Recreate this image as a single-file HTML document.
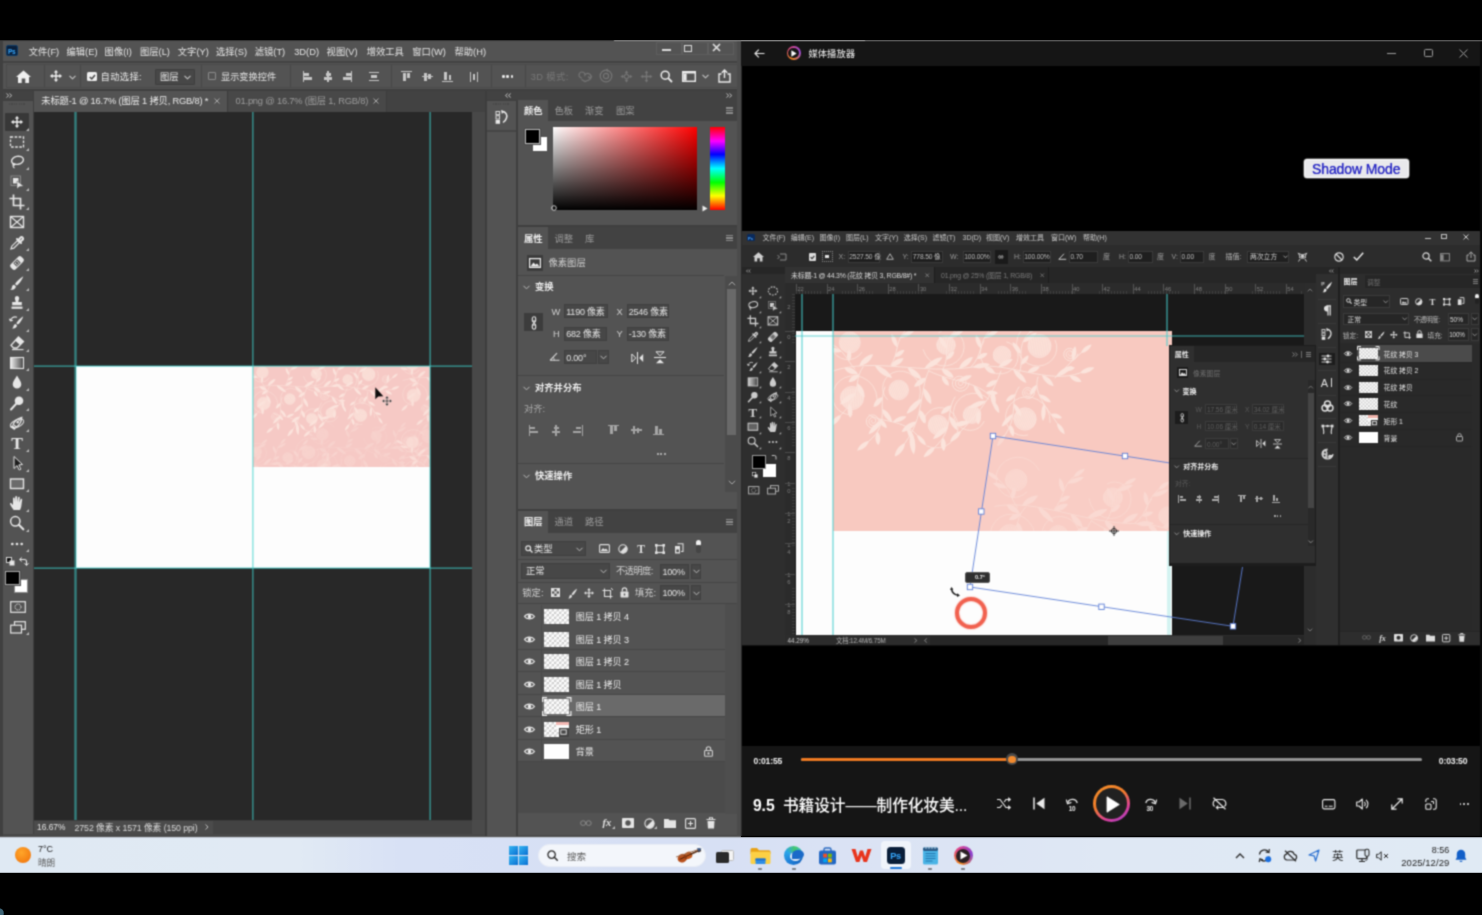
<!DOCTYPE html>
<html lang="zh-CN"><head><meta charset="utf-8"><title>screen</title><style>
*{box-sizing:border-box}
html,body{margin:0;padding:0}
body{background:#000;width:1482px;height:915px;position:relative;overflow:hidden;font-family:"Liberation Sans","Noto Sans CJK SC",sans-serif;}
.a{position:absolute}
.t{position:absolute;white-space:nowrap;color:#ddd;font-size:9.5px}
svg{overflow:visible}
#root{position:absolute;left:0;top:0;width:1482px;height:915px;overflow:hidden}
</style></head><body>
<svg width="0" height="0" style="position:absolute"><defs><filter id="soft" x="0" y="0" width="100%" height="100%" color-interpolation-filters="sRGB"><feConvolveMatrix order="3" kernelMatrix="0.0439 0.1217 0.0439 0.1217 0.3392 0.1217 0.0439 0.1217 0.0439" edgeMode="duplicate" preserveAlpha="true"/></filter></defs></svg>
<div id="root" style="filter:url(#soft)">
<div class="a" style="left:0px;top:40px;width:741px;height:796.5px;background:#535353;"></div>
<div class="a" style="left:0px;top:40px;width:3px;height:796px;background:#404040;"></div>
<div class="a" style="left:737px;top:40px;width:4.3px;height:796px;background:#4b4b4b;"></div>
<div class="a" style="left:0px;top:40px;width:614px;height:1.2px;background:#3c3c3c;"></div>
<div class="a" style="left:614px;top:40px;width:127.3px;height:1.3px;background:#a2a2a2;"></div>
<div class="a" style="left:6.3px;top:44.8px;width:12px;height:11.6px;background:#0a1f3a;border-radius:2px;border:1px solid #0d3a66"></div>
<div class="t" style="left:7.9px;top:47.2px;font-size:6.6px;line-height:9.2px;color:#35a8ff;font-weight:bold;letter-spacing:-0.3px">Ps</div>
<div class="t" style="left:28.7px;top:45.7px;font-size:9.3px;line-height:13.0px;color:#e6e6e6;">文件(F)</div>
<div class="t" style="left:66.5px;top:45.7px;font-size:9.3px;line-height:13.0px;color:#e6e6e6;">编辑(E)</div>
<div class="t" style="left:104.6px;top:45.7px;font-size:9.3px;line-height:13.0px;color:#e6e6e6;">图像(I)</div>
<div class="t" style="left:140px;top:45.7px;font-size:9.3px;line-height:13.0px;color:#e6e6e6;">图层(L)</div>
<div class="t" style="left:177.8px;top:45.7px;font-size:9.3px;line-height:13.0px;color:#e6e6e6;">文字(Y)</div>
<div class="t" style="left:216px;top:45.7px;font-size:9.3px;line-height:13.0px;color:#e6e6e6;">选择(S)</div>
<div class="t" style="left:254.7px;top:45.7px;font-size:9.3px;line-height:13.0px;color:#e6e6e6;">滤镜(T)</div>
<div class="t" style="left:294.2px;top:45.7px;font-size:9.3px;line-height:13.0px;color:#e6e6e6;">3D(D)</div>
<div class="t" style="left:326.6px;top:45.7px;font-size:9.3px;line-height:13.0px;color:#e6e6e6;">视图(V)</div>
<div class="t" style="left:366.7px;top:45.7px;font-size:9.3px;line-height:13.0px;color:#e6e6e6;">增效工具</div>
<div class="t" style="left:412.3px;top:45.7px;font-size:9.3px;line-height:13.0px;color:#e6e6e6;">窗口(W)</div>
<div class="t" style="left:454.5px;top:45.7px;font-size:9.3px;line-height:13.0px;color:#e6e6e6;">帮助(H)</div>
<div class="a" style="left:656px;top:42px;width:26px;height:13px;background:transparent;border:1px solid #5e5e5e"></div>
<div class="a" style="left:682px;top:42px;width:26px;height:13px;background:transparent;border:1px solid #5e5e5e"></div>
<div class="a" style="left:708px;top:42px;width:26px;height:13px;background:transparent;border:1px solid #5e5e5e"></div>
<div class="a" style="left:662px;top:49px;width:9px;height:2px;background:#dcdcdc;"></div>
<div class="a" style="left:684px;top:45px;width:8px;height:7px;background:transparent;border:1.6px solid #dcdcdc"></div>
<svg class="a" style="left:712px;top:43px;" width="9" height="9" viewBox="0 0 9 9"><path d="M1 1 L8 8 M8 1 L1 8" stroke="#e0e0e0" stroke-width="1.7" fill="none"/></svg>
<div class="a" style="left:3px;top:61px;width:734px;height:1.5px;background:#434343;"></div>
<div class="a" style="left:3px;top:62.5px;width:734px;height:27px;background:#535353;"></div>
<div class="a" style="left:6px;top:64px;width:731px;height:24px;background:transparent;border:1px solid #4a4a4a;border-right:none"></div>
<div class="a" style="left:3px;top:89px;width:734px;height:2px;background:#3f3f3f;"></div>
<svg class="a" style="left:16px;top:70px;" width="15" height="13" viewBox="0 0 15 13"><path d="M7.5 0.5 L15 7 L13 7 L13 13 L9.3 13 L9.3 8.6 L5.7 8.6 L5.7 13 L2 13 L2 7 L0 7 Z" fill="#f0f0f0"/></svg>
<div class="a" style="left:43.5px;top:65px;width:1px;height:22px;background:#474747;"></div>
<svg class="a" style="left:49.7px;top:70.3px;" width="12" height="12" viewBox="0 0 12 12"><path d="M6 0 L8.2 2.6 L6.7 2.6 L6.7 5.3 L9.4 5.3 L9.4 3.8 L12 6 L9.4 8.2 L9.4 6.7 L6.7 6.7 L6.7 9.4 L8.2 9.4 L6 12 L3.8 9.4 L5.3 9.4 L5.3 6.7 L2.6 6.7 L2.6 8.2 L0 6 L2.6 3.8 L2.6 5.3 L5.3 5.3 L5.3 2.6 L3.8 2.6 Z" fill="#f0f0f0"/></svg>
<svg class="a" style="left:68.5px;top:74.5px;" width="7" height="5" viewBox="0 0 7 5"><path d="M0.5 0.8 L3.5 3.8 L6.5 0.8" stroke="#c8c8c8" stroke-width="1.1" fill="none"/></svg>
<div class="a" style="left:80px;top:65px;width:1px;height:22px;background:#474747;"></div>
<div class="a" style="left:87px;top:71.8px;width:9.5px;height:9.5px;background:#efefef;border-radius:1.5px"></div>
<svg class="a" style="left:88.6px;top:73.6px;" width="7" height="6" viewBox="0 0 7 6"><path d="M0.8 3 L2.8 5 L6 1" stroke="#444" stroke-width="1.5" fill="none"/></svg>
<div class="t" style="left:100.5px;top:71.0px;font-size:9.3px;line-height:13.0px;color:#e8e8e8;letter-spacing:0.35px">自动选择:</div>
<div class="a" style="left:154.5px;top:68.5px;width:40px;height:16.5px;background:#474747;border:1px solid #3e3e3e;border-radius:1px"></div>
<div class="t" style="left:160px;top:71.0px;font-size:9.3px;line-height:13.0px;color:#e8e8e8;">图层</div>
<svg class="a" style="left:184px;top:74.6px;" width="7" height="5" viewBox="0 0 7 5"><path d="M0.5 0.8 L3.5 3.8 L6.5 0.8" stroke="#c8c8c8" stroke-width="1.1" fill="none"/></svg>
<div class="a" style="left:200.5px;top:65px;width:1px;height:22px;background:#474747;"></div>
<div class="a" style="left:207.5px;top:72.3px;width:8px;height:8px;background:transparent;border:1px solid #8a8a8a;border-radius:1px"></div>
<div class="t" style="left:221px;top:71.0px;font-size:9.200000000000001px;line-height:12.9px;color:#e2e2e2;">显示变换控件</div>
<div class="a" style="left:289.5px;top:65px;width:1px;height:22px;background:#474747;"></div>
<div class="a" style="left:302.7px;top:71px;width:1.2px;height:11px;background:#c6c6c6;"></div>
<div class="a" style="left:304.4px;top:73px;width:5px;height:2.6px;background:#c6c6c6;"></div>
<div class="a" style="left:304.4px;top:77.3px;width:8px;height:2.6px;background:#c6c6c6;"></div>
<div class="a" style="left:327.4px;top:71px;width:1.2px;height:11px;background:#c6c6c6;"></div>
<div class="a" style="left:325.5px;top:73px;width:5px;height:2.6px;background:#c6c6c6;"></div>
<div class="a" style="left:324px;top:77.3px;width:8px;height:2.6px;background:#c6c6c6;"></div>
<div class="a" style="left:351.3px;top:71px;width:1.2px;height:11px;background:#c6c6c6;"></div>
<div class="a" style="left:345.8px;top:73px;width:5px;height:2.6px;background:#c6c6c6;"></div>
<div class="a" style="left:342.8px;top:77.3px;width:8px;height:2.6px;background:#c6c6c6;"></div>
<div class="a" style="left:368.8px;top:72px;width:10px;height:1.2px;background:#c6c6c6;"></div>
<div class="a" style="left:370.8px;top:75.3px;width:6px;height:2.4px;background:#c6c6c6;"></div>
<div class="a" style="left:368.8px;top:80px;width:10px;height:1.2px;background:#c6c6c6;"></div>
<div class="a" style="left:391px;top:65px;width:1px;height:22px;background:#474747;"></div>
<div class="a" style="left:401.0px;top:71px;width:11px;height:1.2px;background:#c6c6c6;"></div>
<div class="a" style="left:403.0px;top:72.7px;width:2.6px;height:8px;background:#c6c6c6;"></div>
<div class="a" style="left:407.3px;top:72.7px;width:2.6px;height:5px;background:#c6c6c6;"></div>
<div class="a" style="left:422.0px;top:75.9px;width:11px;height:1.2px;background:#c6c6c6;"></div>
<div class="a" style="left:424.0px;top:72.5px;width:2.6px;height:8px;background:#c6c6c6;"></div>
<div class="a" style="left:428.3px;top:74px;width:2.6px;height:5px;background:#c6c6c6;"></div>
<div class="a" style="left:442.2px;top:80.8px;width:11px;height:1.2px;background:#c6c6c6;"></div>
<div class="a" style="left:444.2px;top:72.3px;width:2.6px;height:8px;background:#c6c6c6;"></div>
<div class="a" style="left:448.5px;top:75.3px;width:2.6px;height:5px;background:#c6c6c6;"></div>
<div class="a" style="left:470px;top:71.5px;width:1.2px;height:10px;background:#c6c6c6;"></div>
<div class="a" style="left:472.8px;top:73.5px;width:2.4px;height:6px;background:#c6c6c6;"></div>
<div class="a" style="left:476.8px;top:71.5px;width:1.2px;height:10px;background:#c6c6c6;"></div>
<div class="a" style="left:491px;top:65px;width:1px;height:22px;background:#474747;"></div>
<div class="a" style="left:502.0px;top:75.3px;width:2.6px;height:2.6px;background:#ececec;border-radius:50%"></div>
<div class="a" style="left:506.3px;top:75.3px;width:2.6px;height:2.6px;background:#ececec;border-radius:50%"></div>
<div class="a" style="left:510.6px;top:75.3px;width:2.6px;height:2.6px;background:#ececec;border-radius:50%"></div>
<div class="a" style="left:524.5px;top:65px;width:1px;height:22px;background:#474747;"></div>
<div class="t" style="left:530.7px;top:70.7px;font-size:9.3px;line-height:13.0px;color:#787878;letter-spacing:0.4px">3D 模式:</div>
<svg class="a" style="left:579px;top:70px;" width="14" height="13" viewBox="0 0 14 13"><path d="M3 8 A3 3 0 1 1 6 5 A3.2 3.2 0 1 1 11.5 8.5 M2.5 9.5 L6 11.5 L11 9.5 M9 6.5 L11.5 8.7 L12.8 5.8" stroke="#767676" stroke-width="1.2" fill="none"/></svg>
<svg class="a" style="left:599.4px;top:69.3px;" width="14" height="14" viewBox="0 0 14 14"><circle cx="7" cy="7" r="5.8" stroke="#767676" stroke-width="1.2" fill="none"/><circle cx="7" cy="7" r="2.6" stroke="#767676" stroke-width="1.2" fill="none"/><path d="M7 1 L9 0 M7 1 L8.6 2.8" stroke="#767676" stroke-width="1"/></svg>
<svg class="a" style="left:619.5px;top:69.8px;" width="13" height="13" viewBox="0 0 13 13"><path d="M6.5 0.5 L8.3 3 L4.7 3 Z M6.5 12.5 L8.3 10 L4.7 10 Z M0.5 6.5 L3 4.7 L3 8.3 Z M12.5 6.5 L10 4.7 L10 8.3 Z" fill="#767676"/><path d="M6.5 3.6 L9.4 6.5 L6.5 9.4 L3.6 6.5 Z" stroke="#767676" stroke-width="1.1" fill="none"/></svg>
<svg class="a" style="left:639.7px;top:69.8px;" width="13" height="13" viewBox="0 0 13 13"><path d="M6.5 0.5 L8.3 3 L4.7 3 Z M6.5 12.5 L8.3 10 L4.7 10 Z M0.5 6.5 L3 4.7 L3 8.3 Z M12.5 6.5 L10 4.7 L10 8.3 Z" fill="#767676"/><path d="M6.5 3 L6.5 10 M3 6.5 L10 6.5" stroke="#767676" stroke-width="1.3"/></svg>
<svg class="a" style="left:659.5px;top:70px;" width="13" height="13" viewBox="0 0 13 13"><circle cx="5.2" cy="5.2" r="4" stroke="#ececec" stroke-width="1.5" fill="none"/><path d="M8.2 8.2 L12 12" stroke="#ececec" stroke-width="1.8"/></svg>
<svg class="a" style="left:682px;top:71px;" width="14" height="11" viewBox="0 0 14 11"><rect x="0.7" y="0.7" width="12.6" height="9.6" stroke="#ececec" stroke-width="1.4" fill="none"/><rect x="1.4" y="2.6" width="3.2" height="7" fill="#ececec"/><rect x="0.7" y="0.7" width="12.6" height="1.8" fill="#ececec"/></svg>
<svg class="a" style="left:702.3px;top:74.3px;" width="7" height="5" viewBox="0 0 7 5"><path d="M0.5 0.8 L3.5 3.8 L6.5 0.8" stroke="#c8c8c8" stroke-width="1.1" fill="none"/></svg>
<svg class="a" style="left:717.5px;top:68.5px;" width="13" height="14" viewBox="0 0 13 14"><path d="M3.5 5 L1 5 L1 13 L12 13 L12 5 L9.5 5" stroke="#ececec" stroke-width="1.4" fill="none"/><path d="M6.5 9 L6.5 1.5 M3.8 3.8 L6.5 1 L9.2 3.8" stroke="#ececec" stroke-width="1.4" fill="none"/></svg>
<div class="a" style="left:3px;top:91px;width:734px;height:20.7px;background:#424242;"></div>
<div class="a" style="left:33px;top:91px;width:193.5px;height:20.7px;background:#535353;"></div>
<div class="a" style="left:227.5px;top:91px;width:158px;height:20.7px;background:#484848;"></div>
<div class="a" style="left:226.5px;top:91px;width:1px;height:20.7px;background:#3c3c3c;"></div>
<div class="a" style="left:385.5px;top:91px;width:1px;height:20.7px;background:#3c3c3c;"></div>
<div class="t" style="left:41.3px;top:95.4px;font-size:9.3px;line-height:13.0px;color:#ececec;letter-spacing:-0.18px">未标题-1 @ 16.7% (图层 1 拷贝, RGB/8) *</div>
<svg class="a" style="left:214px;top:98.3px;" width="6" height="6" viewBox="0 0 6 6"><path d="M0.5 0.5 L5.5 5.5 M5.5 0.5 L0.5 5.5" stroke="#a5a5a5" stroke-width="1"/></svg>
<div class="t" style="left:235.5px;top:95.4px;font-size:9.3px;line-height:13.0px;color:#9d9d9d;letter-spacing:-0.18px">01.png @ 16.7% (图层 1, RGB/8)</div>
<svg class="a" style="left:373.3px;top:98.3px;" width="6" height="6" viewBox="0 0 6 6"><path d="M0.5 0.5 L5.5 5.5 M5.5 0.5 L0.5 5.5" stroke="#a5a5a5" stroke-width="1"/></svg>
<div class="a" style="left:3px;top:91px;width:29.5px;height:745px;background:#535353;"></div>
<div class="a" style="left:3px;top:91px;width:29.5px;height:8.5px;background:#424242;"></div>
<svg class="a" style="left:6px;top:92.5px;" width="7" height="5" viewBox="0 0 7 5"><path d="M0.5 0.5 L2.7 2.5 L0.5 4.5 M3.5 0.5 L5.7 2.5 L3.5 4.5" stroke="#d0d0d0" stroke-width="0.9" fill="none"/></svg>
<div class="a" style="left:3px;top:99.5px;width:29.5px;height:1px;background:#3f3f3f;"></div>
<div class="a" style="left:9.0px;top:102.5px;width:1.2px;height:2.2px;background:#484848;"></div>
<div class="a" style="left:11.4px;top:102.5px;width:1.2px;height:2.2px;background:#484848;"></div>
<div class="a" style="left:13.8px;top:102.5px;width:1.2px;height:2.2px;background:#484848;"></div>
<div class="a" style="left:16.2px;top:102.5px;width:1.2px;height:2.2px;background:#484848;"></div>
<div class="a" style="left:18.6px;top:102.5px;width:1.2px;height:2.2px;background:#484848;"></div>
<div class="a" style="left:21.0px;top:102.5px;width:1.2px;height:2.2px;background:#484848;"></div>
<div class="a" style="left:23.4px;top:102.5px;width:1.2px;height:2.2px;background:#484848;"></div>
<div class="a" style="left:32.5px;top:91px;width:1px;height:745px;background:#3f3f3f;"></div>
<div class="a" style="left:5.2px;top:113px;width:24px;height:18px;background:#383838;border-radius:1px"></div>
<svg class="a" style="left:9.3px;top:114.3px;" width="16" height="16" viewBox="0 0 16 16"><g transform="translate(2,2)"><path d="M6 0 L8.2 2.6 L6.7 2.6 L6.7 5.3 L9.4 5.3 L9.4 3.8 L12 6 L9.4 8.2 L9.4 6.7 L6.7 6.7 L6.7 9.4 L8.2 9.4 L6 12 L3.8 9.4 L5.3 9.4 L5.3 6.7 L2.6 6.7 L2.6 8.2 L0 6 L2.6 3.8 L2.6 5.3 L5.3 5.3 L5.3 2.6 L3.8 2.6 Z" fill="#f0f0f0"/></g></svg>
<svg class="a" style="left:25.5px;top:127.89999999999999px;" width="3" height="3" viewBox="0 0 3 3"><path d="M3 0 L3 3 L0 3 Z" fill="#bdbdbd"/></svg>
<svg class="a" style="left:9.3px;top:134px;" width="16" height="16" viewBox="0 0 16 16"><rect x="1.5" y="3" width="13" height="10" stroke="#e6e6e6" stroke-width="1.3" fill="none" stroke-dasharray="2.6 1.5"/></svg>
<svg class="a" style="left:25.5px;top:147.6px;" width="3" height="3" viewBox="0 0 3 3"><path d="M3 0 L3 3 L0 3 Z" fill="#bdbdbd"/></svg>
<svg class="a" style="left:9.3px;top:153.8px;" width="16" height="16" viewBox="0 0 16 16"><ellipse cx="8.5" cy="6.3" rx="6" ry="4" stroke="#e6e6e6" stroke-width="1.4" fill="none" transform="rotate(-12 8.5 6.3)"/><path d="M4.3 9 C3 10.5 4.5 12 5.5 11 C6.3 10 5 9.3 4.3 10.5 C3.8 12 4.5 13.5 5.5 14" stroke="#e6e6e6" stroke-width="1.1" fill="none"/></svg>
<svg class="a" style="left:25.5px;top:167.4px;" width="3" height="3" viewBox="0 0 3 3"><path d="M3 0 L3 3 L0 3 Z" fill="#bdbdbd"/></svg>
<svg class="a" style="left:9.3px;top:174px;" width="16" height="16" viewBox="0 0 16 16"><rect x="2" y="2" width="9.5" height="9.5" stroke="#8a8a8a" stroke-width="1" fill="none"/><rect x="4" y="4" width="5.5" height="5.5" fill="#e6e6e6"/><path d="M8 7 L8 15 L10.2 12.8 L14.5 12 Z" fill="#e6e6e6" stroke="#535353" stroke-width="0.5"/></svg>
<svg class="a" style="left:25.5px;top:187.6px;" width="3" height="3" viewBox="0 0 3 3"><path d="M3 0 L3 3 L0 3 Z" fill="#bdbdbd"/></svg>
<svg class="a" style="left:9.3px;top:193.8px;" width="16" height="16" viewBox="0 0 16 16"><path d="M4.5 0.5 L4.5 11.5 L15.5 11.5 M0.5 4.5 L11.5 4.5 L11.5 15.5" stroke="#e6e6e6" stroke-width="1.7" fill="none"/></svg>
<svg class="a" style="left:25.5px;top:207.4px;" width="3" height="3" viewBox="0 0 3 3"><path d="M3 0 L3 3 L0 3 Z" fill="#bdbdbd"/></svg>
<svg class="a" style="left:9.3px;top:214.3px;" width="16" height="16" viewBox="0 0 16 16"><rect x="1.5" y="2.5" width="13" height="11" stroke="#e6e6e6" stroke-width="1.4" fill="none"/><path d="M1.5 2.5 L14.5 13.5 M14.5 2.5 L1.5 13.5" stroke="#e6e6e6" stroke-width="1.1"/></svg>
<svg class="a" style="left:9.3px;top:234.6px;" width="16" height="16" viewBox="0 0 16 16"><path d="M2 14 L2.8 11.2 L8.5 5.5 L10.5 7.5 L4.8 13.2 Z" stroke="#e6e6e6" stroke-width="1.2" fill="none"/><path d="M8 4 L12 8 M9.5 5 L12 2.2 A1.6 1.6 0 0 1 14 4.3 L11.2 6.8" stroke="#e6e6e6" stroke-width="2" fill="none" stroke-linecap="round"/></svg>
<svg class="a" style="left:25.5px;top:248.2px;" width="3" height="3" viewBox="0 0 3 3"><path d="M3 0 L3 3 L0 3 Z" fill="#bdbdbd"/></svg>
<svg class="a" style="left:9.3px;top:254.5px;" width="16" height="16" viewBox="0 0 16 16"><g transform="rotate(-45 8 8)"><rect x="0.5" y="4.5" width="15" height="7" rx="2.2" fill="#e6e6e6"/><rect x="5.2" y="5.5" width="5.6" height="5" fill="#535353"/><circle cx="6.8" cy="7" r="0.7" fill="#e6e6e6"/><circle cx="9.2" cy="7" r="0.7" fill="#e6e6e6"/><circle cx="6.8" cy="9.2" r="0.7" fill="#e6e6e6"/><circle cx="9.2" cy="9.2" r="0.7" fill="#e6e6e6"/></g></svg>
<svg class="a" style="left:25.5px;top:268.1px;" width="3" height="3" viewBox="0 0 3 3"><path d="M3 0 L3 3 L0 3 Z" fill="#bdbdbd"/></svg>
<svg class="a" style="left:9.3px;top:274.6px;" width="16" height="16" viewBox="0 0 16 16"><path d="M14.3 1.2 C11 3 7.5 6.5 6 9 L7.6 10.5 C10 9 13 5 14.3 1.2 Z" fill="#e6e6e6"/><path d="M5.2 9.8 C3.5 10 3 11.5 2.8 12.8 C2.6 13.8 2 14.3 1.2 14.6 C3.5 15.3 6.5 14.3 6.9 11.4 Z" fill="#e6e6e6"/></svg>
<svg class="a" style="left:25.5px;top:288.20000000000005px;" width="3" height="3" viewBox="0 0 3 3"><path d="M3 0 L3 3 L0 3 Z" fill="#bdbdbd"/></svg>
<svg class="a" style="left:9.3px;top:294.6px;" width="16" height="16" viewBox="0 0 16 16"><path d="M6.3 1.8 A2.5 2.5 0 0 1 9.7 1.8 C11 3.3 9.3 5.2 9.3 7 L12.8 7 L12.8 10.2 L3.2 10.2 L3.2 7 L6.7 7 C6.7 5.2 5 3.3 6.3 1.8 Z" fill="#e6e6e6"/><rect x="2.5" y="11.6" width="11" height="2.2" fill="#e6e6e6"/></svg>
<svg class="a" style="left:25.5px;top:308.20000000000005px;" width="3" height="3" viewBox="0 0 3 3"><path d="M3 0 L3 3 L0 3 Z" fill="#bdbdbd"/></svg>
<svg class="a" style="left:9.3px;top:315px;" width="16" height="16" viewBox="0 0 16 16"><path d="M14.3 1.2 C11.5 3 8.5 6 7.3 8.2 L8.8 9.6 C11 8 13.3 4.5 14.3 1.2 Z" fill="#e6e6e6"/><path d="M6.6 9 C5 9.3 4.6 10.5 4.4 11.6 C4.3 12.5 3.8 13 3 13.3 C5 14 7.6 13.2 8 10.5 Z" fill="#e6e6e6"/><path d="M1.5 6 A4.5 4.5 0 0 1 8 2.3 M1.5 6 L0.5 3.8 M1.5 6 L3.8 5.2" stroke="#e6e6e6" stroke-width="1.2" fill="none"/></svg>
<svg class="a" style="left:25.5px;top:328.6px;" width="3" height="3" viewBox="0 0 3 3"><path d="M3 0 L3 3 L0 3 Z" fill="#bdbdbd"/></svg>
<svg class="a" style="left:9.3px;top:335.2px;" width="16" height="16" viewBox="0 0 16 16"><path d="M9.5 2 L14.5 6.5 L8 13 L4.5 13 L2 10.3 Z" stroke="#e6e6e6" stroke-width="1.3" fill="none"/><path d="M9.5 2 L14.5 6.5 L11 10 L6 5.5 Z" fill="#e6e6e6"/><path d="M3 14.6 L14.5 14.6" stroke="#e6e6e6" stroke-width="1.1"/></svg>
<svg class="a" style="left:25.5px;top:348.8px;" width="3" height="3" viewBox="0 0 3 3"><path d="M3 0 L3 3 L0 3 Z" fill="#bdbdbd"/></svg>
<svg class="a" style="left:9.3px;top:354.5px;" width="16" height="16" viewBox="0 0 16 16"><defs><linearGradient id="tg" x1="0" x2="1"><stop offset="0" stop-color="#f0f0f0"/><stop offset="1" stop-color="#444"/></linearGradient></defs><rect x="1.5" y="2.5" width="13" height="11" fill="url(#tg)" stroke="#e6e6e6" stroke-width="1.1"/></svg>
<svg class="a" style="left:25.5px;top:368.1px;" width="3" height="3" viewBox="0 0 3 3"><path d="M3 0 L3 3 L0 3 Z" fill="#bdbdbd"/></svg>
<svg class="a" style="left:9.3px;top:374.4px;" width="16" height="16" viewBox="0 0 16 16"><path d="M8 1.5 C10 5 12.3 7.5 12.3 10.3 A4.3 4.3 0 0 1 3.7 10.3 C3.7 7.5 6 5 8 1.5 Z" fill="#e6e6e6"/></svg>
<svg class="a" style="left:25.5px;top:388.0px;" width="3" height="3" viewBox="0 0 3 3"><path d="M3 0 L3 3 L0 3 Z" fill="#bdbdbd"/></svg>
<svg class="a" style="left:9.3px;top:394.6px;" width="16" height="16" viewBox="0 0 16 16"><circle cx="10" cy="5.8" r="4.3" fill="#e6e6e6"/><path d="M7 9 L2 14.5" stroke="#e6e6e6" stroke-width="2" stroke-linecap="round"/></svg>
<svg class="a" style="left:25.5px;top:408.20000000000005px;" width="3" height="3" viewBox="0 0 3 3"><path d="M3 0 L3 3 L0 3 Z" fill="#bdbdbd"/></svg>
<svg class="a" style="left:9.3px;top:415px;" width="16" height="16" viewBox="0 0 16 16"><g transform="rotate(40 8 8)"><path d="M8 0.5 C10.5 4 11.5 7.5 10 11.5 L6 11.5 C4.5 7.5 5.5 4 8 0.5 Z" stroke="#e6e6e6" stroke-width="1.3" fill="none"/><circle cx="8" cy="7" r="1.3" fill="#e6e6e6"/><path d="M8 0.5 L8 5.8" stroke="#e6e6e6" stroke-width="1"/><rect x="5.5" y="12.6" width="5" height="2.6" fill="#e6e6e6"/></g><ellipse cx="8" cy="8.5" rx="7.3" ry="3.6" stroke="#e6e6e6" stroke-width="0.9" fill="none" transform="rotate(-25 8 8.5)"/></svg>
<svg class="a" style="left:25.5px;top:428.6px;" width="3" height="3" viewBox="0 0 3 3"><path d="M3 0 L3 3 L0 3 Z" fill="#bdbdbd"/></svg>
<svg class="a" style="left:9.3px;top:435.4px;" width="16" height="16" viewBox="0 0 16 16"><text x="8" y="14.2" text-anchor="middle" font-family="Liberation Serif,serif" font-weight="bold" font-size="17.5" fill="#e6e6e6">T</text></svg>
<svg class="a" style="left:25.5px;top:449.0px;" width="3" height="3" viewBox="0 0 3 3"><path d="M3 0 L3 3 L0 3 Z" fill="#bdbdbd"/></svg>
<svg class="a" style="left:9.3px;top:455.3px;" width="16" height="16" viewBox="0 0 16 16"><path d="M5 1.5 L5 13.5 L8 10.6 L10.2 15 L11.9 14.2 L9.8 9.9 L13.5 9.5 Z" fill="#1c1c1c" stroke="#e6e6e6" stroke-width="1"/></svg>
<svg class="a" style="left:25.5px;top:468.90000000000003px;" width="3" height="3" viewBox="0 0 3 3"><path d="M3 0 L3 3 L0 3 Z" fill="#bdbdbd"/></svg>
<svg class="a" style="left:9.3px;top:475.5px;" width="16" height="16" viewBox="0 0 16 16"><rect x="1.5" y="3" width="13" height="9.5" stroke="#e6e6e6" stroke-width="1.4" fill="#6b6b6b"/></svg>
<svg class="a" style="left:25.5px;top:489.1px;" width="3" height="3" viewBox="0 0 3 3"><path d="M3 0 L3 3 L0 3 Z" fill="#bdbdbd"/></svg>
<svg class="a" style="left:9.3px;top:495.4px;" width="16" height="16" viewBox="0 0 16 16"><path d="M4.6 15 C3 12.5 1.5 10.5 1 9 C0.8 8 1.9 7.6 2.6 8.4 L4 10 L4 3.3 C4 2.2 5.7 2.2 5.7 3.3 L6 7 L6.3 1.8 C6.4 0.7 8 0.7 8.1 1.8 L8.3 7 L9 2.4 C9.2 1.4 10.8 1.6 10.7 2.7 L10.4 7.5 L11.6 4.3 C12 3.4 13.4 3.8 13.2 4.9 C12.7 7.5 12.6 9.5 12.3 11.3 C12 13 11.5 14 11 15 Z" fill="#e6e6e6"/></svg>
<svg class="a" style="left:25.5px;top:509.0px;" width="3" height="3" viewBox="0 0 3 3"><path d="M3 0 L3 3 L0 3 Z" fill="#bdbdbd"/></svg>
<svg class="a" style="left:9.3px;top:515.2px;" width="16" height="16" viewBox="0 0 16 16"><circle cx="6.3" cy="6.3" r="4.7" stroke="#e6e6e6" stroke-width="1.5" fill="none"/><path d="M9.8 9.8 L14.3 14.3" stroke="#e6e6e6" stroke-width="2.1" stroke-linecap="round"/></svg>
<svg class="a" style="left:25.5px;top:528.8000000000001px;" width="3" height="3" viewBox="0 0 3 3"><path d="M3 0 L3 3 L0 3 Z" fill="#bdbdbd"/></svg>
<svg class="a" style="left:9.3px;top:535.6px;" width="16" height="16" viewBox="0 0 16 16"><circle cx="3.3" cy="8" r="1.35" fill="#e6e6e6"/><circle cx="8" cy="8" r="1.35" fill="#e6e6e6"/><circle cx="12.7" cy="8" r="1.35" fill="#e6e6e6"/></svg>
<svg class="a" style="left:25.5px;top:549.2px;" width="3" height="3" viewBox="0 0 3 3"><path d="M3 0 L3 3 L0 3 Z" fill="#bdbdbd"/></svg>
<svg class="a" style="left:5.5px;top:557px;" width="10" height="9" viewBox="0 0 10 9"><rect x="0.5" y="0.5" width="5" height="5" fill="#111" stroke="#e6e6e6" stroke-width="0.9"/><rect x="3.5" y="3.5" width="5" height="5" fill="#e6e6e6"/></svg>
<svg class="a" style="left:19px;top:556.5px;" width="9" height="9" viewBox="0 0 9 9"><path d="M1 2.5 L5.5 2.5 A2 2 0 0 1 7.5 4.5 L7.5 8" stroke="#e6e6e6" stroke-width="1.1" fill="none"/><path d="M2.8 0.5 L0.5 2.5 L2.8 4.5 M5.5 6.2 L7.5 8.5 L9.5 6.2" stroke="#e6e6e6" stroke-width="1" fill="none"/></svg>
<div class="a" style="left:13.8px;top:579px;width:14.5px;height:13.5px;background:#ffffff;border:1px solid #888"></div>
<div class="a" style="left:5px;top:571.3px;width:15px;height:13.6px;background:#000;border:1px solid #aaa;outline:1px solid #4a4a4a"></div>
<svg class="a" style="left:9.5px;top:600.5px;" width="16" height="12" viewBox="0 0 16 12"><rect x="0.7" y="0.7" width="14.6" height="10.6" stroke="#e6e6e6" stroke-width="1.2" fill="none"/><circle cx="8" cy="6" r="3" stroke="#e6e6e6" stroke-width="1" fill="none" stroke-dasharray="1.4 1"/></svg>
<svg class="a" style="left:9.5px;top:620.5px;" width="16" height="13" viewBox="0 0 16 13"><rect x="4.5" y="0.7" width="10.8" height="7.6" stroke="#e6e6e6" stroke-width="1.2" fill="#535353"/><rect x="0.7" y="4.2" width="10.8" height="7.8" stroke="#e6e6e6" stroke-width="1.2" fill="#535353"/></svg>
<svg class="a" style="left:25.5px;top:632px;" width="3" height="3" viewBox="0 0 3 3"><path d="M3 0 L3 3 L0 3 Z" fill="#bdbdbd"/></svg>
<div class="a" style="left:33.5px;top:111.7px;width:438px;height:708.3px;background:#282828;"></div>
<div class="a" style="left:76px;top:366px;width:354px;height:202px;background:#fdfdfd;"></div>
<div class="a" style="left:253px;top:366px;width:177px;height:101px;background:#f6c9c5;"></div>
<svg class="a" style="left:253px;top:366px;overflow:hidden" width="177" height="101" viewBox="0 0 177 101"><defs><g id="fl"><g fill="none" stroke="#fbe3dc" stroke-width="0.9" stroke-linecap="round"><path d="M0 40 C40 26 90 44 140 36 M140 36 C175 30 215 54 247 42 M96 39 C86 60 92 85 72 112 M168 40 C160 62 150 78 128 100 M58 34 C66 22 62 10 72 0 M138 36 C150 24 146 10 156 0 M30 36 C20 50 30 62 8 84 M205 46 C200 62 212 74 224 92 M96 40 C120 52 150 50 160 70 M22 38 C14 30 12 20 0 14 M110 38 C118 24 108 10 122 0 M186 42 C192 30 182 16 196 2 M222 47 C232 38 238 30 248 22 M52 56 C44 76 58 92 36 110 M122 66 C112 82 122 98 102 116 M186 56 C176 70 186 84 172 104 M36 84 C50 92 70 88 84 104"/><path d="M28.7 21.5 L25.7 24.8 L21.9 27.2 L17.4 28.5 L12.6 28.5 L7.8 27.1 L3.5 24.4 L0.0 20.4 L-2.3 15.6 L-3.2 10.1 L-2.5 4.5 L-0.2 -0.8 L3.6 -5.4 L8.6 -8.9 L14.4 -10.9 L20.8 -11.2 L27.1 -9.6 L32.9 -6.3 L37.6 -1.5 M19.0 83.6 L14.3 83.4 L9.7 81.9 L5.5 79.1 L2.3 75.2 L0.2 70.3 L-0.5 65.0 L0.4 59.5 L2.8 54.3 L6.6 49.9 L11.6 46.7 L17.5 45.0 L23.7 44.9 L29.8 46.6 L35.4 50.0 L39.9 54.9 L42.9 61.0 L44.1 67.9 L43.3 74.9 M54.4 68.5 L51.7 65.2 L50.1 61.2 L49.6 56.7 L50.4 52.2 L52.4 47.9 L55.7 44.2 L60.0 41.6 L65.0 40.2 L70.4 40.3 L75.6 41.9 L80.3 44.9 L84.1 49.2 L86.5 54.6 L87.4 60.5 L86.7 66.6 L84.1 72.4 L80.0 77.4 L74.6 81.1 M90.4 91.4 L91.2 87.3 L93.3 83.4 L96.4 80.2 L100.4 77.9 L105.0 76.7 L109.9 76.9 L114.7 78.5 L119.0 81.4 L122.3 85.5 L124.5 90.6 L125.2 96.1 L124.3 101.8 L121.8 107.1 L117.8 111.6 L112.6 115.0 L106.6 116.7 L100.2 116.8 L93.8 115.0 M105.8 1.6 L109.4 -0.4 L113.5 -1.3 L117.9 -1.0 L122.1 0.5 L125.9 3.2 L128.8 7.0 L130.6 11.5 L131.1 16.5 L130.2 21.6 L127.8 26.4 L124.1 30.4 L119.3 33.3 L113.7 34.8 L107.8 34.7 L102.1 32.9 L97.0 29.5 L92.9 24.7 L90.2 18.8 M173.7 11.0 L177.4 12.4 L180.7 14.9 L183.2 18.3 L184.7 22.3 L185.1 26.8 L184.1 31.4 L181.9 35.6 L178.4 39.1 L174.0 41.6 L169.0 42.8 L163.7 42.6 L158.5 40.8 L153.9 37.6 L150.3 33.1 L148.0 27.7 L147.3 21.7 L148.3 15.6 L151.0 10.0 M222.1 9.3 L223.6 13.8 L223.7 18.7 L222.5 23.5 L219.9 27.9 L216.0 31.5 L211.2 34.0 L205.8 35.1 L200.1 34.6 L194.7 32.5 L190.0 28.9 L186.3 24.0 L184.1 18.1 L183.6 11.8 L184.9 5.4 L188.0 -0.5 L192.7 -5.4 L198.7 -8.9 L205.6 -10.6 M151.0 90.5 L148.9 93.9 L145.9 96.7 L142.2 98.6 L137.9 99.4 L133.4 98.9 L129.1 97.2 L125.4 94.3 L122.5 90.3 L120.8 85.5 L120.5 80.3 L121.7 75.1 L124.3 70.4 L128.2 66.4 L133.3 63.6 L139.0 62.3 L145.0 62.6 L150.8 64.7 L155.9 68.3 M194.8 104.0 L190.3 104.6 L185.6 103.9 L181.1 101.9 L177.3 98.7 L174.4 94.4 L172.8 89.3 L172.7 83.9 L174.2 78.5 L177.1 73.6 L181.4 69.6 L186.8 66.9 L192.8 65.8 L199.0 66.4 L205.0 68.8 L210.2 72.8 L214.1 78.2 L216.5 84.6 L217.0 91.5" stroke-width="0.8"/><path d="M136.0 52.0 L135.0 55.6 L132.7 58.4 L129.6 60.0 L126.1 60.2 L123.0 58.9 L120.6 56.6 L119.5 53.5 L119.7 50.4 L121.2 47.7 L123.5 45.9 L126.4 45.2 L129.1 45.7 L131.4 47.3 L132.8 49.5 L133.1 52.1 L132.3 54.5 L130.7 56.3 L128.6 57.2 L126.3 57.2 L124.4 56.3 L123.0 54.8 L122.4 52.9 L122.6 51.0 L123.6 49.4 L125.0 48.4 L126.7 48.1 L128.3 48.5 L129.4 49.5 L130.1 50.7 L130.1 52.1 L129.6 53.3 L128.8 54.1 L127.7 54.4 L126.7 54.3 L125.9 53.8 L125.4 53.1 L125.3 52.3 L125.5 51.6 L125.9 51.1 M244.5 23.0 L243.7 26.0 L241.8 28.3 L239.1 29.7 L236.3 29.8 L233.6 28.8 L231.7 26.8 L230.8 24.3 L231.0 21.7 L232.2 19.4 L234.1 17.9 L236.5 17.3 L238.8 17.8 L240.7 19.1 L241.8 21.0 L242.1 23.1 L241.4 25.1 L240.1 26.6 L238.3 27.4 L236.4 27.4 L234.8 26.6 L233.6 25.3 L233.2 23.7 L233.4 22.1 L234.2 20.8 L235.4 20.0 L236.8 19.7 L238.0 20.1 L239.0 20.9 L239.6 22.0 L239.6 23.1 L239.2 24.1 L238.5 24.7 L237.6 25.0 L236.7 24.9 L236.0 24.5 L235.6 23.9 L235.6 23.2 L235.7 22.7 L236.1 22.3 M48.0 90.0 L47.1 93.2 L45.1 95.7 L42.3 97.1 L39.2 97.3 L36.4 96.2 L34.3 94.1 L33.4 91.4 L33.5 88.6 L34.8 86.2 L36.9 84.5 L39.4 83.9 L41.9 84.4 L43.9 85.8 L45.1 87.8 L45.4 90.1 L44.7 92.2 L43.3 93.8 L41.4 94.7 L39.4 94.7 L37.7 93.9 L36.4 92.5 L35.9 90.8 L36.1 89.1 L37.0 87.7 L38.3 86.8 L39.7 86.5 L41.1 86.9 L42.2 87.7 L42.7 88.9 L42.8 90.1 L42.3 91.1 L41.6 91.9 L40.6 92.2 L39.7 92.1 L39.0 91.6 L38.6 91.0 L38.5 90.3 L38.7 89.7 L39.0 89.2 M201.5 61.5 L200.8 64.1 L199.1 66.1 L196.9 67.3 L194.4 67.4 L192.1 66.5 L190.4 64.8 L189.6 62.6 L189.8 60.3 L190.8 58.4 L192.5 57.1 L194.5 56.6 L196.5 57.0 L198.2 58.1 L199.2 59.7 L199.4 61.6 L198.8 63.3 L197.7 64.6 L196.1 65.3 L194.5 65.3 L193.1 64.6 L192.1 63.5 L191.7 62.1 L191.8 60.7 L192.5 59.6 L193.6 58.9 L194.8 58.7 L195.9 59.0 L196.8 59.7 L197.2 60.6 L197.3 61.6 L196.9 62.4 L196.3 63.0 L195.5 63.3 L194.8 63.2 L194.2 62.8 L193.8 62.3 L193.7 61.7 L193.9 61.2 L194.2 60.9" stroke-width="0.9"/></g><g fill="#fbe3dc" stroke="none"><path transform="translate(11.4 36.9) rotate(24)" d="M0 0 C4.4 -4.0 11.1 -3.2 14.8 0 C11.1 3.2 4.4 4.0 0 0Z"/><path transform="translate(26.3 34.9) rotate(-40)" d="M0 0 C5.4 -4.0 13.5 -3.2 18.0 0 C13.5 3.2 5.4 4.0 0 0Z"/><path transform="translate(41.9 34.5) rotate(36)" d="M0 0 C6.4 -4.0 16.0 -3.2 21.3 0 C16.0 3.2 6.4 4.0 0 0Z"/><path transform="translate(58.0 35.2) rotate(-32)" d="M0 0 C4.4 -4.0 11.1 -3.2 14.8 0 C11.1 3.2 4.4 4.0 0 0Z"/><path transform="translate(74.6 36.4) rotate(40)" d="M0 0 C5.4 -4.0 13.5 -3.2 18.0 0 C13.5 3.2 5.4 4.0 0 0Z"/><path transform="translate(91.5 37.5) rotate(-32)" d="M0 0 C6.4 -4.0 16.0 -3.2 21.3 0 C16.0 3.2 6.4 4.0 0 0Z"/><path transform="translate(108.7 38.1) rotate(36)" d="M0 0 C4.4 -4.0 11.1 -3.2 14.8 0 C11.1 3.2 4.4 4.0 0 0Z"/><path transform="translate(126.1 37.6) rotate(-40)" d="M0 0 C5.4 -4.0 13.5 -3.2 18.0 0 C13.5 3.2 5.4 4.0 0 0Z"/><path transform="translate(140.0 36.0) rotate(-9)" d="M0 0 C5.1 -3.8 12.8 -3.0 17.0 0 C12.8 3.0 5.1 3.8 0 0Z"/><path transform="translate(151.2 35.0) rotate(35)" d="M0 0 C4.0 -3.6 10.0 -2.9 13.3 0 C10.0 2.9 4.0 3.6 0 0Z"/><path transform="translate(165.5 35.9) rotate(-29)" d="M0 0 C4.9 -3.6 12.2 -2.9 16.2 0 C12.2 2.9 4.9 3.6 0 0Z"/><path transform="translate(180.1 38.3) rotate(46)" d="M0 0 C5.7 -3.6 14.4 -2.9 19.1 0 C14.4 2.9 5.7 3.6 0 0Z"/><path transform="translate(194.6 41.2) rotate(-24)" d="M0 0 C4.0 -3.6 10.0 -2.9 13.3 0 C10.0 2.9 4.0 3.6 0 0Z"/><path transform="translate(209.0 43.9) rotate(44)" d="M0 0 C4.9 -3.6 12.2 -2.9 16.2 0 C12.2 2.9 4.9 3.6 0 0Z"/><path transform="translate(223.1 45.3) rotate(-33)" d="M0 0 C5.7 -3.6 14.4 -2.9 19.1 0 C14.4 2.9 5.7 3.6 0 0Z"/><path transform="translate(236.6 44.7) rotate(27)" d="M0 0 C4.0 -3.6 10.0 -2.9 13.3 0 C10.0 2.9 4.0 3.6 0 0Z"/><path transform="translate(247.0 42.0) rotate(-21)" d="M0 0 C4.6 -3.4 11.5 -2.7 15.3 0 C11.5 2.7 4.6 3.4 0 0Z"/><path transform="translate(93.0 46.8) rotate(143)" d="M0 0 C4.4 -4.0 11.1 -3.2 14.8 0 C11.1 3.2 4.4 4.0 0 0Z"/><path transform="translate(90.5 57.0) rotate(65)" d="M0 0 C5.4 -4.0 13.5 -3.2 18.0 0 C13.5 3.2 5.4 4.0 0 0Z"/><path transform="translate(88.7 67.7) rotate(135)" d="M0 0 C6.4 -4.0 16.0 -3.2 21.3 0 C16.0 3.2 6.4 4.0 0 0Z"/><path transform="translate(86.6 78.9) rotate(67)" d="M0 0 C4.4 -4.0 11.1 -3.2 14.8 0 C11.1 3.2 4.4 4.0 0 0Z"/><path transform="translate(83.4 90.4) rotate(145)" d="M0 0 C5.4 -4.0 13.5 -3.2 18.0 0 C13.5 3.2 5.4 4.0 0 0Z"/><path transform="translate(78.2 102.3) rotate(83)" d="M0 0 C6.4 -4.0 16.0 -3.2 21.3 0 C16.0 3.2 6.4 4.0 0 0Z"/><path transform="translate(72.0 112.0) rotate(127)" d="M0 0 C5.1 -3.8 12.8 -3.0 17.0 0 C12.8 3.0 5.1 3.8 0 0Z"/><path transform="translate(164.4 49.1) rotate(149)" d="M0 0 C4.0 -3.6 10.0 -2.9 13.3 0 C10.0 2.9 4.0 3.6 0 0Z"/><path transform="translate(159.3 59.8) rotate(83)" d="M0 0 C4.9 -3.6 12.2 -2.9 16.2 0 C12.2 2.9 4.9 3.6 0 0Z"/><path transform="translate(153.2 70.0) rotate(159)" d="M0 0 C5.7 -3.6 14.4 -2.9 19.1 0 C14.4 2.9 5.7 3.6 0 0Z"/><path transform="translate(145.8 80.2) rotate(93)" d="M0 0 C4.0 -3.6 10.0 -2.9 13.3 0 C10.0 2.9 4.0 3.6 0 0Z"/><path transform="translate(136.7 90.9) rotate(168)" d="M0 0 C4.9 -3.6 12.2 -2.9 16.2 0 C12.2 2.9 4.9 3.6 0 0Z"/><path transform="translate(128.0 100.0) rotate(135)" d="M0 0 C4.6 -3.4 11.5 -2.7 15.3 0 C11.5 2.7 4.6 3.4 0 0Z"/><path transform="translate(61.8 26.0) rotate(-36)" d="M0 0 C3.6 -3.2 8.9 -2.6 11.8 0 C8.9 2.6 3.6 3.2 0 0Z"/><path transform="translate(64.2 16.2) rotate(-113)" d="M0 0 C4.3 -3.2 10.8 -2.6 14.4 0 C10.8 2.6 4.3 3.2 0 0Z"/><path transform="translate(67.1 6.9) rotate(-29)" d="M0 0 C5.1 -3.2 12.8 -2.6 17.0 0 C12.8 2.6 5.1 3.2 0 0Z"/><path transform="translate(72.0 0.0) rotate(-45)" d="M0 0 C4.1 -3.0 10.2 -2.4 13.6 0 C10.2 2.4 4.1 3.0 0 0Z"/><path transform="translate(144.0 27.8) rotate(-28)" d="M0 0 C3.6 -3.2 8.9 -2.6 11.8 0 C8.9 2.6 3.6 3.2 0 0Z"/><path transform="translate(147.8 17.2) rotate(-110)" d="M0 0 C4.3 -3.2 10.8 -2.6 14.4 0 C10.8 2.6 4.3 3.2 0 0Z"/><path transform="translate(151.1 7.2) rotate(-30)" d="M0 0 C5.1 -3.2 12.8 -2.6 17.0 0 C12.8 2.6 5.1 3.2 0 0Z"/><path transform="translate(156.0 0.0) rotate(-45)" d="M0 0 C4.1 -3.0 10.2 -2.4 13.6 0 C10.2 2.4 4.1 3.0 0 0Z"/><path transform="translate(26.3 43.2) rotate(144)" d="M0 0 C4.0 -3.6 10.0 -2.9 13.3 0 C10.0 2.9 4.0 3.6 0 0Z"/><path transform="translate(24.3 52.2) rotate(64)" d="M0 0 C4.9 -3.6 12.2 -2.9 16.2 0 C12.2 2.9 4.9 3.6 0 0Z"/><path transform="translate(22.2 62.0) rotate(143)" d="M0 0 C5.7 -3.6 14.4 -2.9 19.1 0 C14.4 2.9 5.7 3.6 0 0Z"/><path transform="translate(16.8 73.4) rotate(88)" d="M0 0 C4.0 -3.6 10.0 -2.9 13.3 0 C10.0 2.9 4.0 3.6 0 0Z"/><path transform="translate(8.0 84.0) rotate(135)" d="M0 0 C4.6 -3.4 11.5 -2.7 15.3 0 C11.5 2.7 4.6 3.4 0 0Z"/><path transform="translate(203.8 54.0) rotate(124)" d="M0 0 C3.6 -3.2 8.9 -2.6 11.8 0 C8.9 2.6 3.6 3.2 0 0Z"/><path transform="translate(205.9 63.5) rotate(33)" d="M0 0 C4.3 -3.2 10.8 -2.6 14.4 0 C10.8 2.6 4.3 3.2 0 0Z"/><path transform="translate(210.9 73.0) rotate(93)" d="M0 0 C5.1 -3.2 12.8 -2.6 17.0 0 C12.8 2.6 5.1 3.2 0 0Z"/><path transform="translate(217.8 83.1) rotate(19)" d="M0 0 C3.6 -3.2 8.9 -2.6 11.8 0 C8.9 2.6 3.6 3.2 0 0Z"/><path transform="translate(224.0 92.0) rotate(56)" d="M0 0 C4.1 -3.0 10.2 -2.4 13.6 0 C10.2 2.4 4.1 3.0 0 0Z"/><path transform="translate(108.9 45.2) rotate(54)" d="M0 0 C3.6 -3.2 8.9 -2.6 11.8 0 C8.9 2.6 3.6 3.2 0 0Z"/><path transform="translate(125.4 49.8) rotate(-21)" d="M0 0 C4.3 -3.2 10.8 -2.6 14.4 0 C10.8 2.6 4.3 3.2 0 0Z"/><path transform="translate(140.6 54.5) rotate(56)" d="M0 0 C5.1 -3.2 12.8 -2.6 17.0 0 C12.8 2.6 5.1 3.2 0 0Z"/><path transform="translate(153.1 61.4) rotate(4)" d="M0 0 C3.6 -3.2 8.9 -2.6 11.8 0 C8.9 2.6 3.6 3.2 0 0Z"/><path transform="translate(160.0 70.0) rotate(63)" d="M0 0 C4.1 -3.0 10.2 -2.4 13.6 0 C10.2 2.4 4.1 3.0 0 0Z"/><path transform="translate(15.9 30.2) rotate(-88)" d="M0 0 C3.6 -3.2 8.9 -2.6 11.8 0 C8.9 2.6 3.6 3.2 0 0Z"/><path transform="translate(8.7 20.5) rotate(-169)" d="M0 0 C4.3 -3.2 10.8 -2.6 14.4 0 C10.8 2.6 4.3 3.2 0 0Z"/><path transform="translate(0.0 14.0) rotate(-153)" d="M0 0 C4.1 -3.0 10.2 -2.4 13.6 0 C10.2 2.4 4.1 3.0 0 0Z"/><path transform="translate(113.1 28.7) rotate(-46)" d="M0 0 C3.6 -3.2 8.9 -2.6 11.8 0 C8.9 2.6 3.6 3.2 0 0Z"/><path transform="translate(113.8 17.5) rotate(-123)" d="M0 0 C4.3 -3.2 10.8 -2.6 14.4 0 C10.8 2.6 4.3 3.2 0 0Z"/><path transform="translate(115.8 7.2) rotate(-29)" d="M0 0 C5.1 -3.2 12.8 -2.6 17.0 0 C12.8 2.6 5.1 3.2 0 0Z"/><path transform="translate(122.0 0.0) rotate(-36)" d="M0 0 C4.1 -3.0 10.2 -2.4 13.6 0 C10.2 2.4 4.1 3.0 0 0Z"/><path transform="translate(188.1 33.7) rotate(-51)" d="M0 0 C3.6 -3.2 8.9 -2.6 11.8 0 C8.9 2.6 3.6 3.2 0 0Z"/><path transform="translate(188.0 22.8) rotate(-126)" d="M0 0 C4.3 -3.2 10.8 -2.6 14.4 0 C10.8 2.6 4.3 3.2 0 0Z"/><path transform="translate(189.8 11.3) rotate(-34)" d="M0 0 C5.1 -3.2 12.8 -2.6 17.0 0 C12.8 2.6 5.1 3.2 0 0Z"/><path transform="translate(196.0 2.0) rotate(-45)" d="M0 0 C4.1 -3.0 10.2 -2.4 13.6 0 C10.2 2.4 4.1 3.0 0 0Z"/><path transform="translate(230.3 38.9) rotate(-10)" d="M0 0 C3.6 -3.2 8.9 -2.6 11.8 0 C8.9 2.6 3.6 3.2 0 0Z"/><path transform="translate(239.7 29.4) rotate(-80)" d="M0 0 C4.3 -3.2 10.8 -2.6 14.4 0 C10.8 2.6 4.3 3.2 0 0Z"/><path transform="translate(248.0 22.0) rotate(-39)" d="M0 0 C4.1 -3.0 10.2 -2.4 13.6 0 C10.2 2.4 4.1 3.0 0 0Z"/><path transform="translate(49.5 66.1) rotate(132)" d="M0 0 C4.0 -3.6 10.0 -2.9 13.3 0 C10.0 2.9 4.0 3.6 0 0Z"/><path transform="translate(49.2 78.0) rotate(53)" d="M0 0 C4.9 -3.6 12.2 -2.9 16.2 0 C12.2 2.9 4.9 3.6 0 0Z"/><path transform="translate(48.8 89.4) rotate(134)" d="M0 0 C5.7 -3.6 14.4 -2.9 19.1 0 C14.4 2.9 5.7 3.6 0 0Z"/><path transform="translate(44.5 100.8) rotate(87)" d="M0 0 C4.0 -3.6 10.0 -2.9 13.3 0 C10.0 2.9 4.0 3.6 0 0Z"/><path transform="translate(36.0 110.0) rotate(141)" d="M0 0 C4.6 -3.4 11.5 -2.7 15.3 0 C11.5 2.7 4.6 3.4 0 0Z"/><path transform="translate(118.3 74.4) rotate(141)" d="M0 0 C4.0 -3.6 10.0 -2.9 13.3 0 C10.0 2.9 4.0 3.6 0 0Z"/><path transform="translate(116.5 84.9) rotate(61)" d="M0 0 C4.9 -3.6 12.2 -2.9 16.2 0 C12.2 2.9 4.9 3.6 0 0Z"/><path transform="translate(114.7 95.7) rotate(140)" d="M0 0 C5.7 -3.6 14.4 -2.9 19.1 0 C14.4 2.9 5.7 3.6 0 0Z"/><path transform="translate(110.0 106.8) rotate(87)" d="M0 0 C4.0 -3.6 10.0 -2.9 13.3 0 C10.0 2.9 4.0 3.6 0 0Z"/><path transform="translate(102.0 116.0) rotate(138)" d="M0 0 C4.6 -3.4 11.5 -2.7 15.3 0 C11.5 2.7 4.6 3.4 0 0Z"/><path transform="translate(182.4 63.3) rotate(143)" d="M0 0 C3.6 -3.2 8.9 -2.6 11.8 0 C8.9 2.6 3.6 3.2 0 0Z"/><path transform="translate(180.8 72.8) rotate(59)" d="M0 0 C4.3 -3.2 10.8 -2.6 14.4 0 C10.8 2.6 4.3 3.2 0 0Z"/><path transform="translate(180.0 82.9) rotate(132)" d="M0 0 C5.1 -3.2 12.8 -2.6 17.0 0 C12.8 2.6 5.1 3.2 0 0Z"/><path transform="translate(177.4 94.1) rotate(76)" d="M0 0 C3.6 -3.2 8.9 -2.6 11.8 0 C8.9 2.6 3.6 3.2 0 0Z"/><path transform="translate(172.0 104.0) rotate(125)" d="M0 0 C4.1 -3.0 10.2 -2.4 13.6 0 C10.2 2.4 4.1 3.0 0 0Z"/><path transform="translate(46.1 87.9) rotate(50)" d="M0 0 C3.6 -3.2 8.9 -2.6 11.8 0 C8.9 2.6 3.6 3.2 0 0Z"/><path transform="translate(60.0 91.0) rotate(-22)" d="M0 0 C4.3 -3.2 10.8 -2.6 14.4 0 C10.8 2.6 4.3 3.2 0 0Z"/><path transform="translate(73.9 95.9) rotate(64)" d="M0 0 C5.1 -3.2 12.8 -2.6 17.0 0 C12.8 2.6 5.1 3.2 0 0Z"/><path transform="translate(84.0 104.0) rotate(49)" d="M0 0 C4.1 -3.0 10.2 -2.4 13.6 0 C10.2 2.4 4.1 3.0 0 0Z"/></g><g fill="#fbe3dc" fill-opacity="0.55" stroke="#fbe3dc" stroke-width="0.7"><circle cx="16.8" cy="11.5" r="10.5"/><circle cx="19" cy="67" r="11.6"/><circle cx="65.7" cy="59" r="9.8"/><circle cx="105" cy="94" r="9.8"/><circle cx="113" cy="14" r="9.3"/><circle cx="169" cy="24" r="8.8"/><circle cx="206.5" cy="15" r="11.6"/><circle cx="139" cy="83.6" r="8.8"/><circle cx="192" cy="88" r="11.2"/></g><path d="M9.7 19.1L7.2 15.6 M12.8 20.7L6.8 12.1 M15.1 21.0L7.3 9.8 M17.1 20.8L8.1 8.0 M18.9 20.4L9.2 6.5 M20.5 19.7L10.4 5.3 M21.9 18.8L11.7 4.2 M23.2 17.7L13.1 3.3 M24.4 16.5L14.7 2.6 M25.5 15.0L16.5 2.2 M26.3 13.2L18.5 2.0 M26.8 10.9L20.8 2.3 M26.4 7.4L23.9 3.9 M8.6 71.3L9.0 62.0 M10.3 73.4L10.7 60.0 M11.9 74.7L12.5 58.8 M13.6 75.7L14.2 58.0 M15.3 76.3L15.9 57.5 M17.0 76.7L17.6 57.2 M18.7 76.9L19.3 57.1 M20.4 76.8L21.0 57.3 M22.1 76.5L22.7 57.7 M23.8 76.0L24.4 58.3 M25.5 75.2L26.1 59.3 M27.3 74.0L27.7 60.6 M29.0 72.0L29.4 62.7 M59.3 65.9L56.3 58.2 M61.5 67.0L57.2 55.8 M63.5 67.5L58.4 54.2 M65.3 67.5L59.7 52.9 M67.1 67.3L61.2 52.0 M68.7 66.8L62.7 51.2 M70.2 66.0L64.3 50.7 M71.7 65.1L66.1 50.5 M73.0 63.8L67.9 50.5 M74.2 62.2L69.9 51.0 M75.1 59.8L72.1 52.1 M95.7 95.6L98.0 87.7 M96.8 97.9L100.1 86.4 M98.1 99.4L102.1 85.8 M99.6 100.6L103.9 85.6 M101.1 101.4L105.6 85.6 M102.7 102.0L107.3 86.0 M104.4 102.4L108.9 86.6 M106.1 102.4L110.4 87.4 M107.9 102.2L111.9 88.6 M109.9 101.6L113.2 90.1 M112.0 100.3L114.3 92.4 M105.0 18.2L104.2 11.9 M106.9 20.2L105.6 9.5 M108.7 21.2L107.1 8.1 M110.5 21.7L108.7 7.1 M112.3 21.9L110.4 6.5 M114.0 21.8L112.0 6.2 M115.6 21.5L113.7 6.1 M117.3 20.9L115.5 6.3 M118.9 19.9L117.3 6.8 M120.4 18.5L119.1 7.8 M121.8 16.1L121.0 9.8 M162.6 29.9L160.7 26.6 M165.5 31.5L160.7 23.3 M167.6 31.8L161.5 21.3 M169.5 31.7L162.6 19.7 M171.2 31.2L163.9 18.5 M172.7 30.5L165.3 17.5 M174.1 29.5L166.8 16.8 M175.4 28.3L168.5 16.3 M176.5 26.7L170.4 16.2 M177.3 24.7L172.5 16.5 M177.3 21.4L175.4 18.1 M195.8 18.4L196.9 9.1 M197.2 20.6L198.9 7.3 M198.8 22.1L200.7 6.2 M200.4 23.2L202.5 5.6 M202.0 23.9L204.3 5.2 M203.6 24.5L206.0 5.1 M205.3 24.8L207.7 5.2 M207.0 24.9L209.4 5.5 M208.7 24.8L211.0 6.1 M210.5 24.4L212.6 6.8 M212.3 23.8L214.2 7.9 M214.1 22.7L215.8 9.4 M216.1 20.9L217.2 11.6 M131.4 87.8L130.3 84.1 M133.8 90.0L131.2 80.9 M135.8 90.9L132.4 79.1 M137.6 91.2L133.8 77.9 M139.4 91.1L135.3 77.0 M141.1 90.8L136.9 76.4 M142.7 90.2L138.6 76.1 M144.2 89.3L140.4 76.0 M145.6 88.1L142.2 76.3 M146.8 86.3L144.2 77.2 M147.7 83.1L146.6 79.4 M181.1 88.0L183.9 80.7 M181.8 90.7L186.3 79.2 M182.9 92.6L188.4 78.5 M184.2 94.1L190.3 78.3 M185.6 95.2L192.1 78.3 M187.0 96.2L193.8 78.6 M188.6 96.9L195.4 79.1 M190.2 97.4L197.0 79.8 M191.9 97.7L198.4 80.8 M193.7 97.7L199.8 81.9 M195.6 97.5L201.1 83.4 M197.7 96.8L202.2 85.3 M200.1 95.3L202.9 88.0" stroke="#fbe3dc" stroke-width="0.8" fill="none"/></g></defs><use href="#fl" transform="scale(0.56)" opacity="1"/><use href="#fl" transform="translate(150 -8) scale(0.56)" opacity="0.9"/><use href="#fl" transform="translate(60 62) scale(0.56)" opacity="0.35"/><use href="#fl" transform="translate(-60 78) scale(0.56)" opacity="0.45"/><use href="#fl" transform="translate(150 70) scale(0.56)" opacity="0.8"/></svg>
<div class="a" style="left:74.4px;top:111.7px;width:2.2px;height:708.3px;background:rgba(62,205,200,0.37);"></div>
<div class="a" style="left:75.0px;top:111.7px;width:1px;height:708.3px;background:rgba(62,215,210,0.25);"></div>
<div class="a" style="left:251.6px;top:111.7px;width:2.2px;height:708.3px;background:rgba(62,205,200,0.37);"></div>
<div class="a" style="left:252.2px;top:111.7px;width:1px;height:708.3px;background:rgba(62,215,210,0.25);"></div>
<div class="a" style="left:428.9px;top:111.7px;width:2.2px;height:708.3px;background:rgba(62,205,200,0.37);"></div>
<div class="a" style="left:429.5px;top:111.7px;width:1px;height:708.3px;background:rgba(62,215,210,0.25);"></div>
<div class="a" style="left:33.5px;top:364.9px;width:438px;height:2.2px;background:rgba(62,205,200,0.37);"></div>
<div class="a" style="left:33.5px;top:365.5px;width:438px;height:1px;background:rgba(62,215,210,0.25);"></div>
<div class="a" style="left:33.5px;top:566.9px;width:438px;height:2.2px;background:rgba(62,205,200,0.37);"></div>
<div class="a" style="left:33.5px;top:567.5px;width:438px;height:1px;background:rgba(62,215,210,0.25);"></div>
<svg class="a" style="left:375.3px;top:387px;" width="9" height="14" viewBox="0 0 9 14"><path d="M0.3 0.3 L0.3 12.3 L3.2 9.6 L8.3 9.3 Z" fill="#0c0c0c"/></svg>
<svg class="a" style="left:382px;top:396.4px;" width="10" height="10" viewBox="0 0 10 10"><g transform="scale(0.833)"><path d="M6 0 L8.2 2.6 L6.7 2.6 L6.7 5.3 L9.4 5.3 L9.4 3.8 L12 6 L9.4 8.2 L9.4 6.7 L6.7 6.7 L6.7 9.4 L8.2 9.4 L6 12 L3.8 9.4 L5.3 9.4 L5.3 6.7 L2.6 6.7 L2.6 8.2 L0 6 L2.6 3.8 L2.6 5.3 L5.3 5.3 L5.3 2.6 L3.8 2.6 Z" fill="#2a2a2a" stroke="#e8d8d8" stroke-width="0.5"/></g></svg>
<div class="a" style="left:471.5px;top:111.7px;width:13.5px;height:708.3px;background:#484848;"></div>
<div class="a" style="left:33.5px;top:820px;width:451.5px;height:13.5px;background:#434343;"></div>
<div class="a" style="left:33.5px;top:820px;width:179.5px;height:13.5px;background:#4b4b4b;"></div>
<div class="a" style="left:33.5px;top:819.5px;width:451.5px;height:1px;background:#3c3c3c;"></div>
<div class="t" style="left:37px;top:822.3px;font-size:8.4px;line-height:11.8px;color:#e4e4e4;">16.67%</div>
<div class="t" style="left:74.5px;top:822.0px;font-size:8.8px;line-height:12.3px;color:#d8d8d8;letter-spacing:-0.1px">2752 像素 x 1571 像素 (150 ppi)</div>
<svg class="a" style="left:204.5px;top:824.3px;" width="4" height="6" viewBox="0 0 4 6"><path d="M0.5 0.5 L3 3 L0.5 5.5" stroke="#c8c8c8" stroke-width="0.9" fill="none"/></svg>
<div class="a" style="left:471.5px;top:820px;width:13.5px;height:13.5px;background:#4a4a4a;"></div>
<div class="a" style="left:3px;top:833.5px;width:734px;height:2.5px;background:#484848;"></div>
<div class="a" style="left:485px;top:91px;width:2px;height:745px;background:#3d3d3d;"></div>
<div class="a" style="left:487px;top:91px;width:250px;height:8.5px;background:#424242;"></div>
<svg class="a" style="left:505px;top:92.5px;" width="7" height="5" viewBox="0 0 7 5"><path d="M2.7 0.5 L0.5 2.5 L2.7 4.5 M5.7 0.5 L3.5 2.5 L5.7 4.5" stroke="#d0d0d0" stroke-width="0.9" fill="none"/></svg>
<svg class="a" style="left:726px;top:92.5px;" width="7" height="5" viewBox="0 0 7 5"><path d="M0.5 0.5 L2.7 2.5 L0.5 4.5 M3.5 0.5 L5.7 2.5 L3.5 4.5" stroke="#d0d0d0" stroke-width="0.9" fill="none"/></svg>
<div class="a" style="left:487px;top:99.5px;width:29px;height:736.5px;background:#535353;"></div>
<div class="a" style="left:487px;top:99.5px;width:29px;height:1px;background:#3f3f3f;"></div>
<div class="a" style="left:493.0px;top:102.5px;width:1.2px;height:2.2px;background:#484848;"></div>
<div class="a" style="left:495.4px;top:102.5px;width:1.2px;height:2.2px;background:#484848;"></div>
<div class="a" style="left:497.8px;top:102.5px;width:1.2px;height:2.2px;background:#484848;"></div>
<div class="a" style="left:500.2px;top:102.5px;width:1.2px;height:2.2px;background:#484848;"></div>
<div class="a" style="left:502.6px;top:102.5px;width:1.2px;height:2.2px;background:#484848;"></div>
<div class="a" style="left:505.0px;top:102.5px;width:1.2px;height:2.2px;background:#484848;"></div>
<div class="a" style="left:507.4px;top:102.5px;width:1.2px;height:2.2px;background:#484848;"></div>
<div class="a" style="left:487px;top:130px;width:29px;height:1.5px;background:#454545;"></div>
<svg class="a" style="left:495px;top:110px;" width="14" height="15" viewBox="0 0 14 15"><rect x="1" y="1.5" width="3.6" height="3.2" stroke="#e8e8e8" stroke-width="0.9" fill="none"/><rect x="1" y="5.8" width="3.6" height="3.2" stroke="#e8e8e8" stroke-width="0.9" fill="none"/><rect x="0.6" y="10" width="4.4" height="3.8" fill="#e8e8e8"/><path d="M7 1.5 C11 1.5 12.5 5 11.5 8 C11 10 9.5 11.5 8 12.5" stroke="#e8e8e8" stroke-width="1.5" fill="none"/><path d="M6 0 L9.5 1.3 L6.8 4 Z" fill="#e8e8e8"/></svg>
<div class="a" style="left:516px;top:99.5px;width:2px;height:736.5px;background:#3f3f3f;"></div>
<div class="a" style="left:518px;top:100px;width:219px;height:20.5px;background:#424242;"></div>
<div class="a" style="left:518px;top:100px;width:29.5px;height:21.5px;background:#535353;"></div>
<div class="t" style="left:524px;top:105.0px;font-size:9.3px;line-height:13.0px;color:#f0f0f0;font-weight:bold">颜色</div>
<div class="t" style="left:554.5px;top:105.0px;font-size:9.3px;line-height:13.0px;color:#9a9a9a;">色板</div>
<div class="t" style="left:585px;top:105.0px;font-size:9.3px;line-height:13.0px;color:#9a9a9a;">渐变</div>
<div class="t" style="left:616px;top:105.0px;font-size:9.3px;line-height:13.0px;color:#9a9a9a;">图案</div>
<div class="a" style="left:725.5px;top:107.25px;width:7.5px;height:1.5px;background:#8c8c8c;"></div>
<div class="a" style="left:725.5px;top:109.65px;width:7.5px;height:1.5px;background:#8c8c8c;"></div>
<div class="a" style="left:725.5px;top:112.05px;width:7.5px;height:1.5px;background:#8c8c8c;"></div>
<div class="a" style="left:518px;top:120.5px;width:219px;height:104px;background:#535353;"></div>
<div class="a" style="left:552.5px;top:126.5px;width:144.5px;height:83px;background:linear-gradient(to top,#000,rgba(0,0,0,0)),linear-gradient(to right,#fff,#ff0000)"></div>
<div class="a" style="left:710px;top:126.5px;width:15px;height:83px;background:linear-gradient(to bottom,#ff0000 0%,#ff00ff 17%,#0000ff 33%,#00ffff 50%,#00ff00 67%,#ffff00 83%,#ff0000 100%)"></div>
<div class="a" style="left:533px;top:137px;width:14px;height:14px;background:#fff;"></div>
<div class="a" style="left:524.5px;top:128.5px;width:15px;height:15px;background:#000;border:1.3px solid #bdbdbd;outline:1px solid #4b4b4b"></div>
<svg class="a" style="left:550.5px;top:204.5px;" width="6" height="6" viewBox="0 0 6 6"><circle cx="3" cy="3" r="2.3" stroke="#ddd" stroke-width="0.9" fill="none"/></svg>
<svg class="a" style="left:702px;top:205px;" width="6" height="7" viewBox="0 0 6 7"><path d="M0.5 0.5 L5.5 3.5 L0.5 6.5 Z" fill="#f0f0f0"/></svg>
<div class="a" style="left:518px;top:224.5px;width:219px;height:2.5px;background:#3f3f3f;"></div>
<div class="a" style="left:518px;top:227px;width:219px;height:21.5px;background:#424242;"></div>
<div class="a" style="left:518px;top:227px;width:29.5px;height:22.5px;background:#535353;"></div>
<div class="t" style="left:524px;top:232.5px;font-size:9.3px;line-height:13.0px;color:#f0f0f0;font-weight:bold">属性</div>
<div class="t" style="left:554.5px;top:232.5px;font-size:9.3px;line-height:13.0px;color:#9a9a9a;">调整</div>
<div class="t" style="left:585px;top:232.5px;font-size:9.3px;line-height:13.0px;color:#9a9a9a;">库</div>
<div class="a" style="left:725.5px;top:234.75px;width:7.5px;height:1.5px;background:#8c8c8c;"></div>
<div class="a" style="left:725.5px;top:237.15px;width:7.5px;height:1.5px;background:#8c8c8c;"></div>
<div class="a" style="left:725.5px;top:239.55px;width:7.5px;height:1.5px;background:#8c8c8c;"></div>
<div class="a" style="left:518px;top:248.5px;width:219px;height:260px;background:#535353;"></div>
<div class="a" style="left:526.5px;top:254.5px;width:16.5px;height:16.5px;background:#3c3c3c;"></div>
<svg class="a" style="left:529px;top:257.5px;" width="12" height="10" viewBox="0 0 12 10"><rect x="0.6" y="0.6" width="10.8" height="8.8" stroke="#f0f0f0" stroke-width="1.2" fill="none"/><path d="M1.5 8.5 L4.5 4.5 L6.5 6.8 L8 5.5 L10.5 8.5 Z" fill="#f0f0f0"/></svg>
<div class="t" style="left:548.5px;top:257.4px;font-size:9.3px;line-height:13.0px;color:#cfcfcf;">像素图层</div>
<div class="a" style="left:518px;top:275px;width:206px;height:1px;background:#454545;"></div>
<svg class="a" style="left:523px;top:284.5px;" width="7" height="5" viewBox="0 0 7 5"><path d="M0.5 0.8 L3.5 3.8 L6.5 0.8" stroke="#bdbdbd" stroke-width="1" fill="none"/></svg>
<div class="t" style="left:535px;top:281.4px;font-size:9.3px;line-height:13.0px;color:#f0f0f0;font-weight:bold">变换</div>
<div class="a" style="left:524px;top:313.3px;width:19.3px;height:18px;background:#3c3c3c;"></div>
<svg class="a" style="left:530.5px;top:315.5px;" width="6" height="14" viewBox="0 0 6 14"><rect x="1.3" y="0.8" width="3.4" height="5.4" rx="1.7" stroke="#e8e8e8" stroke-width="1.1" fill="none"/><rect x="1.3" y="7.8" width="3.4" height="5.4" rx="1.7" stroke="#e8e8e8" stroke-width="1.1" fill="none"/><path d="M3 4 L3 10" stroke="#e8e8e8" stroke-width="1.1"/></svg>
<div class="t" style="left:551.5px;top:305.7px;font-size:9.3px;line-height:13.0px;color:#cfcfcf;">W</div>
<div class="a" style="left:564px;top:304px;width:43.5px;height:14px;background:#474747;border:1px solid #3f3f3f"></div>
<div class="t" style="left:566.2px;top:305.6px;font-size:9.0px;line-height:12.6px;color:#e2e2e2;letter-spacing:-0.2px">1190 像素</div>
<div class="t" style="left:616.5px;top:305.7px;font-size:9.3px;line-height:13.0px;color:#cfcfcf;">X</div>
<div class="a" style="left:626.5px;top:304px;width:42px;height:14px;background:#474747;border:1px solid #3f3f3f"></div>
<div class="t" style="left:628.7px;top:305.6px;font-size:9.0px;line-height:12.6px;color:#e2e2e2;letter-spacing:-0.2px">2546 像素</div>
<div class="t" style="left:553px;top:327.9px;font-size:9.3px;line-height:13.0px;color:#cfcfcf;">H</div>
<div class="a" style="left:564px;top:326.5px;width:43px;height:14px;background:#474747;border:1px solid #3f3f3f"></div>
<div class="t" style="left:566.2px;top:328.1px;font-size:9.0px;line-height:12.6px;color:#e2e2e2;letter-spacing:-0.2px">682 像素</div>
<div class="t" style="left:616.5px;top:327.9px;font-size:9.3px;line-height:13.0px;color:#cfcfcf;">Y</div>
<div class="a" style="left:626.5px;top:326.5px;width:42px;height:14px;background:#474747;border:1px solid #3f3f3f"></div>
<div class="t" style="left:628.7px;top:328.1px;font-size:9.0px;line-height:12.6px;color:#e2e2e2;letter-spacing:-0.2px">-130 像素</div>
<svg class="a" style="left:549px;top:352px;" width="12" height="9" viewBox="0 0 12 9"><path d="M1 8.3 L10.5 8.3 M1 8.3 L8 1.2" stroke="#d8d8d8" stroke-width="1.1" fill="none"/><path d="M5.2 8.3 A4 4 0 0 0 3.8 5" stroke="#d8d8d8" stroke-width="0.9" fill="none"/></svg>
<div class="a" style="left:564px;top:350px;width:33px;height:14px;background:#474747;border:1px solid #3f3f3f"></div>
<div class="t" style="left:566.2px;top:351.6px;font-size:9.0px;line-height:12.6px;color:#e2e2e2;letter-spacing:-0.2px">0.00°</div>
<div class="a" style="left:598px;top:350px;width:10.5px;height:14px;background:#474747;border:1px solid #3f3f3f"></div>
<svg class="a" style="left:599.8px;top:355px;" width="7" height="5" viewBox="0 0 7 5"><path d="M0.5 0.8 L3.5 3.8 L6.5 0.8" stroke="#bdbdbd" stroke-width="1" fill="none"/></svg>
<svg class="a" style="left:631px;top:351.5px;" width="13" height="12" viewBox="0 0 13 12"><path d="M6.5 0 L6.5 12" stroke="#e6e6e6" stroke-width="1"/><path d="M0.8 2 L4.8 6 L0.8 10 Z" stroke="#e6e6e6" stroke-width="1" fill="none"/><path d="M12.2 2 L8.2 6 L12.2 10 Z" fill="#e6e6e6"/></svg>
<svg class="a" style="left:654px;top:351px;" width="12" height="13" viewBox="0 0 12 13"><path d="M0 6.5 L12 6.5" stroke="#e6e6e6" stroke-width="1"/><path d="M2 0.8 L6 4.8 L10 0.8 Z" stroke="#e6e6e6" stroke-width="1" fill="none"/><path d="M2 12.2 L6 8.2 L10 12.2 Z" fill="#e6e6e6"/></svg>
<div class="a" style="left:518px;top:375px;width:206px;height:1px;background:#454545;"></div>
<svg class="a" style="left:523px;top:385.5px;" width="7" height="5" viewBox="0 0 7 5"><path d="M0.5 0.8 L3.5 3.8 L6.5 0.8" stroke="#bdbdbd" stroke-width="1" fill="none"/></svg>
<div class="t" style="left:535px;top:382.4px;font-size:9.3px;line-height:13.0px;color:#f0f0f0;font-weight:bold">对齐并分布</div>
<div class="t" style="left:524px;top:403.4px;font-size:9.3px;line-height:13.0px;color:#a9a9a9;">对齐:</div>
<div class="a" style="left:528.5px;top:424.5px;width:1.2px;height:11px;background:#a5a5a5;"></div>
<div class="a" style="left:530.2px;top:426.5px;width:5px;height:2.6px;background:#a5a5a5;"></div>
<div class="a" style="left:530.2px;top:430.8px;width:8px;height:2.6px;background:#a5a5a5;"></div>
<div class="a" style="left:555.4px;top:424.5px;width:1.2px;height:11px;background:#a5a5a5;"></div>
<div class="a" style="left:553.5px;top:426.5px;width:5px;height:2.6px;background:#a5a5a5;"></div>
<div class="a" style="left:552px;top:430.8px;width:8px;height:2.6px;background:#a5a5a5;"></div>
<div class="a" style="left:581.8px;top:424.5px;width:1.2px;height:11px;background:#a5a5a5;"></div>
<div class="a" style="left:576.3px;top:426.5px;width:5px;height:2.6px;background:#a5a5a5;"></div>
<div class="a" style="left:573.3px;top:430.8px;width:8px;height:2.6px;background:#a5a5a5;"></div>
<div class="a" style="left:608.0px;top:424.5px;width:11px;height:1.2px;background:#a5a5a5;"></div>
<div class="a" style="left:610.0px;top:426.2px;width:2.6px;height:8px;background:#a5a5a5;"></div>
<div class="a" style="left:614.3px;top:426.2px;width:2.6px;height:5px;background:#a5a5a5;"></div>
<div class="a" style="left:630.5px;top:429.4px;width:11px;height:1.2px;background:#a5a5a5;"></div>
<div class="a" style="left:632.5px;top:426.0px;width:2.6px;height:8px;background:#a5a5a5;"></div>
<div class="a" style="left:636.8px;top:427.5px;width:2.6px;height:5px;background:#a5a5a5;"></div>
<div class="a" style="left:653.0px;top:434.3px;width:11px;height:1.2px;background:#a5a5a5;"></div>
<div class="a" style="left:655.0px;top:425.8px;width:2.6px;height:8px;background:#a5a5a5;"></div>
<div class="a" style="left:659.3px;top:428.8px;width:2.6px;height:5px;background:#a5a5a5;"></div>
<div class="a" style="left:656.5px;top:452.6px;width:2px;height:2px;background:#c8c8c8;border-radius:50%"></div>
<div class="a" style="left:660.1px;top:452.6px;width:2px;height:2px;background:#c8c8c8;border-radius:50%"></div>
<div class="a" style="left:663.7px;top:452.6px;width:2px;height:2px;background:#c8c8c8;border-radius:50%"></div>
<div class="a" style="left:518px;top:463px;width:206px;height:1px;background:#454545;"></div>
<svg class="a" style="left:523px;top:473.5px;" width="7" height="5" viewBox="0 0 7 5"><path d="M0.5 0.8 L3.5 3.8 L6.5 0.8" stroke="#bdbdbd" stroke-width="1" fill="none"/></svg>
<div class="t" style="left:535px;top:470.4px;font-size:9.3px;line-height:13.0px;color:#f0f0f0;font-weight:bold">快速操作</div>
<div class="a" style="left:724.5px;top:276px;width:12.5px;height:216px;background:#4b4b4b;"></div>
<div class="a" style="left:726.5px;top:289px;width:9.5px;height:146px;background:#696969;"></div>
<svg class="a" style="left:727.5px;top:281px;" width="8" height="5" viewBox="0 0 8 5"><path d="M0.8 4.2 L4 1 L7.2 4.2" stroke="#a8a8a8" stroke-width="1" fill="none"/></svg>
<svg class="a" style="left:727.5px;top:480px;" width="8" height="5" viewBox="0 0 8 5"><path d="M0.8 0.8 L4 4 L7.2 0.8" stroke="#a8a8a8" stroke-width="1" fill="none"/></svg>
<div class="a" style="left:518px;top:508.5px;width:219px;height:2.5px;background:#3f3f3f;"></div>
<div class="a" style="left:518px;top:511px;width:219px;height:21.5px;background:#424242;"></div>
<div class="a" style="left:518px;top:511px;width:29.5px;height:22.5px;background:#535353;"></div>
<div class="t" style="left:524px;top:516.4px;font-size:9.3px;line-height:13.0px;color:#f0f0f0;font-weight:bold">图层</div>
<div class="t" style="left:554.5px;top:516.4px;font-size:9.3px;line-height:13.0px;color:#9a9a9a;">通道</div>
<div class="t" style="left:585px;top:516.4px;font-size:9.3px;line-height:13.0px;color:#9a9a9a;">路径</div>
<div class="a" style="left:725.5px;top:518.75px;width:7.5px;height:1.5px;background:#8c8c8c;"></div>
<div class="a" style="left:725.5px;top:521.15px;width:7.5px;height:1.5px;background:#8c8c8c;"></div>
<div class="a" style="left:725.5px;top:523.55px;width:7.5px;height:1.5px;background:#8c8c8c;"></div>
<div class="a" style="left:518px;top:533px;width:219px;height:301.5px;background:#535353;"></div>
<div class="a" style="left:520.7px;top:541.3px;width:65px;height:14.5px;background:#474747;border:1px solid #3f3f3f"></div>
<svg class="a" style="left:524.5px;top:544.5px;" width="8" height="8" viewBox="0 0 8 8"><circle cx="3.2" cy="3.2" r="2.4" stroke="#e2e2e2" stroke-width="1.2" fill="none"/><path d="M5 5 L7.5 7.5" stroke="#e2e2e2" stroke-width="1.4"/></svg>
<div class="t" style="left:534px;top:542.9px;font-size:9.3px;line-height:13.0px;color:#e6e6e6;">类型</div>
<svg class="a" style="left:575.5px;top:546.5px;" width="7" height="5" viewBox="0 0 7 5"><path d="M0.5 0.8 L3.5 3.8 L6.5 0.8" stroke="#bdbdbd" stroke-width="1" fill="none"/></svg>
<svg class="a" style="left:598.5px;top:543.5px;" width="11" height="9" viewBox="0 0 11 9"><rect x="0.6" y="0.6" width="9.8" height="7.8" rx="1" stroke="#e0e0e0" stroke-width="1.1" fill="none"/><path d="M1.6 7 L4 4 L5.6 5.6 L7 4.6 L9.2 7 Z" fill="#e0e0e0"/></svg>
<svg class="a" style="left:618px;top:543.5px;" width="10" height="10" viewBox="0 0 10 10"><circle cx="5" cy="5" r="4.2" stroke="#e0e0e0" stroke-width="1.1" fill="none"/><path d="M5 0.8 A4.2 4.2 0 0 1 8 8 L2 2 A4.2 4.2 0 0 1 5 0.8 Z" fill="#e0e0e0" transform="rotate(90 5 5)"/></svg>
<div class="t" style="left:637.3px;top:540.9px;font-size:11.5px;line-height:16.1px;color:#e0e0e0;font-family:Liberation Serif,serif;font-weight:bold">T</div>
<svg class="a" style="left:655px;top:543.5px;" width="10" height="10" viewBox="0 0 10 10"><rect x="1.5" y="1.5" width="7" height="7" stroke="#e0e0e0" stroke-width="1.2" fill="none"/><rect x="0" y="0" width="2.6" height="2.6" fill="#e0e0e0"/><rect x="7.4" y="0" width="2.6" height="2.6" fill="#e0e0e0"/><rect x="0" y="7.4" width="2.6" height="2.6" fill="#e0e0e0"/><rect x="7.4" y="7.4" width="2.6" height="2.6" fill="#e0e0e0"/></svg>
<svg class="a" style="left:673.5px;top:543px;" width="10" height="11" viewBox="0 0 10 11"><path d="M1 3 L6 3 L6 10.5 L1 10.5 Z" fill="#e0e0e0"/><path d="M3.5 0.8 L9 0.8 L9 8.5 L7 8.5" stroke="#e0e0e0" stroke-width="1.1" fill="none"/><rect x="2.3" y="6.5" width="2.6" height="2.6" fill="#535353"/></svg>
<div class="a" style="left:696px;top:540px;width:5px;height:5.5px;background:#f0f0f0;border-radius:50%"></div>
<div class="a" style="left:696px;top:544.5px;width:5px;height:8px;background:#454545;border-radius:2px"></div>
<div class="a" style="left:518px;top:559.3px;width:219px;height:1px;background:#464646;"></div>
<div class="a" style="left:520.7px;top:563.3px;width:89px;height:15.3px;background:#474747;border:1px solid #3f3f3f"></div>
<div class="t" style="left:526px;top:565.4px;font-size:9.3px;line-height:13.0px;color:#e6e6e6;">正常</div>
<svg class="a" style="left:599.5px;top:569px;" width="7" height="5" viewBox="0 0 7 5"><path d="M0.5 0.8 L3.5 3.8 L6.5 0.8" stroke="#bdbdbd" stroke-width="1" fill="none"/></svg>
<div class="t" style="left:616px;top:565.4px;font-size:9.3px;line-height:13.0px;color:#cfcfcf;letter-spacing:-0.6px">不透明度:</div>
<div class="a" style="left:660.3px;top:563.5px;width:29px;height:15px;background:#474747;border:1px solid #3f3f3f"></div>
<div class="t" style="left:662.5px;top:565.6px;font-size:9.0px;line-height:12.6px;color:#e2e2e2;letter-spacing:-0.2px">100%</div>
<div class="a" style="left:691px;top:563.5px;width:10px;height:15px;background:#474747;border:1px solid #3f3f3f"></div>
<svg class="a" style="left:692.5px;top:569px;" width="7" height="5" viewBox="0 0 7 5"><path d="M0.5 0.8 L3.5 3.8 L6.5 0.8" stroke="#bdbdbd" stroke-width="1" fill="none"/></svg>
<div class="a" style="left:518px;top:581.5px;width:219px;height:1px;background:#464646;"></div>
<div class="t" style="left:522.3px;top:587.0px;font-size:9.3px;line-height:13.0px;color:#cfcfcf;">锁定:</div>
<svg class="a" style="left:551px;top:588px;" width="9" height="9" viewBox="0 0 9 9"><rect x="0.5" y="0.5" width="8" height="8" stroke="#e0e0e0" stroke-width="1" fill="none"/><rect x="1" y="1" width="2.4" height="2.4" fill="#e0e0e0"/><rect x="5.6" y="1" width="2.4" height="2.4" fill="#e0e0e0"/><rect x="3.3" y="3.3" width="2.4" height="2.4" fill="#e0e0e0"/><rect x="1" y="5.6" width="2.4" height="2.4" fill="#e0e0e0"/><rect x="5.6" y="5.6" width="2.4" height="2.4" fill="#e0e0e0"/></svg>
<svg class="a" style="left:567px;top:587.5px;" width="11" height="11" viewBox="0 0 11 11"><path d="M10 0.8 C7.8 2 5.5 4.5 4.5 6.2 L5.7 7.3 C7.4 6.2 9.3 3.5 10 0.8 Z" fill="#e0e0e0"/><path d="M4 6.8 C2.8 7 2.4 8 2.3 9 C2.2 9.7 1.7 10.1 1 10.3 C2.8 10.8 4.8 10.1 5.1 8 Z" fill="#e0e0e0"/></svg>
<svg class="a" style="left:584.2px;top:587.6px;" width="10" height="10" viewBox="0 0 10 10"><g transform="scale(0.833)"><path d="M6 0 L8.2 2.6 L6.7 2.6 L6.7 5.3 L9.4 5.3 L9.4 3.8 L12 6 L9.4 8.2 L9.4 6.7 L6.7 6.7 L6.7 9.4 L8.2 9.4 L6 12 L3.8 9.4 L5.3 9.4 L5.3 6.7 L2.6 6.7 L2.6 8.2 L0 6 L2.6 3.8 L2.6 5.3 L5.3 5.3 L5.3 2.6 L3.8 2.6 Z" fill="#e0e0e0"/></g></svg>
<svg class="a" style="left:601.5px;top:587.5px;" width="11" height="11" viewBox="0 0 11 11"><path d="M2.5 0.5 L2.5 8.5 L10.5 8.5 M0.5 2.5 L8.5 2.5 L8.5 10.5" stroke="#e0e0e0" stroke-width="1.1" fill="none"/><path d="M9 0 L11 2" stroke="#e0e0e0" stroke-width="1"/></svg>
<svg class="a" style="left:619.5px;top:587.3px;" width="9" height="11" viewBox="0 0 9 11"><rect x="0.5" y="4.5" width="8" height="6" rx="0.8" fill="#e0e0e0"/><path d="M2.3 4.5 L2.3 3 A2.2 2.2 0 0 1 6.7 3 L6.7 4.5" stroke="#e0e0e0" stroke-width="1.2" fill="none"/><rect x="3.8" y="6.5" width="1.4" height="2" fill="#535353"/></svg>
<div class="t" style="left:635px;top:587.0px;font-size:9.3px;line-height:13.0px;color:#cfcfcf;">填充:</div>
<div class="a" style="left:660.3px;top:585.2px;width:29px;height:15px;background:#474747;border:1px solid #3f3f3f"></div>
<div class="t" style="left:662.5px;top:587.3px;font-size:9.0px;line-height:12.6px;color:#e2e2e2;letter-spacing:-0.2px">100%</div>
<div class="a" style="left:691px;top:585.2px;width:10px;height:15px;background:#474747;border:1px solid #3f3f3f"></div>
<svg class="a" style="left:692.5px;top:590.7px;" width="7" height="5" viewBox="0 0 7 5"><path d="M0.5 0.8 L3.5 3.8 L6.5 0.8" stroke="#bdbdbd" stroke-width="1" fill="none"/></svg>
<div class="a" style="left:518px;top:603px;width:219px;height:1px;background:#464646;"></div>
<div class="a" style="left:518px;top:760.3px;width:219px;height:53.2px;background:#4b4b4b;"></div>
<div class="a" style="left:724.5px;top:604px;width:12.5px;height:209.5px;background:#4e4e4e;"></div>
<div class="a" style="left:518px;top:605.0px;width:206.5px;height:21.6px;background:#535353;"></div>
<div class="a" style="left:518px;top:626.5px;width:206.5px;height:1px;background:#474747;"></div>
<div class="a" style="left:540.5px;top:605.0px;width:0.8px;height:21.6px;background:#4a4a4a;"></div>
<svg class="a" style="left:523.8px;top:613.3px;" width="11" height="7" viewBox="0 0 11 7"><path d="M0.5 3.5 C2.5 0.3 8.5 0.3 10.5 3.5 C8.5 6.7 2.5 6.7 0.5 3.5 Z" stroke="#f0f0f0" stroke-width="1.1" fill="none"/><circle cx="5.5" cy="3.5" r="1.7" fill="#f0f0f0"/></svg>
<div class="a" style="left:544px;top:609.3px;width:24.5px;height:15px;background-color:#fff;background-image:linear-gradient(45deg,#ccc 25%,transparent 25%,transparent 75%,#ccc 75%),linear-gradient(45deg,#ccc 25%,transparent 25%,transparent 75%,#ccc 75%);background-size:5px 5px;background-position:0 0,2.5px 2.5px;"></div>
<div class="t" style="left:575.8px;top:611.3px;font-size:9.100000000000001px;line-height:12.7px;color:#ececec;letter-spacing:-0.1px">图层 1 拷贝 4</div>
<div class="a" style="left:518px;top:627.47px;width:206.5px;height:21.6px;background:#535353;"></div>
<div class="a" style="left:518px;top:648.97px;width:206.5px;height:1px;background:#474747;"></div>
<div class="a" style="left:540.5px;top:627.47px;width:0.8px;height:21.6px;background:#4a4a4a;"></div>
<svg class="a" style="left:523.8px;top:635.77px;" width="11" height="7" viewBox="0 0 11 7"><path d="M0.5 3.5 C2.5 0.3 8.5 0.3 10.5 3.5 C8.5 6.7 2.5 6.7 0.5 3.5 Z" stroke="#f0f0f0" stroke-width="1.1" fill="none"/><circle cx="5.5" cy="3.5" r="1.7" fill="#f0f0f0"/></svg>
<div class="a" style="left:544px;top:631.77px;width:24.5px;height:15px;background-color:#fff;background-image:linear-gradient(45deg,#ccc 25%,transparent 25%,transparent 75%,#ccc 75%),linear-gradient(45deg,#ccc 25%,transparent 25%,transparent 75%,#ccc 75%);background-size:5px 5px;background-position:0 0,2.5px 2.5px;"></div>
<div class="t" style="left:575.8px;top:633.8px;font-size:9.100000000000001px;line-height:12.7px;color:#ececec;letter-spacing:-0.1px">图层 1 拷贝 3</div>
<div class="a" style="left:518px;top:649.94px;width:206.5px;height:21.6px;background:#535353;"></div>
<div class="a" style="left:518px;top:671.44px;width:206.5px;height:1px;background:#474747;"></div>
<div class="a" style="left:540.5px;top:649.94px;width:0.8px;height:21.6px;background:#4a4a4a;"></div>
<svg class="a" style="left:523.8px;top:658.24px;" width="11" height="7" viewBox="0 0 11 7"><path d="M0.5 3.5 C2.5 0.3 8.5 0.3 10.5 3.5 C8.5 6.7 2.5 6.7 0.5 3.5 Z" stroke="#f0f0f0" stroke-width="1.1" fill="none"/><circle cx="5.5" cy="3.5" r="1.7" fill="#f0f0f0"/></svg>
<div class="a" style="left:544px;top:654.24px;width:24.5px;height:15px;background-color:#fff;background-image:linear-gradient(45deg,#ccc 25%,transparent 25%,transparent 75%,#ccc 75%),linear-gradient(45deg,#ccc 25%,transparent 25%,transparent 75%,#ccc 75%);background-size:5px 5px;background-position:0 0,2.5px 2.5px;"></div>
<div class="t" style="left:575.8px;top:656.3px;font-size:9.100000000000001px;line-height:12.7px;color:#ececec;letter-spacing:-0.1px">图层 1 拷贝 2</div>
<div class="a" style="left:518px;top:672.41px;width:206.5px;height:21.6px;background:#535353;"></div>
<div class="a" style="left:518px;top:693.91px;width:206.5px;height:1px;background:#474747;"></div>
<div class="a" style="left:540.5px;top:672.41px;width:0.8px;height:21.6px;background:#4a4a4a;"></div>
<svg class="a" style="left:523.8px;top:680.7099999999999px;" width="11" height="7" viewBox="0 0 11 7"><path d="M0.5 3.5 C2.5 0.3 8.5 0.3 10.5 3.5 C8.5 6.7 2.5 6.7 0.5 3.5 Z" stroke="#f0f0f0" stroke-width="1.1" fill="none"/><circle cx="5.5" cy="3.5" r="1.7" fill="#f0f0f0"/></svg>
<div class="a" style="left:544px;top:676.7099999999999px;width:24.5px;height:15px;background-color:#fff;background-image:linear-gradient(45deg,#ccc 25%,transparent 25%,transparent 75%,#ccc 75%),linear-gradient(45deg,#ccc 25%,transparent 25%,transparent 75%,#ccc 75%);background-size:5px 5px;background-position:0 0,2.5px 2.5px;"></div>
<div class="t" style="left:575.8px;top:678.8px;font-size:9.100000000000001px;line-height:12.7px;color:#ececec;letter-spacing:-0.1px">图层 1 拷贝</div>
<div class="a" style="left:518px;top:694.88px;width:206.5px;height:21.6px;background:#6a6a6a;"></div>
<div class="a" style="left:518px;top:694.88px;width:23px;height:21.6px;background:#535353;"></div>
<div class="a" style="left:518px;top:716.38px;width:206.5px;height:1px;background:#474747;"></div>
<div class="a" style="left:540.5px;top:694.88px;width:0.8px;height:21.6px;background:#4a4a4a;"></div>
<svg class="a" style="left:523.8px;top:703.18px;" width="11" height="7" viewBox="0 0 11 7"><path d="M0.5 3.5 C2.5 0.3 8.5 0.3 10.5 3.5 C8.5 6.7 2.5 6.7 0.5 3.5 Z" stroke="#f0f0f0" stroke-width="1.1" fill="none"/><circle cx="5.5" cy="3.5" r="1.7" fill="#f0f0f0"/></svg>
<div class="a" style="left:544px;top:699.18px;width:24.5px;height:15px;background-color:#fff;background-image:linear-gradient(45deg,#ccc 25%,transparent 25%,transparent 75%,#ccc 75%),linear-gradient(45deg,#ccc 25%,transparent 25%,transparent 75%,#ccc 75%);background-size:5px 5px;background-position:0 0,2.5px 2.5px;"></div>
<svg class="a" style="left:541.5px;top:697.18px;" width="29.5" height="19" viewBox="0 0 29.5 19"><path d="M0.6 5 L0.6 0.6 L5 0.6 M24.5 0.6 L28.9 0.6 L28.9 5 M28.9 14 L28.9 18.4 L24.5 18.4 M5 18.4 L0.6 18.4 L0.6 14" stroke="#f2f2f2" stroke-width="1.2" fill="none"/></svg>
<div class="t" style="left:575.8px;top:701.2px;font-size:9.100000000000001px;line-height:12.7px;color:#ececec;letter-spacing:-0.1px">图层 1</div>
<div class="a" style="left:518px;top:717.35px;width:206.5px;height:21.6px;background:#535353;"></div>
<div class="a" style="left:518px;top:738.85px;width:206.5px;height:1px;background:#474747;"></div>
<div class="a" style="left:540.5px;top:717.35px;width:0.8px;height:21.6px;background:#4a4a4a;"></div>
<svg class="a" style="left:523.8px;top:725.65px;" width="11" height="7" viewBox="0 0 11 7"><path d="M0.5 3.5 C2.5 0.3 8.5 0.3 10.5 3.5 C8.5 6.7 2.5 6.7 0.5 3.5 Z" stroke="#f0f0f0" stroke-width="1.1" fill="none"/><circle cx="5.5" cy="3.5" r="1.7" fill="#f0f0f0"/></svg>
<div class="a" style="left:544px;top:721.65px;width:24.5px;height:15px;background-color:#fff;background-image:linear-gradient(45deg,#ccc 25%,transparent 25%,transparent 75%,#ccc 75%),linear-gradient(45deg,#ccc 25%,transparent 25%,transparent 75%,#ccc 75%);background-size:5px 5px;background-position:0 0,2.5px 2.5px;"></div>
<div class="a" style="left:556px;top:721.65px;width:12.5px;height:3.2px;background:#f3b8b3;"></div>
<div class="a" style="left:556px;top:724.85px;width:12.5px;height:4px;background:#fafafa;"></div>
<div class="a" style="left:558.5px;top:728.15px;width:10px;height:8.5px;background:#444;"></div>
<svg class="a" style="left:560px;top:729.4499999999999px;" width="7" height="6" viewBox="0 0 7 6"><rect x="0.8" y="0.8" width="5.4" height="4.4" stroke="#eee" stroke-width="0.9" fill="none"/></svg>
<div class="t" style="left:575.8px;top:723.7px;font-size:9.100000000000001px;line-height:12.7px;color:#ececec;letter-spacing:-0.1px">矩形 1</div>
<div class="a" style="left:518px;top:739.8199999999999px;width:206.5px;height:21.6px;background:#535353;"></div>
<div class="a" style="left:518px;top:761.3199999999999px;width:206.5px;height:1px;background:#474747;"></div>
<div class="a" style="left:540.5px;top:739.8199999999999px;width:0.8px;height:21.6px;background:#4a4a4a;"></div>
<svg class="a" style="left:523.8px;top:748.1199999999999px;" width="11" height="7" viewBox="0 0 11 7"><path d="M0.5 3.5 C2.5 0.3 8.5 0.3 10.5 3.5 C8.5 6.7 2.5 6.7 0.5 3.5 Z" stroke="#f0f0f0" stroke-width="1.1" fill="none"/><circle cx="5.5" cy="3.5" r="1.7" fill="#f0f0f0"/></svg>
<div class="a" style="left:544px;top:744.1199999999999px;width:24.5px;height:15px;background:#ffffff;"></div>
<div class="t" style="left:575.8px;top:746.2px;font-size:9.100000000000001px;line-height:12.7px;color:#ececec;letter-spacing:-0.1px">背景</div>
<svg class="a" style="left:704px;top:746.1199999999999px;" width="9" height="11" viewBox="0 0 9 11"><rect x="0.6" y="4.5" width="7.8" height="5.8" rx="0.8" stroke="#d0d0d0" stroke-width="1.1" fill="none"/><path d="M2.3 4.5 L2.3 3 A2.2 2.2 0 0 1 6.7 3 L6.7 4.5" stroke="#d0d0d0" stroke-width="1.1" fill="none"/><rect x="3.5" y="6.3" width="2" height="2.2" fill="#d0d0d0"/></svg>
<div class="a" style="left:518px;top:813.5px;width:219px;height:21px;background:#535353;"></div>
<svg class="a" style="left:580px;top:819.5px;" width="12" height="7" viewBox="0 0 12 7"><rect x="0.6" y="0.8" width="5" height="4.6" rx="2.3" stroke="#8a8a8a" stroke-width="1" fill="none"/><rect x="6.2" y="0.8" width="5" height="4.6" rx="2.3" stroke="#8a8a8a" stroke-width="1" fill="none"/></svg>
<div class="t" style="left:602.5px;top:816.0px;font-size:10.5px;line-height:14.7px;color:#e4e4e4;font-family:Liberation Serif,serif;font-style:italic;font-weight:bold">fx</div>
<svg class="a" style="left:612.3px;top:826px;" width="3" height="3" viewBox="0 0 3 3"><path d="M3 0 L3 3 L0 3 Z" fill="#bdbdbd"/></svg>
<svg class="a" style="left:622px;top:818px;" width="12" height="10" viewBox="0 0 12 10"><rect x="0" y="0" width="12" height="10" rx="1" fill="#e4e4e4"/><circle cx="6" cy="5" r="2.7" fill="#535353"/></svg>
<svg class="a" style="left:643.5px;top:817.5px;" width="11" height="11" viewBox="0 0 11 11"><circle cx="5.5" cy="5.5" r="4.6" stroke="#e4e4e4" stroke-width="1.1" fill="none"/><path d="M2.2 8.8 A4.6 4.6 0 0 0 8.8 2.2 Z" fill="#e4e4e4"/></svg>
<svg class="a" style="left:653.5px;top:826px;" width="3" height="3" viewBox="0 0 3 3"><path d="M3 0 L3 3 L0 3 Z" fill="#bdbdbd"/></svg>
<svg class="a" style="left:663.5px;top:818px;" width="12" height="10" viewBox="0 0 12 10"><path d="M0 1 L4.5 1 L5.5 2.2 L12 2.2 L12 10 L0 10 Z" fill="#e4e4e4"/></svg>
<svg class="a" style="left:685px;top:817.5px;" width="11" height="11" viewBox="0 0 11 11"><rect x="0.6" y="0.6" width="9.8" height="9.8" rx="1" stroke="#e4e4e4" stroke-width="1.1" fill="none"/><path d="M5.5 3 L5.5 8 M3 5.5 L8 5.5" stroke="#e4e4e4" stroke-width="1.1"/></svg>
<svg class="a" style="left:706px;top:817px;" width="10" height="12" viewBox="0 0 10 12"><path d="M0.5 2.5 L9.5 2.5 M3.5 2.3 L3.5 0.7 L6.5 0.7 L6.5 2.3" stroke="#e4e4e4" stroke-width="1.1" fill="none"/><path d="M1.5 4 L8.5 4 L8 11.5 L2 11.5 Z" fill="#e4e4e4"/></svg>
<div class="a" style="left:741px;top:40px;width:741px;height:796px;background:#000;"></div>
<div class="a" style="left:741.3px;top:40px;width:740.7px;height:25.7px;background:#151515;"></div>
<div class="a" style="left:741.3px;top:40px;width:740.7px;height:1.3px;background:#8a8a8a;"></div>
<div class="a" style="left:741.3px;top:40px;width:124px;height:1.3px;background:#d0d0d0;"></div>
<div class="a" style="left:741.3px;top:66px;width:1.2px;height:770px;background:#2a2a2a;"></div>
<svg class="a" style="left:754px;top:48.5px;" width="11" height="9" viewBox="0 0 11 9"><path d="M10.5 4.5 L1 4.5 M4.8 0.7 L1 4.5 L4.8 8.3" stroke="#e8e8e8" stroke-width="1.2" fill="none"/></svg>
<div class="a" style="left:786.5px;top:46px;width:14px;height:14px;border-radius:50%;background:conic-gradient(from 200deg,#f28a1c,#e04a8c,#9b4ad8,#f28a1c);"></div>
<div class="a" style="left:788.2px;top:47.7px;width:10.6px;height:10.6px;background:#151515;border-radius:50%"></div>
<svg class="a" style="left:791.3px;top:49.7px;" width="6" height="7" viewBox="0 0 6 7"><path d="M0.4 0.3 L5.6 3.5 L0.4 6.7 Z" fill="#fff"/></svg>
<div class="t" style="left:808.5px;top:47.6px;font-size:9.3px;line-height:13.0px;color:#f2f2f2;">媒体播放器</div>
<div class="a" style="left:1387px;top:53px;width:9px;height:1px;background:#9c9c9c;"></div>
<div class="a" style="left:1424px;top:48.8px;width:8.5px;height:8.5px;background:transparent;border:1px solid #9c9c9c;border-radius:1.5px"></div>
<svg class="a" style="left:1458.5px;top:48.5px;" width="9" height="9" viewBox="0 0 9 9"><path d="M0.5 0.5 L8.5 8.5 M8.5 0.5 L0.5 8.5" stroke="#9c9c9c" stroke-width="1"/></svg>
<div class="a" style="left:1303.5px;top:159px;width:105px;height:18.5px;background:#e9e9ec;border-radius:3px;border:1px solid #fafafa;box-shadow:0 0 0 0.5px #9a9a9a"></div>
<div class="t" style="left:1312px;top:159.7px;font-size:14px;line-height:19.6px;color:#2828c4;letter-spacing:-0.1px;text-shadow:0 0 0.7px #2828c4">Shadow Mode</div>
<div class="a" style="left:742.3px;top:230.7px;width:739.7px;height:414.6px;background:#2e2e2e;"></div>
<div class="a" style="left:742.3px;top:230.7px;width:739.7px;height:14.3px;background:#323232;"></div>
<div class="a" style="left:746.5px;top:233.5px;width:8px;height:7.5px;background:#0a2a5c;border-radius:1.5px"></div>
<div class="t" style="left:748px;top:235.5px;font-size:4.2px;line-height:5.9px;color:#4aa8ff;font-weight:bold">Ps</div>
<div class="t" style="left:762.5px;top:232.9px;font-size:7px;line-height:9.8px;color:#c6c6c6;">文件(F)</div>
<div class="t" style="left:790.7px;top:232.9px;font-size:7px;line-height:9.8px;color:#c6c6c6;">编辑(E)</div>
<div class="t" style="left:819.5px;top:232.9px;font-size:7px;line-height:9.8px;color:#c6c6c6;">图像(I)</div>
<div class="t" style="left:846px;top:232.9px;font-size:7px;line-height:9.8px;color:#c6c6c6;">图层(L)</div>
<div class="t" style="left:875px;top:232.9px;font-size:7px;line-height:9.8px;color:#c6c6c6;">文字(Y)</div>
<div class="t" style="left:903.7px;top:232.9px;font-size:7px;line-height:9.8px;color:#c6c6c6;">选择(S)</div>
<div class="t" style="left:932.5px;top:232.9px;font-size:7px;line-height:9.8px;color:#c6c6c6;">滤镜(T)</div>
<div class="t" style="left:962.5px;top:232.9px;font-size:7px;line-height:9.8px;color:#c6c6c6;">3D(D)</div>
<div class="t" style="left:986px;top:232.9px;font-size:7px;line-height:9.8px;color:#c6c6c6;">视图(V)</div>
<div class="t" style="left:1016px;top:232.9px;font-size:7px;line-height:9.8px;color:#c6c6c6;">增效工具</div>
<div class="t" style="left:1051px;top:232.9px;font-size:7px;line-height:9.8px;color:#c6c6c6;">窗口(W)</div>
<div class="t" style="left:1083px;top:232.9px;font-size:7px;line-height:9.8px;color:#c6c6c6;">帮助(H)</div>
<div class="a" style="left:1424.5px;top:237.5px;width:6px;height:1.2px;background:#c0c0c0;"></div>
<div class="a" style="left:1441px;top:234px;width:5.5px;height:4.5px;background:transparent;border:1px solid #c0c0c0"></div>
<svg class="a" style="left:1463px;top:234px;" width="6" height="6" viewBox="0 0 6 6"><path d="M0.5 0.5 L5.5 5.5 M5.5 0.5 L0.5 5.5" stroke="#c8c8c8" stroke-width="1"/></svg>
<div class="a" style="left:742.3px;top:245px;width:739.7px;height:22px;background:#2c2c2c;"></div>
<div class="a" style="left:742.3px;top:266.5px;width:739.7px;height:0.8px;background:#222;"></div>
<svg class="a" style="left:752.5px;top:252px;" width="11" height="9.5" viewBox="0 0 11 9.5"><path d="M5.5 0.3 L11 5 L9.5 5 L9.5 9.5 L6.8 9.5 L6.8 6.3 L4.2 6.3 L4.2 9.5 L1.5 9.5 L1.5 5 L0 5 Z" fill="#d0d0d0"/></svg>
<svg class="a" style="left:777px;top:253px;" width="10" height="8" viewBox="0 0 10 8"><path d="M3 1 L9 1 L9 7 L3 7 M0.5 2 L2.5 4 L0.5 6" stroke="#8a8a8a" stroke-width="1" fill="none"/></svg>
<div class="a" style="left:808.5px;top:253px;width:7.5px;height:7.5px;background:#dcdcdc;border-radius:1px"></div>
<svg class="a" style="left:809.8px;top:254.6px;" width="5" height="4.5" viewBox="0 0 5 4.5"><path d="M0.6 2.2 L2 3.6 L4.4 0.8" stroke="#333" stroke-width="1.1" fill="none"/></svg>
<div class="a" style="left:821.5px;top:251px;width:11px;height:11px;background:transparent;border:1px dotted #8a8a8a"></div>
<div class="a" style="left:825.2px;top:254.7px;width:3.6px;height:3.6px;background:#e0e0e0;"></div>
<div class="t" style="left:838.5px;top:252.1px;font-size:7px;line-height:9.8px;color:#9a9a9a;">X:</div>
<div class="a" style="left:847.5px;top:250.5px;width:32.5px;height:12.5px;background:#1f1f1f;border:1px solid #3a3a3a"></div>
<div class="t" style="left:849.3px;top:252.3px;font-size:6.7px;line-height:9.4px;color:#bcbcbc;letter-spacing:-0.15px">2527.50 像</div>
<svg class="a" style="left:886px;top:253px;" width="8" height="7" viewBox="0 0 8 7"><path d="M4 0.8 L7.3 6.3 L0.7 6.3 Z" stroke="#b0b0b0" stroke-width="1" fill="none"/></svg>
<div class="t" style="left:902.5px;top:252.1px;font-size:7px;line-height:9.8px;color:#9a9a9a;">Y:</div>
<div class="a" style="left:911px;top:250.5px;width:32px;height:12.5px;background:#1f1f1f;border:1px solid #3a3a3a"></div>
<div class="t" style="left:912.8px;top:252.3px;font-size:6.7px;line-height:9.4px;color:#bcbcbc;letter-spacing:-0.15px">778.50 像</div>
<div class="t" style="left:950px;top:252.1px;font-size:7px;line-height:9.8px;color:#9a9a9a;">W:</div>
<div class="a" style="left:962.5px;top:250.5px;width:28px;height:12.5px;background:#1f1f1f;border:1px solid #3a3a3a"></div>
<div class="t" style="left:964.3px;top:252.3px;font-size:6.7px;line-height:9.4px;color:#bcbcbc;letter-spacing:-0.15px">100.00%</div>
<div class="a" style="left:995px;top:250px;width:13px;height:13.5px;background:#1a1a1a;"></div>
<div class="t" style="left:998.3px;top:251.8px;font-size:7.5px;line-height:10.5px;color:#e0e0e0;">∞</div>
<div class="t" style="left:1014px;top:252.1px;font-size:7px;line-height:9.8px;color:#9a9a9a;">H:</div>
<div class="a" style="left:1022.5px;top:250.5px;width:28px;height:12.5px;background:#1f1f1f;border:1px solid #3a3a3a"></div>
<div class="t" style="left:1024.3px;top:252.3px;font-size:6.7px;line-height:9.4px;color:#bcbcbc;letter-spacing:-0.15px">100.00%</div>
<svg class="a" style="left:1058px;top:253px;" width="9" height="7" viewBox="0 0 9 7"><path d="M0.8 6.3 L8.2 6.3 M0.8 6.3 L6 0.8" stroke="#c8c8c8" stroke-width="1" fill="none"/></svg>
<div class="a" style="left:1068.7px;top:250.5px;width:29px;height:12.5px;background:#1f1f1f;border:1px solid #3a3a3a"></div>
<div class="t" style="left:1070.5px;top:252.3px;font-size:6.7px;line-height:9.4px;color:#bcbcbc;letter-spacing:-0.15px">0.70</div>
<div class="t" style="left:1103px;top:252.1px;font-size:7px;line-height:9.8px;color:#9a9a9a;">度</div>
<div class="t" style="left:1119px;top:252.1px;font-size:7px;line-height:9.8px;color:#9a9a9a;">H:</div>
<div class="a" style="left:1127.6px;top:250.5px;width:25px;height:12.5px;background:#1f1f1f;border:1px solid #3a3a3a"></div>
<div class="t" style="left:1129.3999999999999px;top:252.3px;font-size:6.7px;line-height:9.4px;color:#bcbcbc;letter-spacing:-0.15px">0.00</div>
<div class="t" style="left:1157px;top:252.1px;font-size:7px;line-height:9.8px;color:#9a9a9a;">度</div>
<div class="t" style="left:1171.5px;top:252.1px;font-size:7px;line-height:9.8px;color:#9a9a9a;">V:</div>
<div class="a" style="left:1179.8px;top:250.5px;width:24.5px;height:12.5px;background:#1f1f1f;border:1px solid #3a3a3a"></div>
<div class="t" style="left:1181.6px;top:252.3px;font-size:6.7px;line-height:9.4px;color:#bcbcbc;letter-spacing:-0.15px">0.00</div>
<div class="t" style="left:1208.5px;top:252.1px;font-size:7px;line-height:9.8px;color:#9a9a9a;">度</div>
<div class="t" style="left:1225.5px;top:252.1px;font-size:7px;line-height:9.8px;color:#b8b8b8;">插值:</div>
<div class="a" style="left:1246.8px;top:250.5px;width:42.7px;height:12.5px;background:#1f1f1f;border:1px solid #3a3a3a"></div>
<div class="t" style="left:1250px;top:252.3px;font-size:6.8px;line-height:9.5px;color:#d0d0d0;">两次立方</div>
<svg class="a" style="left:1283px;top:255.3px;" width="5" height="4" viewBox="0 0 5 4"><path d="M0.5 0.7 L2.5 2.7 L4.5 0.7" stroke="#aaa" stroke-width="0.9" fill="none"/></svg>
<svg class="a" style="left:1297px;top:251px;" width="11" height="11" viewBox="0 0 11 11"><path d="M0.8 2 C3.5 4 7.5 4 10.2 2 M1.5 2 L3 6 M9.5 2 L8 6 M2 6.3 C4 7.6 7 7.6 9 6.3 M3 8 L1.5 10.5 M8 8 L9.5 10.5" stroke="#c8c8c8" stroke-width="1" fill="none"/><circle cx="5.5" cy="5.3" r="1.8" fill="#c8c8c8"/></svg>
<svg class="a" style="left:1334px;top:251.5px;" width="10" height="10" viewBox="0 0 10 10"><circle cx="5" cy="5" r="4.2" stroke="#d8d8d8" stroke-width="1.2" fill="none"/><path d="M2 2 L8 8" stroke="#d8d8d8" stroke-width="1.2"/></svg>
<svg class="a" style="left:1352.5px;top:252px;" width="11" height="9" viewBox="0 0 11 9"><path d="M0.8 5 L3.8 8 L10.2 0.8" stroke="#e8e8e8" stroke-width="1.5" fill="none"/></svg>
<svg class="a" style="left:1422px;top:252px;" width="10" height="10" viewBox="0 0 10 10"><circle cx="4" cy="4" r="3.1" stroke="#d8d8d8" stroke-width="1.2" fill="none"/><path d="M6.3 6.3 L9.3 9.3" stroke="#d8d8d8" stroke-width="1.4"/></svg>
<svg class="a" style="left:1440px;top:252.5px;" width="10" height="8.5" viewBox="0 0 10 8.5"><rect x="0.6" y="0.6" width="8.8" height="7.3" stroke="#8a8a8a" stroke-width="1" fill="none"/><rect x="1" y="1.5" width="2.6" height="6" fill="#8a8a8a"/></svg>
<svg class="a" style="left:1466px;top:251px;" width="10" height="11" viewBox="0 0 10 11"><path d="M3 4 L1 4 L1 10 L9 10 L9 4 L7 4" stroke="#a8a8a8" stroke-width="1" fill="none"/><path d="M5 7 L5 1.2 M3 3 L5 0.8 L7 3" stroke="#a8a8a8" stroke-width="1" fill="none"/></svg>
<div class="a" style="left:785px;top:267.3px;width:531px;height:15.5px;background:#262626;"></div>
<div class="a" style="left:785px;top:267.3px;width:149px;height:15.5px;background:#323232;"></div>
<div class="t" style="left:791px;top:271.2px;font-size:6.9px;line-height:9.7px;color:#dcdcdc;letter-spacing:-0.2px">未标题-1 @ 44.3% (花纹 拷贝 3, RGB/8#) *</div>
<svg class="a" style="left:925px;top:273.2px;" width="4.5" height="4.5" viewBox="0 0 4.5 4.5"><path d="M0.5 0.5 L4 4 M4 0.5 L0.5 4" stroke="#888" stroke-width="0.8"/></svg>
<div class="t" style="left:941px;top:271.2px;font-size:6.9px;line-height:9.7px;color:#7a7a7a;letter-spacing:-0.2px">01.png @ 25% (图层 1, RGB/8)</div>
<svg class="a" style="left:1040px;top:273.2px;" width="4.5" height="4.5" viewBox="0 0 4.5 4.5"><path d="M0.5 0.5 L4 4 M4 0.5 L0.5 4" stroke="#777" stroke-width="0.8"/></svg>
<div class="a" style="left:934px;top:267.3px;width:0.8px;height:15.5px;background:#1c1c1c;"></div>
<div class="a" style="left:1048px;top:267.3px;width:0.8px;height:15.5px;background:#1c1c1c;"></div>
<div class="a" style="left:742.3px;top:267.3px;width:42.7px;height:378px;background:#2e2e2e;"></div>
<div class="a" style="left:742.3px;top:267.3px;width:42.7px;height:7px;background:#262626;"></div>
<svg class="a" style="left:746px;top:269.3px;" width="5" height="4" viewBox="0 0 5 4"><path d="M2 0.5 L0.5 2 L2 3.5 M4.3 0.5 L2.8 2 L4.3 3.5" stroke="#bbb" stroke-width="0.7" fill="none"/></svg>
<svg class="a" style="left:747.08px;top:285.38px;opacity:0.86" width="11.84" height="11.84" viewBox="0 0 16 16"><g transform="translate(2,2)"><path d="M6 0 L8.2 2.6 L6.7 2.6 L6.7 5.3 L9.4 5.3 L9.4 3.8 L12 6 L9.4 8.2 L9.4 6.7 L6.7 6.7 L6.7 9.4 L8.2 9.4 L6 12 L3.8 9.4 L5.3 9.4 L5.3 6.7 L2.6 6.7 L2.6 8.2 L0 6 L2.6 3.8 L2.6 5.3 L5.3 5.3 L5.3 2.6 L3.8 2.6 Z" fill="#f0f0f0"/></g></svg>
<svg class="a" style="left:758.6px;top:295.5px;" width="2.2" height="2.2" viewBox="0 0 2.2 2.2"><path d="M2.2 0 L2.2 2.2 L0 2.2 Z" fill="#aaa"/></svg>
<svg class="a" style="left:767.08px;top:285.38px;opacity:0.86" width="11.84" height="11.84" viewBox="0 0 16 16"><ellipse cx="8" cy="8" rx="6.3" ry="5.5" stroke="#e6e6e6" stroke-width="1.4" fill="none" stroke-dasharray="2.4 1.6"/></svg>
<svg class="a" style="left:778.6px;top:295.5px;" width="2.2" height="2.2" viewBox="0 0 2.2 2.2"><path d="M2.2 0 L2.2 2.2 L0 2.2 Z" fill="#aaa"/></svg>
<svg class="a" style="left:747.08px;top:300.38px;opacity:0.86" width="11.84" height="11.84" viewBox="0 0 16 16"><ellipse cx="8.5" cy="6.3" rx="6" ry="4" stroke="#e6e6e6" stroke-width="1.4" fill="none" transform="rotate(-12 8.5 6.3)"/><path d="M4.3 9 C3 10.5 4.5 12 5.5 11 C6.3 10 5 9.3 4.3 10.5 C3.8 12 4.5 13.5 5.5 14" stroke="#e6e6e6" stroke-width="1.1" fill="none"/></svg>
<svg class="a" style="left:758.6px;top:310.5px;" width="2.2" height="2.2" viewBox="0 0 2.2 2.2"><path d="M2.2 0 L2.2 2.2 L0 2.2 Z" fill="#aaa"/></svg>
<svg class="a" style="left:767.08px;top:300.38px;opacity:0.86" width="11.84" height="11.84" viewBox="0 0 16 16"><rect x="2" y="2" width="9.5" height="9.5" stroke="#8a8a8a" stroke-width="1" fill="none"/><rect x="4" y="4" width="5.5" height="5.5" fill="#e6e6e6"/><path d="M8 7 L8 15 L10.2 12.8 L14.5 12 Z" fill="#e6e6e6" stroke="#535353" stroke-width="0.5"/></svg>
<svg class="a" style="left:778.6px;top:310.5px;" width="2.2" height="2.2" viewBox="0 0 2.2 2.2"><path d="M2.2 0 L2.2 2.2 L0 2.2 Z" fill="#aaa"/></svg>
<svg class="a" style="left:747.08px;top:315.47999999999996px;opacity:0.86" width="11.84" height="11.84" viewBox="0 0 16 16"><path d="M4.5 0.5 L4.5 11.5 L15.5 11.5 M0.5 4.5 L11.5 4.5 L11.5 15.5" stroke="#e6e6e6" stroke-width="1.7" fill="none"/></svg>
<svg class="a" style="left:758.6px;top:325.59999999999997px;" width="2.2" height="2.2" viewBox="0 0 2.2 2.2"><path d="M2.2 0 L2.2 2.2 L0 2.2 Z" fill="#aaa"/></svg>
<svg class="a" style="left:767.08px;top:315.47999999999996px;opacity:0.86" width="11.84" height="11.84" viewBox="0 0 16 16"><rect x="1.5" y="2.5" width="13" height="11" stroke="#e6e6e6" stroke-width="1.4" fill="none"/><path d="M1.5 2.5 L14.5 13.5 M14.5 2.5 L1.5 13.5" stroke="#e6e6e6" stroke-width="1.1"/></svg>
<svg class="a" style="left:747.08px;top:330.68px;opacity:0.86" width="11.84" height="11.84" viewBox="0 0 16 16"><path d="M2 14 L2.8 11.2 L8.5 5.5 L10.5 7.5 L4.8 13.2 Z" stroke="#e6e6e6" stroke-width="1.2" fill="none"/><path d="M8 4 L12 8 M9.5 5 L12 2.2 A1.6 1.6 0 0 1 14 4.3 L11.2 6.8" stroke="#e6e6e6" stroke-width="2" fill="none" stroke-linecap="round"/></svg>
<svg class="a" style="left:758.6px;top:340.8px;" width="2.2" height="2.2" viewBox="0 0 2.2 2.2"><path d="M2.2 0 L2.2 2.2 L0 2.2 Z" fill="#aaa"/></svg>
<svg class="a" style="left:767.08px;top:330.68px;opacity:0.86" width="11.84" height="11.84" viewBox="0 0 16 16"><g transform="rotate(-45 8 8)"><rect x="0.5" y="4.5" width="15" height="7" rx="2.2" fill="#e6e6e6"/><rect x="5.2" y="5.5" width="5.6" height="5" fill="#535353"/><circle cx="6.8" cy="7" r="0.7" fill="#e6e6e6"/><circle cx="9.2" cy="7" r="0.7" fill="#e6e6e6"/><circle cx="6.8" cy="9.2" r="0.7" fill="#e6e6e6"/><circle cx="9.2" cy="9.2" r="0.7" fill="#e6e6e6"/></g></svg>
<svg class="a" style="left:778.6px;top:340.8px;" width="2.2" height="2.2" viewBox="0 0 2.2 2.2"><path d="M2.2 0 L2.2 2.2 L0 2.2 Z" fill="#aaa"/></svg>
<svg class="a" style="left:747.08px;top:345.78px;opacity:0.86" width="11.84" height="11.84" viewBox="0 0 16 16"><path d="M14.3 1.2 C11 3 7.5 6.5 6 9 L7.6 10.5 C10 9 13 5 14.3 1.2 Z" fill="#e6e6e6"/><path d="M5.2 9.8 C3.5 10 3 11.5 2.8 12.8 C2.6 13.8 2 14.3 1.2 14.6 C3.5 15.3 6.5 14.3 6.9 11.4 Z" fill="#e6e6e6"/></svg>
<svg class="a" style="left:758.6px;top:355.9px;" width="2.2" height="2.2" viewBox="0 0 2.2 2.2"><path d="M2.2 0 L2.2 2.2 L0 2.2 Z" fill="#aaa"/></svg>
<svg class="a" style="left:767.08px;top:345.78px;opacity:0.86" width="11.84" height="11.84" viewBox="0 0 16 16"><path d="M6.3 1.8 A2.5 2.5 0 0 1 9.7 1.8 C11 3.3 9.3 5.2 9.3 7 L12.8 7 L12.8 10.2 L3.2 10.2 L3.2 7 L6.7 7 C6.7 5.2 5 3.3 6.3 1.8 Z" fill="#e6e6e6"/><rect x="2.5" y="11.6" width="11" height="2.2" fill="#e6e6e6"/></svg>
<svg class="a" style="left:778.6px;top:355.9px;" width="2.2" height="2.2" viewBox="0 0 2.2 2.2"><path d="M2.2 0 L2.2 2.2 L0 2.2 Z" fill="#aaa"/></svg>
<svg class="a" style="left:747.08px;top:360.88px;opacity:0.86" width="11.84" height="11.84" viewBox="0 0 16 16"><path d="M14.3 1.2 C11.5 3 8.5 6 7.3 8.2 L8.8 9.6 C11 8 13.3 4.5 14.3 1.2 Z" fill="#e6e6e6"/><path d="M6.6 9 C5 9.3 4.6 10.5 4.4 11.6 C4.3 12.5 3.8 13 3 13.3 C5 14 7.6 13.2 8 10.5 Z" fill="#e6e6e6"/><path d="M1.5 6 A4.5 4.5 0 0 1 8 2.3 M1.5 6 L0.5 3.8 M1.5 6 L3.8 5.2" stroke="#e6e6e6" stroke-width="1.2" fill="none"/></svg>
<svg class="a" style="left:758.6px;top:371.0px;" width="2.2" height="2.2" viewBox="0 0 2.2 2.2"><path d="M2.2 0 L2.2 2.2 L0 2.2 Z" fill="#aaa"/></svg>
<svg class="a" style="left:767.08px;top:360.88px;opacity:0.86" width="11.84" height="11.84" viewBox="0 0 16 16"><path d="M9.5 2 L14.5 6.5 L8 13 L4.5 13 L2 10.3 Z" stroke="#e6e6e6" stroke-width="1.3" fill="none"/><path d="M9.5 2 L14.5 6.5 L11 10 L6 5.5 Z" fill="#e6e6e6"/><path d="M3 14.6 L14.5 14.6" stroke="#e6e6e6" stroke-width="1.1"/></svg>
<svg class="a" style="left:778.6px;top:371.0px;" width="2.2" height="2.2" viewBox="0 0 2.2 2.2"><path d="M2.2 0 L2.2 2.2 L0 2.2 Z" fill="#aaa"/></svg>
<svg class="a" style="left:747.08px;top:375.97999999999996px;opacity:0.86" width="11.84" height="11.84" viewBox="0 0 16 16"><defs><linearGradient id="tg2" x1="0" x2="1"><stop offset="0" stop-color="#f0f0f0"/><stop offset="1" stop-color="#444"/></linearGradient></defs><rect x="1.5" y="2.5" width="13" height="11" fill="url(#tg2)" stroke="#e6e6e6" stroke-width="1.1"/></svg>
<svg class="a" style="left:758.6px;top:386.09999999999997px;" width="2.2" height="2.2" viewBox="0 0 2.2 2.2"><path d="M2.2 0 L2.2 2.2 L0 2.2 Z" fill="#aaa"/></svg>
<svg class="a" style="left:767.08px;top:375.97999999999996px;opacity:0.86" width="11.84" height="11.84" viewBox="0 0 16 16"><path d="M8 1.5 C10 5 12.3 7.5 12.3 10.3 A4.3 4.3 0 0 1 3.7 10.3 C3.7 7.5 6 5 8 1.5 Z" fill="#e6e6e6"/></svg>
<svg class="a" style="left:778.6px;top:386.09999999999997px;" width="2.2" height="2.2" viewBox="0 0 2.2 2.2"><path d="M2.2 0 L2.2 2.2 L0 2.2 Z" fill="#aaa"/></svg>
<svg class="a" style="left:747.08px;top:391.08px;opacity:0.86" width="11.84" height="11.84" viewBox="0 0 16 16"><circle cx="10" cy="5.8" r="4.3" fill="#e6e6e6"/><path d="M7 9 L2 14.5" stroke="#e6e6e6" stroke-width="2" stroke-linecap="round"/></svg>
<svg class="a" style="left:758.6px;top:401.2px;" width="2.2" height="2.2" viewBox="0 0 2.2 2.2"><path d="M2.2 0 L2.2 2.2 L0 2.2 Z" fill="#aaa"/></svg>
<svg class="a" style="left:767.08px;top:391.08px;opacity:0.86" width="11.84" height="11.84" viewBox="0 0 16 16"><g transform="rotate(40 8 8)"><path d="M8 0.5 C10.5 4 11.5 7.5 10 11.5 L6 11.5 C4.5 7.5 5.5 4 8 0.5 Z" stroke="#e6e6e6" stroke-width="1.3" fill="none"/><circle cx="8" cy="7" r="1.3" fill="#e6e6e6"/><path d="M8 0.5 L8 5.8" stroke="#e6e6e6" stroke-width="1"/><rect x="5.5" y="12.6" width="5" height="2.6" fill="#e6e6e6"/></g><ellipse cx="8" cy="8.5" rx="7.3" ry="3.6" stroke="#e6e6e6" stroke-width="0.9" fill="none" transform="rotate(-25 8 8.5)"/></svg>
<svg class="a" style="left:778.6px;top:401.2px;" width="2.2" height="2.2" viewBox="0 0 2.2 2.2"><path d="M2.2 0 L2.2 2.2 L0 2.2 Z" fill="#aaa"/></svg>
<svg class="a" style="left:747.08px;top:406.28px;opacity:0.86" width="11.84" height="11.84" viewBox="0 0 16 16"><text x="8" y="14.2" text-anchor="middle" font-family="Liberation Serif,serif" font-weight="bold" font-size="17.5" fill="#e6e6e6">T</text></svg>
<svg class="a" style="left:758.6px;top:416.4px;" width="2.2" height="2.2" viewBox="0 0 2.2 2.2"><path d="M2.2 0 L2.2 2.2 L0 2.2 Z" fill="#aaa"/></svg>
<svg class="a" style="left:767.08px;top:406.28px;opacity:0.86" width="11.84" height="11.84" viewBox="0 0 16 16"><path d="M5 1.5 L5 13.5 L8 10.6 L10.2 15 L11.9 14.2 L9.8 9.9 L13.5 9.5 Z" fill="#1c1c1c" stroke="#e6e6e6" stroke-width="1"/></svg>
<svg class="a" style="left:778.6px;top:416.4px;" width="2.2" height="2.2" viewBox="0 0 2.2 2.2"><path d="M2.2 0 L2.2 2.2 L0 2.2 Z" fill="#aaa"/></svg>
<svg class="a" style="left:747.08px;top:421.38px;opacity:0.86" width="11.84" height="11.84" viewBox="0 0 16 16"><rect x="1.5" y="3" width="13" height="9.5" stroke="#e6e6e6" stroke-width="1.4" fill="#6b6b6b"/></svg>
<svg class="a" style="left:758.6px;top:431.5px;" width="2.2" height="2.2" viewBox="0 0 2.2 2.2"><path d="M2.2 0 L2.2 2.2 L0 2.2 Z" fill="#aaa"/></svg>
<svg class="a" style="left:767.08px;top:421.38px;opacity:0.86" width="11.84" height="11.84" viewBox="0 0 16 16"><path d="M4.6 15 C3 12.5 1.5 10.5 1 9 C0.8 8 1.9 7.6 2.6 8.4 L4 10 L4 3.3 C4 2.2 5.7 2.2 5.7 3.3 L6 7 L6.3 1.8 C6.4 0.7 8 0.7 8.1 1.8 L8.3 7 L9 2.4 C9.2 1.4 10.8 1.6 10.7 2.7 L10.4 7.5 L11.6 4.3 C12 3.4 13.4 3.8 13.2 4.9 C12.7 7.5 12.6 9.5 12.3 11.3 C12 13 11.5 14 11 15 Z" fill="#e6e6e6"/></svg>
<svg class="a" style="left:778.6px;top:431.5px;" width="2.2" height="2.2" viewBox="0 0 2.2 2.2"><path d="M2.2 0 L2.2 2.2 L0 2.2 Z" fill="#aaa"/></svg>
<svg class="a" style="left:747.08px;top:436.47999999999996px;opacity:0.86" width="11.84" height="11.84" viewBox="0 0 16 16"><circle cx="6.3" cy="6.3" r="4.7" stroke="#e6e6e6" stroke-width="1.5" fill="none"/><path d="M9.8 9.8 L14.3 14.3" stroke="#e6e6e6" stroke-width="2.1" stroke-linecap="round"/></svg>
<svg class="a" style="left:758.6px;top:446.59999999999997px;" width="2.2" height="2.2" viewBox="0 0 2.2 2.2"><path d="M2.2 0 L2.2 2.2 L0 2.2 Z" fill="#aaa"/></svg>
<svg class="a" style="left:767.08px;top:436.47999999999996px;opacity:0.86" width="11.84" height="11.84" viewBox="0 0 16 16"><circle cx="3.3" cy="8" r="1.35" fill="#e6e6e6"/><circle cx="8" cy="8" r="1.35" fill="#e6e6e6"/><circle cx="12.7" cy="8" r="1.35" fill="#e6e6e6"/></svg>
<svg class="a" style="left:778.6px;top:446.59999999999997px;" width="2.2" height="2.2" viewBox="0 0 2.2 2.2"><path d="M2.2 0 L2.2 2.2 L0 2.2 Z" fill="#aaa"/></svg>
<div class="a" style="left:762.5px;top:463.5px;width:13.5px;height:13.5px;background:#fff;"></div>
<div class="a" style="left:752px;top:455px;width:14px;height:14px;background:#000;border:1px solid #9a9a9a"></div>
<svg class="a" style="left:770.5px;top:453.5px;" width="6" height="6" viewBox="0 0 6 6"><path d="M0.8 1.5 L3.5 1.5 A1.5 1.5 0 0 1 5 3 L5 5.5" stroke="#e6e6e6" stroke-width="0.8" fill="none"/></svg>
<svg class="a" style="left:752px;top:471.5px;" width="6" height="6" viewBox="0 0 6 6"><rect x="0.4" y="0.4" width="3.4" height="3.4" fill="#111" stroke="#e6e6e6" stroke-width="0.6"/><rect x="2.4" y="2.4" width="3.2" height="3.2" fill="#e6e6e6"/></svg>
<svg class="a" style="left:748px;top:485.5px;" width="11.5" height="8.5" viewBox="0 0 11.5 8.5"><rect x="0.6" y="0.6" width="10.3" height="7.3" stroke="#b8b8b8" stroke-width="0.9" fill="none"/><circle cx="5.7" cy="4.2" r="2.2" stroke="#b8b8b8" stroke-width="0.8" fill="none" stroke-dasharray="1.2 0.8"/></svg>
<svg class="a" style="left:767px;top:484.5px;" width="12" height="10" viewBox="0 0 12 10"><rect x="3.5" y="0.6" width="8" height="5.6" stroke="#b8b8b8" stroke-width="0.9" fill="#2e2e2e"/><rect x="0.6" y="3.2" width="8" height="5.8" stroke="#b8b8b8" stroke-width="0.9" fill="#2e2e2e"/></svg>
<div class="a" style="left:785px;top:282.8px;width:531px;height:11px;background:#2b2b2b;"></div>
<div class="a" style="left:785px;top:293.8px;width:9.8px;height:341px;background:#2b2b2b;"></div>
<div class="a" style="left:796.0px;top:284px;width:0.7px;height:9.8px;background:#555;"></div>
<div class="t" style="left:797.4000000000001px;top:285.1px;font-size:5.8px;line-height:8.1px;color:#7e7e7e;">22</div>
<div class="a" style="left:826.62px;top:284px;width:0.7px;height:9.8px;background:#555;"></div>
<div class="t" style="left:828.0200000000001px;top:285.1px;font-size:5.8px;line-height:8.1px;color:#7e7e7e;">24</div>
<div class="a" style="left:857.24px;top:284px;width:0.7px;height:9.8px;background:#555;"></div>
<div class="t" style="left:858.6400000000001px;top:285.1px;font-size:5.8px;line-height:8.1px;color:#7e7e7e;">26</div>
<div class="a" style="left:887.86px;top:284px;width:0.7px;height:9.8px;background:#555;"></div>
<div class="t" style="left:889.2600000000001px;top:285.1px;font-size:5.8px;line-height:8.1px;color:#7e7e7e;">28</div>
<div class="a" style="left:918.48px;top:284px;width:0.7px;height:9.8px;background:#555;"></div>
<div class="t" style="left:919.8800000000001px;top:285.1px;font-size:5.8px;line-height:8.1px;color:#7e7e7e;">30</div>
<div class="a" style="left:949.1px;top:284px;width:0.7px;height:9.8px;background:#555;"></div>
<div class="t" style="left:950.5000000000001px;top:285.1px;font-size:5.8px;line-height:8.1px;color:#7e7e7e;">32</div>
<div class="a" style="left:979.72px;top:284px;width:0.7px;height:9.8px;background:#555;"></div>
<div class="t" style="left:981.1200000000001px;top:285.1px;font-size:5.8px;line-height:8.1px;color:#7e7e7e;">34</div>
<div class="a" style="left:1010.34px;top:284px;width:0.7px;height:9.8px;background:#555;"></div>
<div class="t" style="left:1011.7400000000001px;top:285.1px;font-size:5.8px;line-height:8.1px;color:#7e7e7e;">36</div>
<div class="a" style="left:1040.96px;top:284px;width:0.7px;height:9.8px;background:#555;"></div>
<div class="t" style="left:1042.3600000000001px;top:285.1px;font-size:5.8px;line-height:8.1px;color:#7e7e7e;">38</div>
<div class="a" style="left:1071.58px;top:284px;width:0.7px;height:9.8px;background:#555;"></div>
<div class="t" style="left:1072.98px;top:285.1px;font-size:5.8px;line-height:8.1px;color:#7e7e7e;">40</div>
<div class="a" style="left:1102.2px;top:284px;width:0.7px;height:9.8px;background:#555;"></div>
<div class="t" style="left:1103.6000000000001px;top:285.1px;font-size:5.8px;line-height:8.1px;color:#7e7e7e;">42</div>
<div class="a" style="left:1132.82px;top:284px;width:0.7px;height:9.8px;background:#555;"></div>
<div class="t" style="left:1134.22px;top:285.1px;font-size:5.8px;line-height:8.1px;color:#7e7e7e;">44</div>
<div class="a" style="left:1163.44px;top:284px;width:0.7px;height:9.8px;background:#555;"></div>
<div class="t" style="left:1164.8400000000001px;top:285.1px;font-size:5.8px;line-height:8.1px;color:#7e7e7e;">46</div>
<div class="a" style="left:1194.06px;top:284px;width:0.7px;height:9.8px;background:#555;"></div>
<div class="t" style="left:1195.46px;top:285.1px;font-size:5.8px;line-height:8.1px;color:#7e7e7e;">48</div>
<div class="a" style="left:1224.68px;top:284px;width:0.7px;height:9.8px;background:#555;"></div>
<div class="t" style="left:1226.0800000000002px;top:285.1px;font-size:5.8px;line-height:8.1px;color:#7e7e7e;">50</div>
<div class="a" style="left:1255.3px;top:284px;width:0.7px;height:9.8px;background:#555;"></div>
<div class="t" style="left:1256.7px;top:285.1px;font-size:5.8px;line-height:8.1px;color:#7e7e7e;">52</div>
<div class="a" style="left:1285.92px;top:284px;width:0.7px;height:9.8px;background:#555;"></div>
<div class="t" style="left:1287.3200000000002px;top:285.1px;font-size:5.8px;line-height:8.1px;color:#7e7e7e;">54</div>
<div class="a" style="left:796px;top:291.3px;width:508px;height:2.5px;background:repeating-linear-gradient(to right,#3e3e3e 0,#3e3e3e 0.6px,transparent 0.6px,transparent 3.06px)"></div>
<div class="t" style="left:787.3px;top:302.8px;font-size:5.8px;line-height:8.1px;color:#7e7e7e;">2</div>
<div class="t" style="left:787.3px;top:333.1px;font-size:5.8px;line-height:8.1px;color:#7e7e7e;">0</div>
<div class="t" style="left:787.3px;top:363.4px;font-size:5.8px;line-height:8.1px;color:#7e7e7e;">2</div>
<div class="t" style="left:787.3px;top:393.8px;font-size:5.8px;line-height:8.1px;color:#7e7e7e;">4</div>
<div class="t" style="left:787.3px;top:424.1px;font-size:5.8px;line-height:8.1px;color:#7e7e7e;">6</div>
<div class="t" style="left:787.3px;top:454.4px;font-size:5.8px;line-height:8.1px;color:#7e7e7e;">8</div>
<div class="t" style="left:787.3px;top:479.8px;font-size:5.8px;line-height:8.1px;color:#7e7e7e;">1</div>
<div class="t" style="left:787.3px;top:486.8px;font-size:5.8px;line-height:8.1px;color:#7e7e7e;">0</div>
<div class="t" style="left:787.3px;top:510.1px;font-size:5.8px;line-height:8.1px;color:#7e7e7e;">1</div>
<div class="t" style="left:787.3px;top:517.1px;font-size:5.8px;line-height:8.1px;color:#7e7e7e;">2</div>
<div class="t" style="left:787.3px;top:540.5px;font-size:5.8px;line-height:8.1px;color:#7e7e7e;">1</div>
<div class="t" style="left:787.3px;top:547.5px;font-size:5.8px;line-height:8.1px;color:#7e7e7e;">4</div>
<div class="t" style="left:787.3px;top:570.9px;font-size:5.8px;line-height:8.1px;color:#7e7e7e;">1</div>
<div class="t" style="left:787.3px;top:577.9px;font-size:5.8px;line-height:8.1px;color:#7e7e7e;">6</div>
<div class="t" style="left:787.3px;top:601.1px;font-size:5.8px;line-height:8.1px;color:#7e7e7e;">1</div>
<div class="t" style="left:787.3px;top:608.1px;font-size:5.8px;line-height:8.1px;color:#7e7e7e;">8</div>
<div class="a" style="left:785px;top:331px;width:9.8px;height:0.7px;background:#4c4c4c;"></div>
<div class="a" style="left:785px;top:361.3px;width:9.8px;height:0.7px;background:#4c4c4c;"></div>
<div class="a" style="left:785px;top:391.7px;width:9.8px;height:0.7px;background:#4c4c4c;"></div>
<div class="a" style="left:785px;top:422px;width:9.8px;height:0.7px;background:#4c4c4c;"></div>
<div class="a" style="left:785px;top:452.3px;width:9.8px;height:0.7px;background:#4c4c4c;"></div>
<div class="a" style="left:785px;top:482.7px;width:9.8px;height:0.7px;background:#4c4c4c;"></div>
<div class="a" style="left:785px;top:513px;width:9.8px;height:0.7px;background:#4c4c4c;"></div>
<div class="a" style="left:785px;top:543.3px;width:9.8px;height:0.7px;background:#4c4c4c;"></div>
<div class="a" style="left:785px;top:573.7px;width:9.8px;height:0.7px;background:#4c4c4c;"></div>
<div class="a" style="left:785px;top:604px;width:9.8px;height:0.7px;background:#4c4c4c;"></div>
<div class="a" style="left:792px;top:294px;width:2.8px;height:340px;background:repeating-linear-gradient(to bottom,#3e3e3e 0,#3e3e3e 0.6px,transparent 0.6px,transparent 3.03px)"></div>
<div class="a" style="left:794.8px;top:293.8px;width:509.7px;height:341px;background:#191919;"></div>
<div class="a" style="left:795.5px;top:331px;width:376px;height:303.8px;background:#fdfdfd;"></div>
<div class="a" style="left:833px;top:331px;width:338.5px;height:199.5px;background:#f8c9c0;"></div>
<svg class="a" style="left:833px;top:331px;overflow:hidden" width="338.5" height="199.5" viewBox="0 0 338.5 199.5"><defs><g id="fl2"><g fill="none" stroke="#fbe4dc" stroke-width="0.9" stroke-linecap="round"><path d="M0 40 C40 26 90 44 140 36 M140 36 C175 30 215 54 247 42 M96 39 C86 60 92 85 72 112 M168 40 C160 62 150 78 128 100 M58 34 C66 22 62 10 72 0 M138 36 C150 24 146 10 156 0 M30 36 C20 50 30 62 8 84 M205 46 C200 62 212 74 224 92 M96 40 C120 52 150 50 160 70 M22 38 C14 30 12 20 0 14 M110 38 C118 24 108 10 122 0 M186 42 C192 30 182 16 196 2 M222 47 C232 38 238 30 248 22 M52 56 C44 76 58 92 36 110 M122 66 C112 82 122 98 102 116 M186 56 C176 70 186 84 172 104 M36 84 C50 92 70 88 84 104"/><path d="M28.7 21.5 L25.7 24.8 L21.9 27.2 L17.4 28.5 L12.6 28.5 L7.8 27.1 L3.5 24.4 L0.0 20.4 L-2.3 15.6 L-3.2 10.1 L-2.5 4.5 L-0.2 -0.8 L3.6 -5.4 L8.6 -8.9 L14.4 -10.9 L20.8 -11.2 L27.1 -9.6 L32.9 -6.3 L37.6 -1.5 M19.0 83.6 L14.3 83.4 L9.7 81.9 L5.5 79.1 L2.3 75.2 L0.2 70.3 L-0.5 65.0 L0.4 59.5 L2.8 54.3 L6.6 49.9 L11.6 46.7 L17.5 45.0 L23.7 44.9 L29.8 46.6 L35.4 50.0 L39.9 54.9 L42.9 61.0 L44.1 67.9 L43.3 74.9 M54.4 68.5 L51.7 65.2 L50.1 61.2 L49.6 56.7 L50.4 52.2 L52.4 47.9 L55.7 44.2 L60.0 41.6 L65.0 40.2 L70.4 40.3 L75.6 41.9 L80.3 44.9 L84.1 49.2 L86.5 54.6 L87.4 60.5 L86.7 66.6 L84.1 72.4 L80.0 77.4 L74.6 81.1 M90.4 91.4 L91.2 87.3 L93.3 83.4 L96.4 80.2 L100.4 77.9 L105.0 76.7 L109.9 76.9 L114.7 78.5 L119.0 81.4 L122.3 85.5 L124.5 90.6 L125.2 96.1 L124.3 101.8 L121.8 107.1 L117.8 111.6 L112.6 115.0 L106.6 116.7 L100.2 116.8 L93.8 115.0 M105.8 1.6 L109.4 -0.4 L113.5 -1.3 L117.9 -1.0 L122.1 0.5 L125.9 3.2 L128.8 7.0 L130.6 11.5 L131.1 16.5 L130.2 21.6 L127.8 26.4 L124.1 30.4 L119.3 33.3 L113.7 34.8 L107.8 34.7 L102.1 32.9 L97.0 29.5 L92.9 24.7 L90.2 18.8 M173.7 11.0 L177.4 12.4 L180.7 14.9 L183.2 18.3 L184.7 22.3 L185.1 26.8 L184.1 31.4 L181.9 35.6 L178.4 39.1 L174.0 41.6 L169.0 42.8 L163.7 42.6 L158.5 40.8 L153.9 37.6 L150.3 33.1 L148.0 27.7 L147.3 21.7 L148.3 15.6 L151.0 10.0 M222.1 9.3 L223.6 13.8 L223.7 18.7 L222.5 23.5 L219.9 27.9 L216.0 31.5 L211.2 34.0 L205.8 35.1 L200.1 34.6 L194.7 32.5 L190.0 28.9 L186.3 24.0 L184.1 18.1 L183.6 11.8 L184.9 5.4 L188.0 -0.5 L192.7 -5.4 L198.7 -8.9 L205.6 -10.6 M151.0 90.5 L148.9 93.9 L145.9 96.7 L142.2 98.6 L137.9 99.4 L133.4 98.9 L129.1 97.2 L125.4 94.3 L122.5 90.3 L120.8 85.5 L120.5 80.3 L121.7 75.1 L124.3 70.4 L128.2 66.4 L133.3 63.6 L139.0 62.3 L145.0 62.6 L150.8 64.7 L155.9 68.3 M194.8 104.0 L190.3 104.6 L185.6 103.9 L181.1 101.9 L177.3 98.7 L174.4 94.4 L172.8 89.3 L172.7 83.9 L174.2 78.5 L177.1 73.6 L181.4 69.6 L186.8 66.9 L192.8 65.8 L199.0 66.4 L205.0 68.8 L210.2 72.8 L214.1 78.2 L216.5 84.6 L217.0 91.5" stroke-width="0.8"/><path d="M136.0 52.0 L135.0 55.6 L132.7 58.4 L129.6 60.0 L126.1 60.2 L123.0 58.9 L120.6 56.6 L119.5 53.5 L119.7 50.4 L121.2 47.7 L123.5 45.9 L126.4 45.2 L129.1 45.7 L131.4 47.3 L132.8 49.5 L133.1 52.1 L132.3 54.5 L130.7 56.3 L128.6 57.2 L126.3 57.2 L124.4 56.3 L123.0 54.8 L122.4 52.9 L122.6 51.0 L123.6 49.4 L125.0 48.4 L126.7 48.1 L128.3 48.5 L129.4 49.5 L130.1 50.7 L130.1 52.1 L129.6 53.3 L128.8 54.1 L127.7 54.4 L126.7 54.3 L125.9 53.8 L125.4 53.1 L125.3 52.3 L125.5 51.6 L125.9 51.1 M244.5 23.0 L243.7 26.0 L241.8 28.3 L239.1 29.7 L236.3 29.8 L233.6 28.8 L231.7 26.8 L230.8 24.3 L231.0 21.7 L232.2 19.4 L234.1 17.9 L236.5 17.3 L238.8 17.8 L240.7 19.1 L241.8 21.0 L242.1 23.1 L241.4 25.1 L240.1 26.6 L238.3 27.4 L236.4 27.4 L234.8 26.6 L233.6 25.3 L233.2 23.7 L233.4 22.1 L234.2 20.8 L235.4 20.0 L236.8 19.7 L238.0 20.1 L239.0 20.9 L239.6 22.0 L239.6 23.1 L239.2 24.1 L238.5 24.7 L237.6 25.0 L236.7 24.9 L236.0 24.5 L235.6 23.9 L235.6 23.2 L235.7 22.7 L236.1 22.3 M48.0 90.0 L47.1 93.2 L45.1 95.7 L42.3 97.1 L39.2 97.3 L36.4 96.2 L34.3 94.1 L33.4 91.4 L33.5 88.6 L34.8 86.2 L36.9 84.5 L39.4 83.9 L41.9 84.4 L43.9 85.8 L45.1 87.8 L45.4 90.1 L44.7 92.2 L43.3 93.8 L41.4 94.7 L39.4 94.7 L37.7 93.9 L36.4 92.5 L35.9 90.8 L36.1 89.1 L37.0 87.7 L38.3 86.8 L39.7 86.5 L41.1 86.9 L42.2 87.7 L42.7 88.9 L42.8 90.1 L42.3 91.1 L41.6 91.9 L40.6 92.2 L39.7 92.1 L39.0 91.6 L38.6 91.0 L38.5 90.3 L38.7 89.7 L39.0 89.2 M201.5 61.5 L200.8 64.1 L199.1 66.1 L196.9 67.3 L194.4 67.4 L192.1 66.5 L190.4 64.8 L189.6 62.6 L189.8 60.3 L190.8 58.4 L192.5 57.1 L194.5 56.6 L196.5 57.0 L198.2 58.1 L199.2 59.7 L199.4 61.6 L198.8 63.3 L197.7 64.6 L196.1 65.3 L194.5 65.3 L193.1 64.6 L192.1 63.5 L191.7 62.1 L191.8 60.7 L192.5 59.6 L193.6 58.9 L194.8 58.7 L195.9 59.0 L196.8 59.7 L197.2 60.6 L197.3 61.6 L196.9 62.4 L196.3 63.0 L195.5 63.3 L194.8 63.2 L194.2 62.8 L193.8 62.3 L193.7 61.7 L193.9 61.2 L194.2 60.9" stroke-width="0.9"/></g><g fill="#fbe4dc" stroke="none"><path transform="translate(11.4 36.9) rotate(24)" d="M0 0 C4.4 -4.0 11.1 -3.2 14.8 0 C11.1 3.2 4.4 4.0 0 0Z"/><path transform="translate(26.3 34.9) rotate(-40)" d="M0 0 C5.4 -4.0 13.5 -3.2 18.0 0 C13.5 3.2 5.4 4.0 0 0Z"/><path transform="translate(41.9 34.5) rotate(36)" d="M0 0 C6.4 -4.0 16.0 -3.2 21.3 0 C16.0 3.2 6.4 4.0 0 0Z"/><path transform="translate(58.0 35.2) rotate(-32)" d="M0 0 C4.4 -4.0 11.1 -3.2 14.8 0 C11.1 3.2 4.4 4.0 0 0Z"/><path transform="translate(74.6 36.4) rotate(40)" d="M0 0 C5.4 -4.0 13.5 -3.2 18.0 0 C13.5 3.2 5.4 4.0 0 0Z"/><path transform="translate(91.5 37.5) rotate(-32)" d="M0 0 C6.4 -4.0 16.0 -3.2 21.3 0 C16.0 3.2 6.4 4.0 0 0Z"/><path transform="translate(108.7 38.1) rotate(36)" d="M0 0 C4.4 -4.0 11.1 -3.2 14.8 0 C11.1 3.2 4.4 4.0 0 0Z"/><path transform="translate(126.1 37.6) rotate(-40)" d="M0 0 C5.4 -4.0 13.5 -3.2 18.0 0 C13.5 3.2 5.4 4.0 0 0Z"/><path transform="translate(140.0 36.0) rotate(-9)" d="M0 0 C5.1 -3.8 12.8 -3.0 17.0 0 C12.8 3.0 5.1 3.8 0 0Z"/><path transform="translate(151.2 35.0) rotate(35)" d="M0 0 C4.0 -3.6 10.0 -2.9 13.3 0 C10.0 2.9 4.0 3.6 0 0Z"/><path transform="translate(165.5 35.9) rotate(-29)" d="M0 0 C4.9 -3.6 12.2 -2.9 16.2 0 C12.2 2.9 4.9 3.6 0 0Z"/><path transform="translate(180.1 38.3) rotate(46)" d="M0 0 C5.7 -3.6 14.4 -2.9 19.1 0 C14.4 2.9 5.7 3.6 0 0Z"/><path transform="translate(194.6 41.2) rotate(-24)" d="M0 0 C4.0 -3.6 10.0 -2.9 13.3 0 C10.0 2.9 4.0 3.6 0 0Z"/><path transform="translate(209.0 43.9) rotate(44)" d="M0 0 C4.9 -3.6 12.2 -2.9 16.2 0 C12.2 2.9 4.9 3.6 0 0Z"/><path transform="translate(223.1 45.3) rotate(-33)" d="M0 0 C5.7 -3.6 14.4 -2.9 19.1 0 C14.4 2.9 5.7 3.6 0 0Z"/><path transform="translate(236.6 44.7) rotate(27)" d="M0 0 C4.0 -3.6 10.0 -2.9 13.3 0 C10.0 2.9 4.0 3.6 0 0Z"/><path transform="translate(247.0 42.0) rotate(-21)" d="M0 0 C4.6 -3.4 11.5 -2.7 15.3 0 C11.5 2.7 4.6 3.4 0 0Z"/><path transform="translate(93.0 46.8) rotate(143)" d="M0 0 C4.4 -4.0 11.1 -3.2 14.8 0 C11.1 3.2 4.4 4.0 0 0Z"/><path transform="translate(90.5 57.0) rotate(65)" d="M0 0 C5.4 -4.0 13.5 -3.2 18.0 0 C13.5 3.2 5.4 4.0 0 0Z"/><path transform="translate(88.7 67.7) rotate(135)" d="M0 0 C6.4 -4.0 16.0 -3.2 21.3 0 C16.0 3.2 6.4 4.0 0 0Z"/><path transform="translate(86.6 78.9) rotate(67)" d="M0 0 C4.4 -4.0 11.1 -3.2 14.8 0 C11.1 3.2 4.4 4.0 0 0Z"/><path transform="translate(83.4 90.4) rotate(145)" d="M0 0 C5.4 -4.0 13.5 -3.2 18.0 0 C13.5 3.2 5.4 4.0 0 0Z"/><path transform="translate(78.2 102.3) rotate(83)" d="M0 0 C6.4 -4.0 16.0 -3.2 21.3 0 C16.0 3.2 6.4 4.0 0 0Z"/><path transform="translate(72.0 112.0) rotate(127)" d="M0 0 C5.1 -3.8 12.8 -3.0 17.0 0 C12.8 3.0 5.1 3.8 0 0Z"/><path transform="translate(164.4 49.1) rotate(149)" d="M0 0 C4.0 -3.6 10.0 -2.9 13.3 0 C10.0 2.9 4.0 3.6 0 0Z"/><path transform="translate(159.3 59.8) rotate(83)" d="M0 0 C4.9 -3.6 12.2 -2.9 16.2 0 C12.2 2.9 4.9 3.6 0 0Z"/><path transform="translate(153.2 70.0) rotate(159)" d="M0 0 C5.7 -3.6 14.4 -2.9 19.1 0 C14.4 2.9 5.7 3.6 0 0Z"/><path transform="translate(145.8 80.2) rotate(93)" d="M0 0 C4.0 -3.6 10.0 -2.9 13.3 0 C10.0 2.9 4.0 3.6 0 0Z"/><path transform="translate(136.7 90.9) rotate(168)" d="M0 0 C4.9 -3.6 12.2 -2.9 16.2 0 C12.2 2.9 4.9 3.6 0 0Z"/><path transform="translate(128.0 100.0) rotate(135)" d="M0 0 C4.6 -3.4 11.5 -2.7 15.3 0 C11.5 2.7 4.6 3.4 0 0Z"/><path transform="translate(61.8 26.0) rotate(-36)" d="M0 0 C3.6 -3.2 8.9 -2.6 11.8 0 C8.9 2.6 3.6 3.2 0 0Z"/><path transform="translate(64.2 16.2) rotate(-113)" d="M0 0 C4.3 -3.2 10.8 -2.6 14.4 0 C10.8 2.6 4.3 3.2 0 0Z"/><path transform="translate(67.1 6.9) rotate(-29)" d="M0 0 C5.1 -3.2 12.8 -2.6 17.0 0 C12.8 2.6 5.1 3.2 0 0Z"/><path transform="translate(72.0 0.0) rotate(-45)" d="M0 0 C4.1 -3.0 10.2 -2.4 13.6 0 C10.2 2.4 4.1 3.0 0 0Z"/><path transform="translate(144.0 27.8) rotate(-28)" d="M0 0 C3.6 -3.2 8.9 -2.6 11.8 0 C8.9 2.6 3.6 3.2 0 0Z"/><path transform="translate(147.8 17.2) rotate(-110)" d="M0 0 C4.3 -3.2 10.8 -2.6 14.4 0 C10.8 2.6 4.3 3.2 0 0Z"/><path transform="translate(151.1 7.2) rotate(-30)" d="M0 0 C5.1 -3.2 12.8 -2.6 17.0 0 C12.8 2.6 5.1 3.2 0 0Z"/><path transform="translate(156.0 0.0) rotate(-45)" d="M0 0 C4.1 -3.0 10.2 -2.4 13.6 0 C10.2 2.4 4.1 3.0 0 0Z"/><path transform="translate(26.3 43.2) rotate(144)" d="M0 0 C4.0 -3.6 10.0 -2.9 13.3 0 C10.0 2.9 4.0 3.6 0 0Z"/><path transform="translate(24.3 52.2) rotate(64)" d="M0 0 C4.9 -3.6 12.2 -2.9 16.2 0 C12.2 2.9 4.9 3.6 0 0Z"/><path transform="translate(22.2 62.0) rotate(143)" d="M0 0 C5.7 -3.6 14.4 -2.9 19.1 0 C14.4 2.9 5.7 3.6 0 0Z"/><path transform="translate(16.8 73.4) rotate(88)" d="M0 0 C4.0 -3.6 10.0 -2.9 13.3 0 C10.0 2.9 4.0 3.6 0 0Z"/><path transform="translate(8.0 84.0) rotate(135)" d="M0 0 C4.6 -3.4 11.5 -2.7 15.3 0 C11.5 2.7 4.6 3.4 0 0Z"/><path transform="translate(203.8 54.0) rotate(124)" d="M0 0 C3.6 -3.2 8.9 -2.6 11.8 0 C8.9 2.6 3.6 3.2 0 0Z"/><path transform="translate(205.9 63.5) rotate(33)" d="M0 0 C4.3 -3.2 10.8 -2.6 14.4 0 C10.8 2.6 4.3 3.2 0 0Z"/><path transform="translate(210.9 73.0) rotate(93)" d="M0 0 C5.1 -3.2 12.8 -2.6 17.0 0 C12.8 2.6 5.1 3.2 0 0Z"/><path transform="translate(217.8 83.1) rotate(19)" d="M0 0 C3.6 -3.2 8.9 -2.6 11.8 0 C8.9 2.6 3.6 3.2 0 0Z"/><path transform="translate(224.0 92.0) rotate(56)" d="M0 0 C4.1 -3.0 10.2 -2.4 13.6 0 C10.2 2.4 4.1 3.0 0 0Z"/><path transform="translate(108.9 45.2) rotate(54)" d="M0 0 C3.6 -3.2 8.9 -2.6 11.8 0 C8.9 2.6 3.6 3.2 0 0Z"/><path transform="translate(125.4 49.8) rotate(-21)" d="M0 0 C4.3 -3.2 10.8 -2.6 14.4 0 C10.8 2.6 4.3 3.2 0 0Z"/><path transform="translate(140.6 54.5) rotate(56)" d="M0 0 C5.1 -3.2 12.8 -2.6 17.0 0 C12.8 2.6 5.1 3.2 0 0Z"/><path transform="translate(153.1 61.4) rotate(4)" d="M0 0 C3.6 -3.2 8.9 -2.6 11.8 0 C8.9 2.6 3.6 3.2 0 0Z"/><path transform="translate(160.0 70.0) rotate(63)" d="M0 0 C4.1 -3.0 10.2 -2.4 13.6 0 C10.2 2.4 4.1 3.0 0 0Z"/><path transform="translate(15.9 30.2) rotate(-88)" d="M0 0 C3.6 -3.2 8.9 -2.6 11.8 0 C8.9 2.6 3.6 3.2 0 0Z"/><path transform="translate(8.7 20.5) rotate(-169)" d="M0 0 C4.3 -3.2 10.8 -2.6 14.4 0 C10.8 2.6 4.3 3.2 0 0Z"/><path transform="translate(0.0 14.0) rotate(-153)" d="M0 0 C4.1 -3.0 10.2 -2.4 13.6 0 C10.2 2.4 4.1 3.0 0 0Z"/><path transform="translate(113.1 28.7) rotate(-46)" d="M0 0 C3.6 -3.2 8.9 -2.6 11.8 0 C8.9 2.6 3.6 3.2 0 0Z"/><path transform="translate(113.8 17.5) rotate(-123)" d="M0 0 C4.3 -3.2 10.8 -2.6 14.4 0 C10.8 2.6 4.3 3.2 0 0Z"/><path transform="translate(115.8 7.2) rotate(-29)" d="M0 0 C5.1 -3.2 12.8 -2.6 17.0 0 C12.8 2.6 5.1 3.2 0 0Z"/><path transform="translate(122.0 0.0) rotate(-36)" d="M0 0 C4.1 -3.0 10.2 -2.4 13.6 0 C10.2 2.4 4.1 3.0 0 0Z"/><path transform="translate(188.1 33.7) rotate(-51)" d="M0 0 C3.6 -3.2 8.9 -2.6 11.8 0 C8.9 2.6 3.6 3.2 0 0Z"/><path transform="translate(188.0 22.8) rotate(-126)" d="M0 0 C4.3 -3.2 10.8 -2.6 14.4 0 C10.8 2.6 4.3 3.2 0 0Z"/><path transform="translate(189.8 11.3) rotate(-34)" d="M0 0 C5.1 -3.2 12.8 -2.6 17.0 0 C12.8 2.6 5.1 3.2 0 0Z"/><path transform="translate(196.0 2.0) rotate(-45)" d="M0 0 C4.1 -3.0 10.2 -2.4 13.6 0 C10.2 2.4 4.1 3.0 0 0Z"/><path transform="translate(230.3 38.9) rotate(-10)" d="M0 0 C3.6 -3.2 8.9 -2.6 11.8 0 C8.9 2.6 3.6 3.2 0 0Z"/><path transform="translate(239.7 29.4) rotate(-80)" d="M0 0 C4.3 -3.2 10.8 -2.6 14.4 0 C10.8 2.6 4.3 3.2 0 0Z"/><path transform="translate(248.0 22.0) rotate(-39)" d="M0 0 C4.1 -3.0 10.2 -2.4 13.6 0 C10.2 2.4 4.1 3.0 0 0Z"/><path transform="translate(49.5 66.1) rotate(132)" d="M0 0 C4.0 -3.6 10.0 -2.9 13.3 0 C10.0 2.9 4.0 3.6 0 0Z"/><path transform="translate(49.2 78.0) rotate(53)" d="M0 0 C4.9 -3.6 12.2 -2.9 16.2 0 C12.2 2.9 4.9 3.6 0 0Z"/><path transform="translate(48.8 89.4) rotate(134)" d="M0 0 C5.7 -3.6 14.4 -2.9 19.1 0 C14.4 2.9 5.7 3.6 0 0Z"/><path transform="translate(44.5 100.8) rotate(87)" d="M0 0 C4.0 -3.6 10.0 -2.9 13.3 0 C10.0 2.9 4.0 3.6 0 0Z"/><path transform="translate(36.0 110.0) rotate(141)" d="M0 0 C4.6 -3.4 11.5 -2.7 15.3 0 C11.5 2.7 4.6 3.4 0 0Z"/><path transform="translate(118.3 74.4) rotate(141)" d="M0 0 C4.0 -3.6 10.0 -2.9 13.3 0 C10.0 2.9 4.0 3.6 0 0Z"/><path transform="translate(116.5 84.9) rotate(61)" d="M0 0 C4.9 -3.6 12.2 -2.9 16.2 0 C12.2 2.9 4.9 3.6 0 0Z"/><path transform="translate(114.7 95.7) rotate(140)" d="M0 0 C5.7 -3.6 14.4 -2.9 19.1 0 C14.4 2.9 5.7 3.6 0 0Z"/><path transform="translate(110.0 106.8) rotate(87)" d="M0 0 C4.0 -3.6 10.0 -2.9 13.3 0 C10.0 2.9 4.0 3.6 0 0Z"/><path transform="translate(102.0 116.0) rotate(138)" d="M0 0 C4.6 -3.4 11.5 -2.7 15.3 0 C11.5 2.7 4.6 3.4 0 0Z"/><path transform="translate(182.4 63.3) rotate(143)" d="M0 0 C3.6 -3.2 8.9 -2.6 11.8 0 C8.9 2.6 3.6 3.2 0 0Z"/><path transform="translate(180.8 72.8) rotate(59)" d="M0 0 C4.3 -3.2 10.8 -2.6 14.4 0 C10.8 2.6 4.3 3.2 0 0Z"/><path transform="translate(180.0 82.9) rotate(132)" d="M0 0 C5.1 -3.2 12.8 -2.6 17.0 0 C12.8 2.6 5.1 3.2 0 0Z"/><path transform="translate(177.4 94.1) rotate(76)" d="M0 0 C3.6 -3.2 8.9 -2.6 11.8 0 C8.9 2.6 3.6 3.2 0 0Z"/><path transform="translate(172.0 104.0) rotate(125)" d="M0 0 C4.1 -3.0 10.2 -2.4 13.6 0 C10.2 2.4 4.1 3.0 0 0Z"/><path transform="translate(46.1 87.9) rotate(50)" d="M0 0 C3.6 -3.2 8.9 -2.6 11.8 0 C8.9 2.6 3.6 3.2 0 0Z"/><path transform="translate(60.0 91.0) rotate(-22)" d="M0 0 C4.3 -3.2 10.8 -2.6 14.4 0 C10.8 2.6 4.3 3.2 0 0Z"/><path transform="translate(73.9 95.9) rotate(64)" d="M0 0 C5.1 -3.2 12.8 -2.6 17.0 0 C12.8 2.6 5.1 3.2 0 0Z"/><path transform="translate(84.0 104.0) rotate(49)" d="M0 0 C4.1 -3.0 10.2 -2.4 13.6 0 C10.2 2.4 4.1 3.0 0 0Z"/></g><g fill="#fbe4dc" fill-opacity="0.55" stroke="#fbe4dc" stroke-width="0.7"><circle cx="16.8" cy="11.5" r="10.5"/><circle cx="19" cy="67" r="11.6"/><circle cx="65.7" cy="59" r="9.8"/><circle cx="105" cy="94" r="9.8"/><circle cx="113" cy="14" r="9.3"/><circle cx="169" cy="24" r="8.8"/><circle cx="206.5" cy="15" r="11.6"/><circle cx="139" cy="83.6" r="8.8"/><circle cx="192" cy="88" r="11.2"/></g><path d="M9.7 19.1L7.2 15.6 M12.8 20.7L6.8 12.1 M15.1 21.0L7.3 9.8 M17.1 20.8L8.1 8.0 M18.9 20.4L9.2 6.5 M20.5 19.7L10.4 5.3 M21.9 18.8L11.7 4.2 M23.2 17.7L13.1 3.3 M24.4 16.5L14.7 2.6 M25.5 15.0L16.5 2.2 M26.3 13.2L18.5 2.0 M26.8 10.9L20.8 2.3 M26.4 7.4L23.9 3.9 M8.6 71.3L9.0 62.0 M10.3 73.4L10.7 60.0 M11.9 74.7L12.5 58.8 M13.6 75.7L14.2 58.0 M15.3 76.3L15.9 57.5 M17.0 76.7L17.6 57.2 M18.7 76.9L19.3 57.1 M20.4 76.8L21.0 57.3 M22.1 76.5L22.7 57.7 M23.8 76.0L24.4 58.3 M25.5 75.2L26.1 59.3 M27.3 74.0L27.7 60.6 M29.0 72.0L29.4 62.7 M59.3 65.9L56.3 58.2 M61.5 67.0L57.2 55.8 M63.5 67.5L58.4 54.2 M65.3 67.5L59.7 52.9 M67.1 67.3L61.2 52.0 M68.7 66.8L62.7 51.2 M70.2 66.0L64.3 50.7 M71.7 65.1L66.1 50.5 M73.0 63.8L67.9 50.5 M74.2 62.2L69.9 51.0 M75.1 59.8L72.1 52.1 M95.7 95.6L98.0 87.7 M96.8 97.9L100.1 86.4 M98.1 99.4L102.1 85.8 M99.6 100.6L103.9 85.6 M101.1 101.4L105.6 85.6 M102.7 102.0L107.3 86.0 M104.4 102.4L108.9 86.6 M106.1 102.4L110.4 87.4 M107.9 102.2L111.9 88.6 M109.9 101.6L113.2 90.1 M112.0 100.3L114.3 92.4 M105.0 18.2L104.2 11.9 M106.9 20.2L105.6 9.5 M108.7 21.2L107.1 8.1 M110.5 21.7L108.7 7.1 M112.3 21.9L110.4 6.5 M114.0 21.8L112.0 6.2 M115.6 21.5L113.7 6.1 M117.3 20.9L115.5 6.3 M118.9 19.9L117.3 6.8 M120.4 18.5L119.1 7.8 M121.8 16.1L121.0 9.8 M162.6 29.9L160.7 26.6 M165.5 31.5L160.7 23.3 M167.6 31.8L161.5 21.3 M169.5 31.7L162.6 19.7 M171.2 31.2L163.9 18.5 M172.7 30.5L165.3 17.5 M174.1 29.5L166.8 16.8 M175.4 28.3L168.5 16.3 M176.5 26.7L170.4 16.2 M177.3 24.7L172.5 16.5 M177.3 21.4L175.4 18.1 M195.8 18.4L196.9 9.1 M197.2 20.6L198.9 7.3 M198.8 22.1L200.7 6.2 M200.4 23.2L202.5 5.6 M202.0 23.9L204.3 5.2 M203.6 24.5L206.0 5.1 M205.3 24.8L207.7 5.2 M207.0 24.9L209.4 5.5 M208.7 24.8L211.0 6.1 M210.5 24.4L212.6 6.8 M212.3 23.8L214.2 7.9 M214.1 22.7L215.8 9.4 M216.1 20.9L217.2 11.6 M131.4 87.8L130.3 84.1 M133.8 90.0L131.2 80.9 M135.8 90.9L132.4 79.1 M137.6 91.2L133.8 77.9 M139.4 91.1L135.3 77.0 M141.1 90.8L136.9 76.4 M142.7 90.2L138.6 76.1 M144.2 89.3L140.4 76.0 M145.6 88.1L142.2 76.3 M146.8 86.3L144.2 77.2 M147.7 83.1L146.6 79.4 M181.1 88.0L183.9 80.7 M181.8 90.7L186.3 79.2 M182.9 92.6L188.4 78.5 M184.2 94.1L190.3 78.3 M185.6 95.2L192.1 78.3 M187.0 96.2L193.8 78.6 M188.6 96.9L195.4 79.1 M190.2 97.4L197.0 79.8 M191.9 97.7L198.4 80.8 M193.7 97.7L199.8 81.9 M195.6 97.5L201.1 83.4 M197.7 96.8L202.2 85.3 M200.1 95.3L202.9 88.0" stroke="#fbe4dc" stroke-width="0.8" fill="none"/></g><clipPath id="tbclip"><path d="M160 105 L137 256 L338.5 286 L338.5 133 Z"/></clipPath></defs><use href="#fl2" transform="translate(0 0)"/><g clip-path="url(#tbclip)"><rect x="120" y="100" width="220" height="100" fill="#f9d0c8" opacity="0.55"/><use href="#fl2" transform="translate(168 135) rotate(8.6) scale(1.02)" opacity="0.55"/></g></svg>
<div class="a" style="left:801.2px;top:293.8px;width:1.6px;height:341px;background:rgba(70,205,205,0.5);"></div>
<div class="a" style="left:832.2px;top:293.8px;width:1.8px;height:341px;background:rgba(70,205,205,0.5);"></div>
<div class="a" style="left:1166px;top:293.8px;width:1.8px;height:52px;background:rgba(70,205,205,0.5);"></div>
<div class="a" style="left:1167.2px;top:530.5px;width:4.3px;height:104.3px;background:#d4f3f1;"></div>
<div class="a" style="left:794.8px;top:334.6px;width:509.7px;height:2.2px;background:rgba(70,205,205,0.42);"></div>
<svg class="a" style="left:742px;top:230px;" width="740" height="416" viewBox="0 0 740 416"><path d="M251 206 L228 357 L491 396.3 L500.5 337" stroke="#5d7fd6" stroke-width="0.9" fill="none"/><path d="M251 206 L428 233" stroke="#5d7fd6" stroke-width="0.9" fill="none"/><rect x="248.3" y="203.3" width="5.4" height="5.4" fill="#fff" stroke="#5d7fd6" stroke-width="0.9"/><rect x="380.3" y="223.3" width="5.4" height="5.4" fill="#fff" stroke="#5d7fd6" stroke-width="0.9"/><rect x="236.60000000000002" y="278.8" width="5.4" height="5.4" fill="#fff" stroke="#5d7fd6" stroke-width="0.9"/><rect x="225.3" y="354.3" width="5.4" height="5.4" fill="#fff" stroke="#5d7fd6" stroke-width="0.9"/><rect x="356.8" y="374.1" width="5.4" height="5.4" fill="#fff" stroke="#5d7fd6" stroke-width="0.9"/><rect x="488.3" y="393.6" width="5.4" height="5.4" fill="#fff" stroke="#5d7fd6" stroke-width="0.9"/><circle cx="372" cy="301" r="2.6" stroke="#222" stroke-width="0.9" fill="none"/><path d="M372 296 L372 306 M367 301 L377 301" stroke="#222" stroke-width="0.9"/></svg>
<div class="a" style="left:965px;top:571.6px;width:24.7px;height:11.4px;background:#2f2f2f;border-radius:2px;border:1px solid #555"></div>
<div class="t" style="left:975px;top:574.4px;font-size:5.6px;line-height:7.8px;color:#f0f0f0;font-weight:bold">0.7°</div>
<svg class="a" style="left:949.5px;top:586.5px;" width="10" height="10" viewBox="0 0 10 10"><path d="M1.5 1.5 C2 6 4.5 8 8.5 8.3" stroke="#222" stroke-width="1.6" fill="none"/><path d="M0 3 L1.4 0 L3.4 2.6 Z M7 6.2 L10 8.4 L7 10 Z" fill="#222"/></svg>
<div class="a" style="left:954.8px;top:596.8px;width:32.4px;height:32.4px;background:transparent;border-radius:50%;border:4.6px solid #f1614f;box-shadow:0 0 1.5px #f1614f, inset 0 0 1.5px #f1614f"></div>
<div class="a" style="left:1304.5px;top:282.8px;width:11.5px;height:352px;background:#2c2c2c;"></div>
<svg class="a" style="left:1307px;top:287.5px;" width="6" height="4" viewBox="0 0 6 4"><path d="M0.7 3.3 L3 1 L5.3 3.3" stroke="#888" stroke-width="0.8" fill="none"/></svg>
<svg class="a" style="left:1307px;top:627.5px;" width="6" height="4" viewBox="0 0 6 4"><path d="M0.7 0.7 L3 3 L5.3 0.7" stroke="#888" stroke-width="0.8" fill="none"/></svg>
<div class="a" style="left:785px;top:634.8px;width:531px;height:10.5px;background:#2c2c2c;"></div>
<div class="t" style="left:787.5px;top:636.7px;font-size:6.3px;line-height:8.8px;color:#c8c8c8;">44.29%</div>
<div class="t" style="left:836px;top:636.7px;font-size:6.3px;line-height:8.8px;color:#b0b0b0;letter-spacing:-0.1px">文档:12.4M/6.75M</div>
<svg class="a" style="left:914px;top:637.7px;" width="3.5" height="5" viewBox="0 0 3.5 5"><path d="M0.5 0.5 L2.8 2.5 L0.5 4.5" stroke="#999" stroke-width="0.8" fill="none"/></svg>
<svg class="a" style="left:924px;top:637.7px;" width="3.5" height="5" viewBox="0 0 3.5 5"><path d="M2.8 0.5 L0.5 2.5 L2.8 4.5" stroke="#999" stroke-width="0.8" fill="none"/></svg>
<div class="a" style="left:930px;top:636px;width:374px;height:8.5px;background:#262626;"></div>
<div class="a" style="left:1108px;top:636px;width:115px;height:8.5px;background:#3e3e3e;"></div>
<svg class="a" style="left:1297.5px;top:637.7px;" width="3.5" height="5" viewBox="0 0 3.5 5"><path d="M0.5 0.5 L2.8 2.5 L0.5 4.5" stroke="#999" stroke-width="0.8" fill="none"/></svg>
<div class="a" style="left:1168.5px;top:344.8px;width:147px;height:221.5px;background:#1d1d1d;"></div>
<div class="a" style="left:1169.5px;top:345.7px;width:145px;height:217.5px;background:#2f2f2f;"></div>
<div class="a" style="left:1169.5px;top:345.7px;width:145px;height:16.3px;background:#262626;"></div>
<div class="a" style="left:1169.5px;top:345.7px;width:24px;height:16.6px;background:#2f2f2f;"></div>
<div class="t" style="left:1174.8px;top:350.0px;font-size:7px;line-height:9.8px;color:#e6e6e6;font-weight:bold">属性</div>
<svg class="a" style="left:1291.5px;top:351.8px;" width="6" height="5" viewBox="0 0 6 5"><path d="M0.5 0.5 L2.5 2.5 L0.5 4.5 M3.2 0.5 L5.2 2.5 L3.2 4.5" stroke="#999" stroke-width="0.8" fill="none"/></svg>
<div class="a" style="left:1301.3px;top:350.5px;width:0.8px;height:7.5px;background:#6a6a6a;"></div>
<div class="a" style="left:1305.5px;top:351.8px;width:5.5px;height:1.1px;background:#808080;"></div>
<div class="a" style="left:1305.5px;top:353.7px;width:5.5px;height:1.1px;background:#808080;"></div>
<div class="a" style="left:1305.5px;top:355.6px;width:5.5px;height:1.1px;background:#808080;"></div>
<div class="a" style="left:1177px;top:367px;width:11.3px;height:11.3px;background:#1c1c1c;"></div>
<svg class="a" style="left:1178.8px;top:369.2px;" width="8" height="7" viewBox="0 0 8 7"><rect x="0.5" y="0.5" width="7" height="6" stroke="#e0e0e0" stroke-width="0.9" fill="none"/><path d="M1 6 L3 3.3 L4.3 4.8 L5.3 4 L7 6 Z" fill="#e0e0e0"/></svg>
<div class="t" style="left:1193px;top:369.1px;font-size:6.8px;line-height:9.5px;color:#6e6e6e;">像素图层</div>
<svg class="a" style="left:1173.5px;top:389.3px;" width="5.5" height="4" viewBox="0 0 5.5 4"><path d="M0.5 0.6 L2.7 2.8 L4.9 0.6" stroke="#999" stroke-width="0.9" fill="none"/></svg>
<div class="t" style="left:1182.6px;top:387.0px;font-size:7px;line-height:9.8px;color:#f0f0f0;font-weight:bold">变换</div>
<div class="a" style="left:1175px;top:411px;width:13.3px;height:12.6px;background:#1c1c1c;"></div>
<svg class="a" style="left:1179.6px;top:412.7px;" width="4.5" height="9.5" viewBox="0 0 4.5 9.5"><rect x="1" y="0.6" width="2.5" height="3.6" rx="1.2" stroke="#ddd" stroke-width="0.8" fill="none"/><rect x="1" y="5.3" width="2.5" height="3.6" rx="1.2" stroke="#ddd" stroke-width="0.8" fill="none"/><path d="M2.25 2.8 L2.25 6.8" stroke="#ddd" stroke-width="0.8"/></svg>
<div class="t" style="left:1195.5px;top:405.2px;font-size:6.7px;line-height:9.4px;color:#5a5a5a;">W</div>
<div class="a" style="left:1205px;top:403.7px;width:32px;height:10.6px;background:#2a2a2a;border:1px solid #3c3c3c"></div>
<div class="t" style="left:1207px;top:405.4px;font-size:6.6px;line-height:9.2px;color:#5e5e5e;letter-spacing:-0.1px">17.56 厘米</div>
<div class="t" style="left:1245px;top:405.2px;font-size:6.7px;line-height:9.4px;color:#5a5a5a;">X</div>
<div class="a" style="left:1251.7px;top:403.7px;width:32px;height:10.6px;background:#2a2a2a;border:1px solid #3c3c3c"></div>
<div class="t" style="left:1253.7px;top:405.4px;font-size:6.6px;line-height:9.2px;color:#5e5e5e;letter-spacing:-0.1px">34.02 厘米</div>
<div class="t" style="left:1196.5px;top:422.2px;font-size:6.7px;line-height:9.4px;color:#5a5a5a;">H</div>
<div class="a" style="left:1205px;top:420.7px;width:32px;height:10.6px;background:#2a2a2a;border:1px solid #3c3c3c"></div>
<div class="t" style="left:1207px;top:422.4px;font-size:6.6px;line-height:9.2px;color:#5e5e5e;letter-spacing:-0.1px">10.06 厘米</div>
<div class="t" style="left:1245px;top:422.2px;font-size:6.7px;line-height:9.4px;color:#5a5a5a;">Y</div>
<div class="a" style="left:1251.7px;top:420.7px;width:32px;height:10.6px;background:#2a2a2a;border:1px solid #3c3c3c"></div>
<div class="t" style="left:1253.7px;top:422.4px;font-size:6.6px;line-height:9.2px;color:#5e5e5e;letter-spacing:-0.1px">0.14 厘米</div>
<svg class="a" style="left:1193.5px;top:440px;" width="8.5" height="7" viewBox="0 0 8.5 7"><path d="M0.7 6.2 L7.8 6.2 M0.7 6.2 L5.8 0.8" stroke="#aaa" stroke-width="0.9" fill="none"/></svg>
<div class="a" style="left:1205px;top:438.4px;width:24px;height:10.6px;background:#2a2a2a;border:1px solid #3c3c3c"></div>
<div class="t" style="left:1207px;top:440.1px;font-size:6.6px;line-height:9.2px;color:#5e5e5e;letter-spacing:-0.1px">0.00°</div>
<div class="a" style="left:1230px;top:438.4px;width:8px;height:10.6px;background:#2a2a2a;border:1px solid #3c3c3c"></div>
<svg class="a" style="left:1231.4px;top:442.2px;" width="5.5" height="4" viewBox="0 0 5.5 4"><path d="M0.5 0.6 L2.7 2.8 L4.9 0.6" stroke="#999" stroke-width="0.9" fill="none"/></svg>
<svg class="a" style="left:1255.5px;top:439.2px;" width="10" height="9" viewBox="0 0 10 9"><path d="M5 0 L5 9" stroke="#ddd" stroke-width="0.8"/><path d="M0.6 1.5 L3.6 4.5 L0.6 7.5 Z" stroke="#ddd" stroke-width="0.8" fill="none"/><path d="M9.4 1.5 L6.4 4.5 L9.4 7.5 Z" fill="#ddd"/></svg>
<svg class="a" style="left:1272.5px;top:438.7px;" width="9" height="10" viewBox="0 0 9 10"><path d="M0 5 L9 5" stroke="#ddd" stroke-width="0.8"/><path d="M1.5 0.6 L4.5 3.6 L7.5 0.6 Z" stroke="#ddd" stroke-width="0.8" fill="none"/><path d="M1.5 9.4 L4.5 6.4 L7.5 9.4 Z" fill="#ddd"/></svg>
<div class="a" style="left:1169.5px;top:457.8px;width:138px;height:0.8px;background:#262626;"></div>
<svg class="a" style="left:1173.5px;top:464.7px;" width="5.5" height="4" viewBox="0 0 5.5 4"><path d="M0.5 0.6 L2.7 2.8 L4.9 0.6" stroke="#999" stroke-width="0.9" fill="none"/></svg>
<div class="t" style="left:1183.3px;top:462.4px;font-size:7px;line-height:9.8px;color:#f0f0f0;font-weight:bold">对齐并分布</div>
<div class="t" style="left:1175px;top:478.9px;font-size:6.7px;line-height:9.4px;color:#5a5a5a;">对齐:</div>
<div class="a" style="left:1178.3px;top:494.5px;width:0.9px;height:8px;background:#a8a8a8;"></div>
<div class="a" style="left:1179.6px;top:495.9px;width:3.6px;height:2px;background:#a8a8a8;"></div>
<div class="a" style="left:1179.6px;top:499.1px;width:6px;height:2px;background:#a8a8a8;"></div>
<div class="a" style="left:1198.55px;top:494.5px;width:0.9px;height:8px;background:#a8a8a8;"></div>
<div class="a" style="left:1197.2px;top:495.9px;width:3.6px;height:2px;background:#a8a8a8;"></div>
<div class="a" style="left:1196px;top:499.1px;width:6px;height:2px;background:#a8a8a8;"></div>
<div class="a" style="left:1218.2px;top:494.5px;width:0.9px;height:8px;background:#a8a8a8;"></div>
<div class="a" style="left:1214.2px;top:495.9px;width:3.6px;height:2px;background:#a8a8a8;"></div>
<div class="a" style="left:1211.8000000000002px;top:499.1px;width:6px;height:2px;background:#a8a8a8;"></div>
<div class="a" style="left:1238.3px;top:494.5px;width:8px;height:0.9px;background:#a8a8a8;"></div>
<div class="a" style="left:1239.7px;top:495.8px;width:2px;height:6px;background:#a8a8a8;"></div>
<div class="a" style="left:1242.8999999999999px;top:495.8px;width:2px;height:3.6px;background:#a8a8a8;"></div>
<div class="a" style="left:1255px;top:498.1px;width:8px;height:0.9px;background:#a8a8a8;"></div>
<div class="a" style="left:1256.4px;top:495.5px;width:2px;height:6px;background:#a8a8a8;"></div>
<div class="a" style="left:1259.6px;top:496.7px;width:2px;height:3.6px;background:#a8a8a8;"></div>
<div class="a" style="left:1271.7px;top:501.6px;width:8px;height:0.9px;background:#a8a8a8;"></div>
<div class="a" style="left:1273.1000000000001px;top:495.4px;width:2px;height:6px;background:#a8a8a8;"></div>
<div class="a" style="left:1276.3px;top:497.8px;width:2px;height:3.6px;background:#a8a8a8;"></div>
<div class="a" style="left:1274.0px;top:515.3px;width:1.5px;height:1.5px;background:#b8b8b8;border-radius:50%"></div>
<div class="a" style="left:1276.8px;top:515.3px;width:1.5px;height:1.5px;background:#b8b8b8;border-radius:50%"></div>
<div class="a" style="left:1279.6px;top:515.3px;width:1.5px;height:1.5px;background:#b8b8b8;border-radius:50%"></div>
<div class="a" style="left:1169.5px;top:524px;width:138px;height:0.8px;background:#262626;"></div>
<svg class="a" style="left:1173.5px;top:531.7px;" width="5.5" height="4" viewBox="0 0 5.5 4"><path d="M0.5 0.6 L2.7 2.8 L4.9 0.6" stroke="#999" stroke-width="0.9" fill="none"/></svg>
<div class="t" style="left:1183.3px;top:529.4px;font-size:7px;line-height:9.8px;color:#f0f0f0;font-weight:bold">快速操作</div>
<div class="a" style="left:1307.5px;top:380px;width:7px;height:166px;background:#292929;"></div>
<div class="a" style="left:1308.3px;top:393px;width:5.7px;height:114.5px;background:#454545;"></div>
<svg class="a" style="left:1308.3px;top:385px;" width="5.5" height="4" viewBox="0 0 5.5 4"><path d="M0.5 3.3 L2.7 1 L4.9 3.3" stroke="#888" stroke-width="0.8" fill="none"/></svg>
<svg class="a" style="left:1308.3px;top:539.5px;" width="5.5" height="4" viewBox="0 0 5.5 4"><path d="M0.5 0.6 L2.7 2.8 L4.9 0.6" stroke="#999" stroke-width="0.9" fill="none"/></svg>
<div class="a" style="left:1171.8px;top:566.3px;width:132.7px;height:68.5px;background:#191919;"></div>
<svg class="a" style="left:742px;top:230px;" width="740" height="416" viewBox="0 0 740 416"><path d="M429.5 387.1 L491 396.3 L500.5 337" stroke="#5d7fd6" stroke-width="0.9" fill="none"/><rect x="488.3" y="393.6" width="5.4" height="5.4" fill="#fff" stroke="#5d7fd6" stroke-width="0.9"/></svg>
<div class="a" style="left:1316px;top:267.3px;width:21.5px;height:378px;background:#2f2f2f;"></div>
<div class="a" style="left:1316px;top:267.3px;width:166px;height:7.2px;background:#262626;"></div>
<svg class="a" style="left:1329px;top:269.2px;" width="5" height="4" viewBox="0 0 5 4"><path d="M2 0.5 L0.5 2 L2 3.5 M4.3 0.5 L2.8 2 L4.3 3.5" stroke="#bbb" stroke-width="0.7" fill="none"/></svg>
<svg class="a" style="left:1474px;top:269.2px;" width="5" height="4" viewBox="0 0 5 4"><path d="M0.5 0.5 L2 2 L0.5 3.5 M2.8 0.5 L4.3 2 L2.8 3.5" stroke="#bbb" stroke-width="0.7" fill="none"/></svg>
<div class="a" style="left:1337.5px;top:267.3px;width:2.5px;height:378px;background:#1f1f1f;"></div>
<div class="a" style="left:1318px;top:298.5px;width:18px;height:0.8px;background:#3a3a3a;"></div>
<div class="a" style="left:1318px;top:322.5px;width:18px;height:0.8px;background:#3a3a3a;"></div>
<div class="a" style="left:1318px;top:346.5px;width:18px;height:0.8px;background:#3a3a3a;"></div>
<div class="a" style="left:1318px;top:370px;width:18px;height:0.8px;background:#3a3a3a;"></div>
<div class="a" style="left:1318px;top:394.5px;width:18px;height:0.8px;background:#3a3a3a;"></div>
<div class="a" style="left:1318px;top:418px;width:18px;height:0.8px;background:#3a3a3a;"></div>
<div class="a" style="left:1318px;top:441.5px;width:18px;height:0.8px;background:#3a3a3a;"></div>
<div class="a" style="left:1318px;top:465.5px;width:18px;height:0.8px;background:#3a3a3a;"></div>
<svg class="a" style="left:1320.5px;top:280.5px;" width="12" height="12" viewBox="0 0 12 12"><path d="M11 0.8 C8.5 2.5 6 5 5 7 L6.3 8.2 C8.2 6.8 10.2 4 11 0.8 Z" fill="#e0e0e0"/><path d="M4.5 7.6 C3.2 7.8 2.8 8.8 2.7 9.8 C2.6 10.5 2 11 1.3 11.2 C3.2 11.7 5.4 11 5.7 8.8 Z" fill="#e0e0e0"/><path d="M1 1 L1 4.5 M2.8 1 L2.8 3.5" stroke="#e0e0e0" stroke-width="0.9"/></svg>
<svg class="a" style="left:1321.5px;top:304.5px;" width="10" height="11" viewBox="0 0 10 11"><path d="M4.5 0.8 L9 0.8 M6 0.8 L6 10.5 M8.2 0.8 L8.2 10.5" stroke="#e0e0e0" stroke-width="1.2"/><path d="M4.8 0.8 A2.8 2.8 0 0 0 4.8 6.4 L6 6.4 L6 0.8 Z" fill="#e0e0e0"/></svg>
<svg class="a" style="left:1320.5px;top:327.5px;" width="12" height="13" viewBox="0 0 12 13"><rect x="1" y="1.5" width="3" height="2.6" stroke="#e0e0e0" stroke-width="0.8" fill="none"/><rect x="1" y="5" width="3" height="2.6" stroke="#e0e0e0" stroke-width="0.8" fill="none"/><rect x="0.7" y="8.6" width="3.6" height="3.2" fill="#e0e0e0"/><path d="M6 1.5 C9.5 1.5 10.5 4.5 9.8 7 C9.3 8.8 8 10 6.8 10.8" stroke="#e0e0e0" stroke-width="1.3" fill="none"/><path d="M5.2 0 L8.2 1.2 L5.8 3.5 Z" fill="#e0e0e0"/></svg>
<div class="a" style="left:1319px;top:352.6px;width:15.7px;height:12px;background:#1c1c1c;"></div>
<svg class="a" style="left:1321.3px;top:353.6px;" width="11" height="10" viewBox="0 0 11 10"><path d="M0.5 2 L10.5 2 M0.5 5 L10.5 5 M0.5 8 L10.5 8" stroke="#e0e0e0" stroke-width="0.9"/><circle cx="7" cy="2" r="1.4" fill="#e0e0e0"/><circle cx="3.8" cy="5" r="1.4" fill="#e0e0e0"/><circle cx="6.5" cy="8" r="1.4" fill="#e0e0e0"/></svg>
<div class="t" style="left:1320.7px;top:375.8px;font-size:11px;line-height:15.4px;color:#e0e0e0;letter-spacing:-0.5px">A</div>
<div class="a" style="left:1331.2px;top:377.7px;width:1px;height:9.5px;background:#e0e0e0;"></div>
<svg class="a" style="left:1320.5px;top:399.5px;" width="13" height="12" viewBox="0 0 13 12"><circle cx="6.5" cy="4" r="3" stroke="#e0e0e0" stroke-width="1.4" fill="none"/><circle cx="4" cy="8" r="3" stroke="#e0e0e0" stroke-width="1.4" fill="none"/><circle cx="9" cy="8" r="3" stroke="#e0e0e0" stroke-width="1.4" fill="none"/></svg>
<svg class="a" style="left:1320.5px;top:424px;" width="13" height="11" viewBox="0 0 13 11"><path d="M2 2 L11 2 M2 2 C2 5 3.5 7 2.5 10 M11 2 C11 5 9.5 7 10.5 10" stroke="#e0e0e0" stroke-width="1.1" fill="none"/><rect x="0.5" y="0.7" width="2.6" height="2.6" fill="#e0e0e0"/><rect x="9.9" y="0.7" width="2.6" height="2.6" fill="#e0e0e0"/><circle cx="6.5" cy="2" r="1.2" fill="#e0e0e0"/></svg>
<svg class="a" style="left:1320.5px;top:447.5px;" width="13" height="12" viewBox="0 0 13 12"><path d="M6.5 1 A5.5 5 0 1 0 12 6 C12 7.6 10.5 7.8 9.5 7.5 C8 7 7.2 8.5 8 9.5 C8.6 10.3 8 11 6.5 11" stroke="#e0e0e0" stroke-width="1.1" fill="#e0e0e0" fill-opacity="0.85"/><circle cx="4" cy="4.5" r="0.9" fill="#2f2f2f"/><circle cx="7" cy="3.3" r="0.9" fill="#2f2f2f"/><circle cx="9.6" cy="5" r="0.9" fill="#2f2f2f"/><circle cx="3.6" cy="7.6" r="0.9" fill="#2f2f2f"/></svg>
<div class="a" style="left:1340px;top:274.5px;width:142px;height:370.8px;background:#2d2d2d;"></div>
<div class="a" style="left:1340px;top:343px;width:131.5px;height:288px;background:#292929;"></div>
<div class="a" style="left:1340px;top:274.5px;width:142px;height:13.3px;background:#262626;"></div>
<div class="a" style="left:1340px;top:274.5px;width:24.5px;height:13.5px;background:#2d2d2d;"></div>
<div class="t" style="left:1343.5px;top:277.3px;font-size:7px;line-height:9.8px;color:#e6e6e6;font-weight:bold">图层</div>
<div class="t" style="left:1367px;top:277.5px;font-size:6.7px;line-height:9.4px;color:#6c6c6c;">调整</div>
<div class="a" style="left:1472.5px;top:279.0px;width:5.5px;height:1.1px;background:#808080;"></div>
<div class="a" style="left:1472.5px;top:280.9px;width:5.5px;height:1.1px;background:#808080;"></div>
<div class="a" style="left:1472.5px;top:282.8px;width:5.5px;height:1.1px;background:#808080;"></div>
<div class="a" style="left:1343.4px;top:295px;width:46.6px;height:12.5px;background:#262626;border:1px solid #3c3c3c"></div>
<svg class="a" style="left:1346.3px;top:298px;" width="6" height="6" viewBox="0 0 6 6"><circle cx="2.4" cy="2.4" r="1.8" stroke="#ddd" stroke-width="1" fill="none"/><path d="M3.8 3.8 L5.6 5.6" stroke="#ddd" stroke-width="1.1"/></svg>
<div class="t" style="left:1353.5px;top:297.6px;font-size:6.8px;line-height:9.5px;color:#d8d8d8;">类型</div>
<svg class="a" style="left:1383px;top:299.8px;" width="5.5" height="4" viewBox="0 0 5.5 4"><path d="M0.5 0.6 L2.7 2.8 L4.9 0.6" stroke="#999" stroke-width="0.9" fill="none"/></svg>
<svg class="a" style="left:1400px;top:297.8px;" width="8.5" height="7" viewBox="0 0 8.5 7"><rect x="0.5" y="0.5" width="7.5" height="6" rx="0.8" stroke="#dcdcdc" stroke-width="0.9" fill="none"/><path d="M1.3 5.6 L3 3.3 L4.3 4.6 L5.3 3.8 L7 5.6 Z" fill="#dcdcdc"/></svg>
<svg class="a" style="left:1414.8px;top:297.7px;" width="7.6" height="7.6" viewBox="0 0 7.6 7.6"><circle cx="3.8" cy="3.8" r="3.2" stroke="#dcdcdc" stroke-width="0.9" fill="none"/><path d="M3.8 0.6 A3.2 3.2 0 0 1 6.1 6.1 L1.5 1.5 A3.2 3.2 0 0 1 3.8 0.6 Z" fill="#dcdcdc" transform="rotate(90 3.8 3.8)"/></svg>
<div class="t" style="left:1429.5px;top:296.1px;font-size:8.8px;line-height:12.3px;color:#dcdcdc;font-family:Liberation Serif,serif;font-weight:bold">T</div>
<svg class="a" style="left:1442.5px;top:297.7px;" width="7.6" height="7.6" viewBox="0 0 7.6 7.6"><rect x="1.2" y="1.2" width="5.2" height="5.2" stroke="#dcdcdc" stroke-width="0.9" fill="none"/><rect x="0" y="0" width="2" height="2" fill="#dcdcdc"/><rect x="5.6" y="0" width="2" height="2" fill="#dcdcdc"/><rect x="0" y="5.6" width="2" height="2" fill="#dcdcdc"/><rect x="5.6" y="5.6" width="2" height="2" fill="#dcdcdc"/></svg>
<svg class="a" style="left:1457.2px;top:297.4px;" width="7.6" height="8.4" viewBox="0 0 7.6 8.4"><path d="M0.8 2.3 L4.6 2.3 L4.6 8 L0.8 8 Z" fill="#dcdcdc"/><path d="M2.7 0.6 L6.9 0.6 L6.9 6.5 L5.4 6.5" stroke="#dcdcdc" stroke-width="0.9" fill="none"/></svg>
<div class="a" style="left:1475px;top:294.3px;width:4px;height:4.3px;background:#f0f0f0;border-radius:50%"></div>
<div class="a" style="left:1475px;top:298px;width:4px;height:6px;background:#222;border-radius:2px"></div>
<div class="a" style="left:1343.4px;top:312.6px;width:65.3px;height:12.8px;background:#262626;border:1px solid #3c3c3c"></div>
<div class="t" style="left:1347.5px;top:315.1px;font-size:6.8px;line-height:9.5px;color:#d8d8d8;">正常</div>
<svg class="a" style="left:1401.5px;top:317.2px;" width="5.5" height="4" viewBox="0 0 5.5 4"><path d="M0.5 0.6 L2.7 2.8 L4.9 0.6" stroke="#999" stroke-width="0.9" fill="none"/></svg>
<div class="t" style="left:1413.7px;top:315.2px;font-size:6.7px;line-height:9.4px;color:#b4b4b4;letter-spacing:-0.55px">不透明度:</div>
<div class="a" style="left:1447.6px;top:312.6px;width:21.4px;height:12.8px;background:#262626;border:1px solid #3c3c3c"></div>
<div class="t" style="left:1450px;top:315.3px;font-size:6.5px;line-height:9.1px;color:#d8d8d8;">50%</div>
<div class="a" style="left:1470.5px;top:312.6px;width:8.5px;height:12.8px;background:#262626;border:1px solid #3c3c3c"></div>
<svg class="a" style="left:1472px;top:317.2px;" width="5.5" height="4" viewBox="0 0 5.5 4"><path d="M0.5 0.6 L2.7 2.8 L4.9 0.6" stroke="#999" stroke-width="0.9" fill="none"/></svg>
<div class="t" style="left:1342.8px;top:330.9px;font-size:6.7px;line-height:9.4px;color:#b4b4b4;">锁定:</div>
<svg class="a" style="left:1364.5px;top:331.2px;" width="7" height="7" viewBox="0 0 7 7"><rect x="0.4" y="0.4" width="6.2" height="6.2" stroke="#dcdcdc" stroke-width="0.8" fill="none"/><rect x="0.8" y="0.8" width="1.8" height="1.8" fill="#dcdcdc"/><rect x="4.4" y="0.8" width="1.8" height="1.8" fill="#dcdcdc"/><rect x="2.6" y="2.6" width="1.8" height="1.8" fill="#dcdcdc"/><rect x="0.8" y="4.4" width="1.8" height="1.8" fill="#dcdcdc"/><rect x="4.4" y="4.4" width="1.8" height="1.8" fill="#dcdcdc"/></svg>
<svg class="a" style="left:1377px;top:330.6px;" width="8.3" height="8.3" viewBox="0 0 8.3 8.3"><path d="M7.5 0.6 C5.8 1.5 4.2 3.4 3.4 4.7 L4.3 5.5 C5.6 4.7 7 2.6 7.5 0.6 Z" fill="#dcdcdc"/><path d="M3 5.1 C2.1 5.3 1.8 6 1.7 6.8 C1.6 7.3 1.3 7.6 0.8 7.8 C2.1 8.1 3.6 7.6 3.8 6 Z" fill="#dcdcdc"/></svg>
<svg class="a" style="left:1389.8px;top:330.9px;" width="7.6" height="7.6" viewBox="0 0 7.6 7.6"><g transform="scale(0.633)"><path d="M6 0 L8.2 2.6 L6.7 2.6 L6.7 5.3 L9.4 5.3 L9.4 3.8 L12 6 L9.4 8.2 L9.4 6.7 L6.7 6.7 L6.7 9.4 L8.2 9.4 L6 12 L3.8 9.4 L5.3 9.4 L5.3 6.7 L2.6 6.7 L2.6 8.2 L0 6 L2.6 3.8 L2.6 5.3 L5.3 5.3 L5.3 2.6 L3.8 2.6 Z" fill="#dcdcdc"/></g></svg>
<svg class="a" style="left:1402.5px;top:330.6px;" width="8.3" height="8.3" viewBox="0 0 8.3 8.3"><path d="M1.9 0.4 L1.9 6.4 L7.9 6.4 M0.4 1.9 L6.4 1.9 L6.4 7.9" stroke="#dcdcdc" stroke-width="0.9" fill="none"/></svg>
<svg class="a" style="left:1415.6px;top:330.4px;" width="7" height="8.5" viewBox="0 0 7 8.5"><rect x="0.4" y="3.5" width="6.2" height="4.6" rx="0.6" fill="#dcdcdc"/><path d="M1.8 3.5 L1.8 2.3 A1.7 1.7 0 0 1 5.2 2.3 L5.2 3.5" stroke="#dcdcdc" stroke-width="0.9" fill="none"/></svg>
<div class="t" style="left:1427.5px;top:330.9px;font-size:6.7px;line-height:9.4px;color:#b4b4b4;">填充:</div>
<div class="a" style="left:1447.6px;top:328.3px;width:21.4px;height:12.8px;background:#262626;border:1px solid #3c3c3c"></div>
<div class="t" style="left:1449.3px;top:331.2px;font-size:6.3px;line-height:8.8px;color:#d8d8d8;letter-spacing:-0.2px">100%</div>
<div class="a" style="left:1470.5px;top:328.3px;width:8.5px;height:12.8px;background:#262626;border:1px solid #3c3c3c"></div>
<svg class="a" style="left:1472px;top:333px;" width="5.5" height="4" viewBox="0 0 5.5 4"><path d="M0.5 0.6 L2.7 2.8 L4.9 0.6" stroke="#999" stroke-width="0.9" fill="none"/></svg>
<div class="a" style="left:1357px;top:345.4px;width:114.5px;height:16.2px;background:#4b4b4b;"></div>
<div class="a" style="left:1340px;top:361.7px;width:131.5px;height:0.6px;background:#262626;"></div>
<svg class="a" style="left:1344.4px;top:350.9px;" width="8.2" height="5.2" viewBox="0 0 8.2 5.2"><path d="M0.4 2.6 C1.9 0.2 6.3 0.2 7.8 2.6 C6.3 5 1.9 5 0.4 2.6 Z" stroke="#e8e8e8" stroke-width="0.9" fill="none"/><circle cx="4.1" cy="2.6" r="1.3" fill="#e8e8e8"/></svg>
<div class="a" style="left:1359px;top:347.9px;width:19px;height:11.2px;background-color:#fff;background-image:linear-gradient(45deg,#ccc 25%,transparent 25%,transparent 75%,#ccc 75%),linear-gradient(45deg,#ccc 25%,transparent 25%,transparent 75%,#ccc 75%);background-size:3.6px 3.6px;background-position:0 0,1.8px 1.8px;"></div>
<svg class="a" style="left:1357.2px;top:346.3px;" width="22.6" height="14.4" viewBox="0 0 22.6 14.4"><path d="M0.5 4 L0.5 0.5 L4 0.5 M18.6 0.5 L22.1 0.5 L22.1 4 M22.1 10.4 L22.1 13.9 L18.6 13.9 M4 13.9 L0.5 13.9 L0.5 10.4" stroke="#f2f2f2" stroke-width="1" fill="none"/></svg>
<div class="t" style="left:1383.6px;top:349.5px;font-size:6.9px;line-height:9.7px;color:#e2e2e2;letter-spacing:-0.1px">花纹 拷贝 3</div>
<div class="a" style="left:1340px;top:378.53px;width:131.5px;height:0.6px;background:#262626;"></div>
<svg class="a" style="left:1344.4px;top:367.72999999999996px;" width="8.2" height="5.2" viewBox="0 0 8.2 5.2"><path d="M0.4 2.6 C1.9 0.2 6.3 0.2 7.8 2.6 C6.3 5 1.9 5 0.4 2.6 Z" stroke="#e8e8e8" stroke-width="0.9" fill="none"/><circle cx="4.1" cy="2.6" r="1.3" fill="#e8e8e8"/></svg>
<div class="a" style="left:1359px;top:364.7px;width:19px;height:11.2px;background-color:#fff;background-image:linear-gradient(45deg,#ccc 25%,transparent 25%,transparent 75%,#ccc 75%),linear-gradient(45deg,#ccc 25%,transparent 25%,transparent 75%,#ccc 75%);background-size:3.6px 3.6px;background-position:0 0,1.8px 1.8px;"></div>
<div class="t" style="left:1383.6px;top:366.4px;font-size:6.9px;line-height:9.7px;color:#e2e2e2;letter-spacing:-0.1px">花纹 拷贝 2</div>
<div class="a" style="left:1340px;top:395.35999999999996px;width:131.5px;height:0.6px;background:#262626;"></div>
<svg class="a" style="left:1344.4px;top:384.55999999999995px;" width="8.2" height="5.2" viewBox="0 0 8.2 5.2"><path d="M0.4 2.6 C1.9 0.2 6.3 0.2 7.8 2.6 C6.3 5 1.9 5 0.4 2.6 Z" stroke="#e8e8e8" stroke-width="0.9" fill="none"/><circle cx="4.1" cy="2.6" r="1.3" fill="#e8e8e8"/></svg>
<div class="a" style="left:1359px;top:381.6px;width:19px;height:11.2px;background-color:#fff;background-image:linear-gradient(45deg,#ccc 25%,transparent 25%,transparent 75%,#ccc 75%),linear-gradient(45deg,#ccc 25%,transparent 25%,transparent 75%,#ccc 75%);background-size:3.6px 3.6px;background-position:0 0,1.8px 1.8px;"></div>
<div class="t" style="left:1383.6px;top:383.2px;font-size:6.9px;line-height:9.7px;color:#e2e2e2;letter-spacing:-0.1px">花纹 拷贝</div>
<div class="a" style="left:1340px;top:412.19px;width:131.5px;height:0.6px;background:#262626;"></div>
<svg class="a" style="left:1344.4px;top:401.39px;" width="8.2" height="5.2" viewBox="0 0 8.2 5.2"><path d="M0.4 2.6 C1.9 0.2 6.3 0.2 7.8 2.6 C6.3 5 1.9 5 0.4 2.6 Z" stroke="#e8e8e8" stroke-width="0.9" fill="none"/><circle cx="4.1" cy="2.6" r="1.3" fill="#e8e8e8"/></svg>
<div class="a" style="left:1359px;top:398.4px;width:19px;height:11.2px;background-color:#fff;background-image:linear-gradient(45deg,#ccc 25%,transparent 25%,transparent 75%,#ccc 75%),linear-gradient(45deg,#ccc 25%,transparent 25%,transparent 75%,#ccc 75%);background-size:3.6px 3.6px;background-position:0 0,1.8px 1.8px;"></div>
<div class="t" style="left:1383.6px;top:400.0px;font-size:6.9px;line-height:9.7px;color:#e2e2e2;letter-spacing:-0.1px">花纹</div>
<div class="a" style="left:1340px;top:429.02px;width:131.5px;height:0.6px;background:#262626;"></div>
<svg class="a" style="left:1344.4px;top:418.21999999999997px;" width="8.2" height="5.2" viewBox="0 0 8.2 5.2"><path d="M0.4 2.6 C1.9 0.2 6.3 0.2 7.8 2.6 C6.3 5 1.9 5 0.4 2.6 Z" stroke="#e8e8e8" stroke-width="0.9" fill="none"/><circle cx="4.1" cy="2.6" r="1.3" fill="#e8e8e8"/></svg>
<div class="a" style="left:1359px;top:415.2px;width:19px;height:11.2px;background-color:#fff;background-image:linear-gradient(45deg,#ccc 25%,transparent 25%,transparent 75%,#ccc 75%),linear-gradient(45deg,#ccc 25%,transparent 25%,transparent 75%,#ccc 75%);background-size:3.6px 3.6px;background-position:0 0,1.8px 1.8px;"></div>
<div class="a" style="left:1368px;top:415.21999999999997px;width:10px;height:2.6px;background:#f0b4ac;"></div>
<div class="a" style="left:1368px;top:417.82px;width:10px;height:3px;background:#f8f8f8;"></div>
<div class="a" style="left:1370.5px;top:420.32px;width:7.5px;height:6.1px;background:#3a3a3a;"></div>
<svg class="a" style="left:1371.6px;top:421.32px;" width="5.2" height="4.4" viewBox="0 0 5.2 4.4"><rect x="0.6" y="0.6" width="4" height="3.2" stroke="#eee" stroke-width="0.8" fill="none"/></svg>
<div class="t" style="left:1383.6px;top:416.9px;font-size:6.9px;line-height:9.7px;color:#e2e2e2;letter-spacing:-0.1px">矩形 1</div>
<div class="a" style="left:1340px;top:445.84999999999997px;width:131.5px;height:0.6px;background:#262626;"></div>
<svg class="a" style="left:1344.4px;top:435.04999999999995px;" width="8.2" height="5.2" viewBox="0 0 8.2 5.2"><path d="M0.4 2.6 C1.9 0.2 6.3 0.2 7.8 2.6 C6.3 5 1.9 5 0.4 2.6 Z" stroke="#e8e8e8" stroke-width="0.9" fill="none"/><circle cx="4.1" cy="2.6" r="1.3" fill="#e8e8e8"/></svg>
<div class="a" style="left:1359px;top:432.04999999999995px;width:19px;height:11.2px;background:#fff;"></div>
<div class="t" style="left:1383.6px;top:433.7px;font-size:6.9px;line-height:9.7px;color:#e2e2e2;letter-spacing:-0.1px">背景</div>
<svg class="a" style="left:1455.6px;top:433.45px;" width="7" height="8.5" viewBox="0 0 7 8.5"><rect x="0.5" y="3.5" width="6" height="4.5" rx="0.6" stroke="#bbb" stroke-width="0.9" fill="none"/><path d="M1.8 3.5 L1.8 2.3 A1.7 1.7 0 0 1 5.2 2.3 L5.2 3.5" stroke="#bbb" stroke-width="0.9" fill="none"/></svg>
<div class="a" style="left:1471.5px;top:343px;width:10.5px;height:288px;background:#2a2a2a;"></div>
<div class="a" style="left:1340px;top:631px;width:142px;height:14.3px;background:#2d2d2d;"></div>
<div class="a" style="left:1340px;top:631px;width:142px;height:0.7px;background:#262626;"></div>
<svg class="a" style="left:1362px;top:635.2px;" width="9" height="5.5" viewBox="0 0 9 5.5"><rect x="0.5" y="0.6" width="3.8" height="3.6" rx="1.8" stroke="#6e6e6e" stroke-width="0.8" fill="none"/><rect x="4.7" y="0.6" width="3.8" height="3.6" rx="1.8" stroke="#6e6e6e" stroke-width="0.8" fill="none"/></svg>
<div class="t" style="left:1379.2px;top:632.9px;font-size:8px;line-height:11.2px;color:#dcdcdc;font-family:Liberation Serif,serif;font-style:italic;font-weight:bold">fx</div>
<svg class="a" style="left:1393.5px;top:634px;" width="9" height="7.6" viewBox="0 0 9 7.6"><rect x="0" y="0" width="9" height="7.6" rx="0.8" fill="#dcdcdc"/><circle cx="4.5" cy="3.8" r="2" fill="#2d2d2d"/></svg>
<svg class="a" style="left:1410.4px;top:633.7px;" width="8.3" height="8.3" viewBox="0 0 8.3 8.3"><circle cx="4.15" cy="4.15" r="3.5" stroke="#dcdcdc" stroke-width="0.9" fill="none"/><path d="M1.7 6.6 A3.5 3.5 0 0 0 6.6 1.7 Z" fill="#dcdcdc"/></svg>
<svg class="a" style="left:1425.5px;top:634px;" width="9" height="7.6" viewBox="0 0 9 7.6"><path d="M0 0.8 L3.4 0.8 L4.1 1.7 L9 1.7 L9 7.6 L0 7.6 Z" fill="#dcdcdc"/></svg>
<svg class="a" style="left:1441.8px;top:633.7px;" width="8.3" height="8.3" viewBox="0 0 8.3 8.3"><rect x="0.5" y="0.5" width="7.3" height="7.3" rx="0.8" stroke="#dcdcdc" stroke-width="0.9" fill="none"/><path d="M4.15 2.2 L4.15 6.1 M2.2 4.15 L6.1 4.15" stroke="#dcdcdc" stroke-width="0.9"/></svg>
<svg class="a" style="left:1457.6px;top:633.2px;" width="7.6" height="9" viewBox="0 0 7.6 9"><path d="M0.4 1.9 L7.2 1.9 M2.6 1.7 L2.6 0.5 L5 0.5 L5 1.7" stroke="#dcdcdc" stroke-width="0.9" fill="none"/><path d="M1.1 3 L6.5 3 L6.1 8.7 L1.5 8.7 Z" fill="#dcdcdc"/></svg>
<div class="a" style="left:1480.6px;top:230.7px;width:1.4px;height:415px;background:#101010;"></div>
<div class="a" style="left:742.3px;top:645.3px;width:739.7px;height:0.8px;background:#111;"></div>
<div class="a" style="left:742.3px;top:746px;width:739.7px;height:90px;background:#151515;"></div>
<div class="t" style="left:753.6px;top:754.5px;font-size:8.6px;line-height:12.0px;color:#f0f0f0;letter-spacing:-0.15px;font-weight:bold">0:01:55</div>
<div class="t" style="left:1438.8px;top:754.5px;font-size:8.6px;line-height:12.0px;color:#f0f0f0;letter-spacing:-0.15px;font-weight:bold">0:03:50</div>
<div class="a" style="left:801px;top:757.6px;width:621.3px;height:3px;background:#949494;border-radius:1.5px"></div>
<div class="a" style="left:801px;top:757.6px;width:211px;height:3px;background:#ee7a22;border-radius:1.5px"></div>
<div class="a" style="left:1005.8px;top:753px;width:12.4px;height:12.4px;background:#4a4a4a;border-radius:50%"></div>
<div class="a" style="left:1008.3px;top:755.5px;width:7.4px;height:7.4px;background:#f18a2e;border-radius:50%"></div>
<div class="t" style="left:753px;top:795.1px;font-size:15.7px;line-height:22.0px;color:#ffffff;font-weight:500;letter-spacing:-0.1px"><b>9.5</b>&nbsp; 书籍设计——制作化妆美...</div>
<svg class="a" style="left:996px;top:797px;" width="16" height="13" viewBox="0 0 16 13"><path d="M1 2.5 L4 2.5 L10 10.5 L14 10.5 M1 10.5 L4 10.5 L6 8 M8.2 5 L10 2.5 L14 2.5 M12.2 0.8 L14.2 2.5 L12.2 4.3 M12.2 8.8 L14.2 10.5 L12.2 12.3" stroke="#e8e8e8" stroke-width="1.2" fill="none"/></svg>
<svg class="a" style="left:1032.5px;top:797px;" width="12" height="13" viewBox="0 0 12 13"><path d="M1 0.5 L1 12.5" stroke="#e8e8e8" stroke-width="1.5"/><path d="M11.5 0.8 L11.5 12.2 L3.3 6.5 Z" fill="#e8e8e8"/></svg>
<svg class="a" style="left:1064.5px;top:796px;" width="15" height="15" viewBox="0 0 15 15"><path d="M2.6 7.6 A4.9 4.9 0 0 1 12.2 7" stroke="#e8e8e8" stroke-width="1.25" fill="none"/><path d="M1.3 3.6 L2.5 7.8 L6.4 6.4" stroke="#e8e8e8" stroke-width="1.2" fill="none"/></svg>
<div class="t" style="left:1068.8px;top:803.6px;font-size:6.4px;line-height:9.0px;color:#e8e8e8;font-weight:bold;letter-spacing:-0.3px">10</div>
<div class="a" style="left:1093px;top:785.2px;width:37px;height:37px;border-radius:50%;background:linear-gradient(150deg,#f5922c 0%,#f17c2a 42%,#d9409a 72%,#983fd2 100%);"></div>
<div class="a" style="left:1095.7px;top:787.9px;width:31.6px;height:31.6px;background:#212121;border-radius:50%"></div>
<svg class="a" style="left:1105.5px;top:795.5px;" width="14" height="17" viewBox="0 0 14 17"><path d="M1 0.8 L13.3 8.5 L1 16.2 Z" fill="#fff" stroke="#fff" stroke-width="0.8" stroke-linejoin="round"/></svg>
<svg class="a" style="left:1143px;top:796px;" width="15" height="15" viewBox="0 0 15 15"><path d="M12.4 7.6 A4.9 4.9 0 0 0 2.8 7" stroke="#e8e8e8" stroke-width="1.25" fill="none"/><path d="M13.7 3.6 L12.5 7.8 L8.6 6.4" stroke="#e8e8e8" stroke-width="1.2" fill="none"/></svg>
<div class="t" style="left:1146.6px;top:803.6px;font-size:6.4px;line-height:9.0px;color:#e8e8e8;font-weight:bold;letter-spacing:-0.3px">30</div>
<svg class="a" style="left:1178.7px;top:797px;" width="12" height="13" viewBox="0 0 12 13"><path d="M11 0.5 L11 12.5" stroke="#6a6a6a" stroke-width="1.5"/><path d="M0.5 0.8 L0.5 12.2 L8.7 6.5 Z" fill="#6a6a6a"/></svg>
<svg class="a" style="left:1211.5px;top:797px;" width="15" height="13" viewBox="0 0 15 13"><path d="M2.5 9.5 A4 4 0 0 1 4.5 2.5 L10.5 2.5 A4 4 0 0 1 12.5 9.5 M11.5 10.5 L4.5 10.5" stroke="#e8e8e8" stroke-width="1.2" fill="none"/><path d="M1.5 0.8 L13.5 12.2" stroke="#e8e8e8" stroke-width="1.2"/><path d="M6.3 8.7 L4.3 10.5 L6.3 12.3" stroke="#e8e8e8" stroke-width="1.1" fill="none"/></svg>
<svg class="a" style="left:1321.7px;top:798.5px;" width="13.5" height="10.5" viewBox="0 0 13.5 10.5"><rect x="0.6" y="0.6" width="12.3" height="9.3" rx="1.6" stroke="#e8e8e8" stroke-width="1.1" fill="none"/><path d="M2.8 7.2 L5.5 7.2 M6.8 7.2 L10.7 7.2" stroke="#e8e8e8" stroke-width="1.1"/></svg>
<svg class="a" style="left:1355.5px;top:797.5px;" width="14" height="12" viewBox="0 0 14 12"><path d="M0.7 4 L3 4 L6.3 1 L6.3 11 L3 8 L0.7 8 Z" stroke="#e8e8e8" stroke-width="1.1" fill="none" stroke-linejoin="round"/><path d="M8.3 3.8 A3 3 0 0 1 8.3 8.2 M10 1.8 A5.6 5.6 0 0 1 10 10.2" stroke="#e8e8e8" stroke-width="1.1" fill="none"/></svg>
<svg class="a" style="left:1390.5px;top:797.5px;" width="12" height="12" viewBox="0 0 12 12"><path d="M1 11 L11 1 M6.5 0.8 L11.2 0.8 L11.2 5.5 M5.5 11.2 L0.8 11.2 L0.8 6.5" stroke="#e8e8e8" stroke-width="1.2" fill="none"/></svg>
<svg class="a" style="left:1424.5px;top:797.5px;" width="12" height="12" viewBox="0 0 12 12"><path d="M4 0.8 L2.5 0.8 A1.7 1.7 0 0 0 0.8 2.5 L0.8 4 M8 0.8 L9.5 0.8 A1.7 1.7 0 0 1 11.2 2.5 L11.2 9.5 A1.7 1.7 0 0 1 9.5 11.2 L8 11.2" stroke="#e8e8e8" stroke-width="1.1" fill="none"/><rect x="0.8" y="6" width="5.2" height="5.2" rx="1" stroke="#e8e8e8" stroke-width="1.1" fill="none"/><path d="M6 3.5 L8.5 3.5 L8.5 6" stroke="#e8e8e8" stroke-width="1" fill="none"/></svg>
<div class="a" style="left:1459.6px;top:802.8px;width:1.8px;height:1.8px;background:#e8e8e8;border-radius:50%"></div>
<div class="a" style="left:1463.3999999999999px;top:802.8px;width:1.8px;height:1.8px;background:#e8e8e8;border-radius:50%"></div>
<div class="a" style="left:1467.1999999999998px;top:802.8px;width:1.8px;height:1.8px;background:#e8e8e8;border-radius:50%"></div>
<div class="a" style="left:1480.4px;top:41.3px;width:1.6px;height:795px;background:#0a0a0a;"></div>
<div class="a" style="left:0;top:836.5px;width:1482px;height:36.7px;background:linear-gradient(to right,#dfe9f3 0%,#e1eaf4 20%,#d8e1f5 27%,#d6dff4 45%,#dbe3f4 60%,#dfe8f4 75%,#e0eaf4 100%)"></div>
<div class="a" style="left:0px;top:836.5px;width:1482px;height:0.8px;background:#c9d0dc;"></div>
<div class="a" style="left:15px;top:846.5px;width:16px;height:16px;border-radius:50%;background:radial-gradient(circle at 40% 35%,#ffa62a,#f47f12 70%,#ee6d0c)"></div>
<div class="t" style="left:38px;top:843.4px;font-size:9px;line-height:12.6px;color:#1e1e1e;">7°C</div>
<div class="t" style="left:38px;top:856.5px;font-size:8.6px;line-height:12.0px;color:#5a5a5a;">晴朗</div>
<div class="a" style="left:509.3px;top:846.2px;width:8.8px;height:8.8px;background:linear-gradient(135deg,#35b6f2,#0a6fd2)"></div>
<div class="a" style="left:518.9px;top:846.2px;width:8.8px;height:8.8px;background:linear-gradient(135deg,#35b6f2,#0a6fd2)"></div>
<div class="a" style="left:509.3px;top:855.8px;width:8.8px;height:8.8px;background:linear-gradient(135deg,#35b6f2,#0a6fd2)"></div>
<div class="a" style="left:518.9px;top:855.8px;width:8.8px;height:8.8px;background:linear-gradient(135deg,#35b6f2,#0a6fd2)"></div>
<div class="a" style="left:538px;top:844px;width:168px;height:22.5px;background:#f3f6fb;border-radius:11.3px;border:1px solid #e9edf5"></div>
<svg class="a" style="left:546.5px;top:849.5px;" width="11" height="11" viewBox="0 0 11 11"><circle cx="4.6" cy="4.6" r="3.7" stroke="#2a2a2a" stroke-width="1.3" fill="none"/><path d="M7.3 7.3 L10.3 10.3" stroke="#2a2a2a" stroke-width="1.4" stroke-linecap="round"/></svg>
<div class="t" style="left:567px;top:849.6px;font-size:9.6px;line-height:13.4px;color:#5a5a5a;">搜索</div>
<svg class="a" style="left:673px;top:846px;" width="29" height="19" viewBox="0 0 29 19"><g transform="rotate(-25 14 10)"><ellipse cx="9" cy="10" rx="5" ry="4.2" fill="#b8501c"/><ellipse cx="15.5" cy="10" rx="4" ry="3.5" fill="#c25a20"/><rect x="18" y="9.2" width="9" height="1.6" fill="#5a2e14"/><rect x="26" y="8.4" width="3" height="3.2" fill="#3a2010"/><path d="M6 10 L19 10" stroke="#3a1a08" stroke-width="0.8"/><ellipse cx="12" cy="10" rx="1.2" ry="2.6" fill="#8a3a12"/></g><path d="M3 11 L27 3" stroke="#9a6a4a" stroke-width="0.9"/><path d="M24 2 L28.5 2.5 L26 6 Z" fill="#3a5a8a"/></svg>
<div class="a" style="left:720.5px;top:849.5px;width:13px;height:11px;background:#f4f4f4;border:1px solid #bbb;border-radius:1.5px"></div>
<div class="a" style="left:716px;top:852.3px;width:13.2px;height:10.8px;background:#2a2a2a;border-radius:1.5px"></div>
<svg class="a" style="left:749.5px;top:846.5px;" width="21" height="18" viewBox="0 0 21 18"><path d="M0.5 2.5 A1.5 1.5 0 0 1 2 1 L7 1 L9 3.2 L19 3.2 A1.5 1.5 0 0 1 20.5 4.7 L20.5 7 L0.5 7 Z" fill="#e8a317"/><rect x="0.5" y="4.8" width="20" height="12.2" rx="1.5" fill="#fcd045"/><rect x="5.5" y="11.5" width="10" height="5.5" rx="0.8" fill="#2f8fe6"/><rect x="5.5" y="11.5" width="10" height="2" fill="#1f6fc8"/></svg>
<div class="a" style="left:784px;top:846px;width:19px;height:19px;border-radius:50%;background:conic-gradient(from 210deg,#1f7fd8,#2aa5e8 25%,#45c86a 45%,#36c2b0 55%,#1565c0 75%,#1f7fd8)"></div>
<div class="a" style="left:789.5px;top:851.5px;width:11px;height:9px;border-radius:50%;background:#e4ecf6"></div>
<div class="a" style="left:792px;top:850px;width:12px;height:9px;border-radius:50% 50% 50% 0;background:#1a6ac8"></div>
<svg class="a" style="left:818px;top:846px;" width="19" height="19" viewBox="0 0 19 19"><path d="M6 5 L6 3.5 A1.5 1.5 0 0 1 7.5 2 L11.5 2 A1.5 1.5 0 0 1 13 3.5 L13 5" stroke="#2a6ac0" stroke-width="1.4" fill="none"/><rect x="1" y="4.5" width="17" height="14" rx="2" fill="#2167c4"/><rect x="5.2" y="7.7" width="3.8" height="3.8" fill="#f25022"/><rect x="10" y="7.7" width="3.8" height="3.8" fill="#7fba00"/><rect x="5.2" y="12.5" width="3.8" height="3.8" fill="#00a4ef"/><rect x="10" y="12.5" width="3.8" height="3.8" fill="#ffb900"/></svg>
<svg class="a" style="left:851px;top:848px;" width="21" height="15" viewBox="0 0 21 15"><path d="M0.5 1 L4.5 1 L6.8 9 L9 2.5 L12 2.5 L14.2 9 L16.5 1 L20.5 1 L16 14 L12.6 14 L10.5 8 L8.4 14 L5 14 Z" fill="#e8341c"/></svg>
<div class="a" style="left:881px;top:841px;width:29.5px;height:28px;background:#f0f4fa;border-radius:4px"></div>
<div class="a" style="left:887px;top:846.5px;width:18px;height:17.5px;background:#0a1e38;border-radius:3.5px"></div>
<div class="t" style="left:890.2px;top:850.0px;font-size:9.2px;line-height:12.9px;color:#36a9ff;font-weight:bold;letter-spacing:-0.3px">Ps</div>
<div class="a" style="left:889.8px;top:867.3px;width:12.2px;height:2px;background:#1f78d8;border-radius:1px"></div>
<svg class="a" style="left:921.5px;top:846px;" width="17" height="19" viewBox="0 0 17 19"><rect x="1" y="1.5" width="15" height="17" rx="1.6" fill="#4ab4e6"/><rect x="1" y="1.5" width="15" height="3.4" rx="1.4" fill="#2a5a86"/><path d="M3.5 7.5 L13.5 7.5 M3.5 10 L13.5 10 M3.5 12.5 L13.5 12.5 M3.5 15 L10.5 15" stroke="#1f6fa8" stroke-width="0.9"/><path d="M4 0.5 L4 3 M7 0.5 L7 3 M10 0.5 L10 3 M13 0.5 L13 3" stroke="#c8d8e8" stroke-width="0.9"/></svg>
<div class="a" style="left:953.5px;top:845.7px;width:19.6px;height:19.6px;border-radius:50%;background:conic-gradient(from 200deg,#f28a1c,#e0458c,#8a3fd0,#f28a1c)"></div>
<div class="a" style="left:956.3px;top:848.5px;width:14px;height:14px;background:#2a2024;border-radius:50%"></div>
<svg class="a" style="left:960.3px;top:851.3px;" width="8" height="9" viewBox="0 0 8 9"><path d="M0.5 0.4 L7.5 4.5 L0.5 8.6 Z" fill="#fff"/></svg>
<div class="a" style="left:758px;top:868.3px;width:4px;height:1.4px;background:#7c8086;border-radius:0.7px"></div>
<div class="a" style="left:791.6px;top:868.3px;width:4px;height:1.4px;background:#7c8086;border-radius:0.7px"></div>
<div class="a" style="left:927.6px;top:868.3px;width:4px;height:1.4px;background:#7c8086;border-radius:0.7px"></div>
<div class="a" style="left:961.3px;top:868.3px;width:4px;height:1.4px;background:#7c8086;border-radius:0.7px"></div>
<svg class="a" style="left:1235px;top:852.5px;" width="10" height="6" viewBox="0 0 10 6"><path d="M1 5 L5 1 L9 5" stroke="#2a2a2a" stroke-width="1.3" fill="none"/></svg>
<svg class="a" style="left:1257px;top:847.5px;" width="15" height="15" viewBox="0 0 15 15"><path d="M2.5 6.5 A5 5 0 0 1 11.5 4 M12 8.5 A5 5 0 0 1 3.5 11.5" stroke="#2a2a2a" stroke-width="1.3" fill="none"/><path d="M12.3 1 L12 4.6 L8.6 4" stroke="#2a2a2a" stroke-width="1.2" fill="none"/><path d="M2.2 14 L3 10.8 L6 11.8" stroke="#2a2a2a" stroke-width="1.2" fill="none"/><circle cx="11.2" cy="11.3" r="3" fill="#1a6fe0"/></svg>
<svg class="a" style="left:1282.5px;top:849.5px;" width="15" height="12" viewBox="0 0 15 12"><path d="M4 10 A3 3 0 0 1 3.6 4.1 A4 4 0 0 1 11.2 4.3 A2.9 2.9 0 0 1 11.3 10 Z" stroke="#2a2a2a" stroke-width="1.2" fill="none"/><path d="M2 0.8 L13 11.2" stroke="#2a2a2a" stroke-width="1.2"/></svg>
<svg class="a" style="left:1307.5px;top:849px;" width="12" height="13" viewBox="0 0 12 13"><path d="M11 1 L1 6 L6.2 6.8 L7.6 12 Z" stroke="#2a6fd0" stroke-width="1.2" fill="none" stroke-linejoin="round"/></svg>
<div class="t" style="left:1332px;top:848.2px;font-size:11.5px;line-height:16.1px;color:#222;">英</div>
<svg class="a" style="left:1356px;top:848.5px;" width="14" height="14" viewBox="0 0 14 14"><rect x="0.8" y="1" width="10" height="8.6" rx="1" stroke="#2a2a2a" stroke-width="1.2" fill="none"/><path d="M3 12.5 L9 12.5 M6 9.8 L6 12.5" stroke="#2a2a2a" stroke-width="1.2"/><rect x="9" y="0.3" width="4" height="7" rx="1.6" fill="#e0eaf4" stroke="#2a2a2a" stroke-width="1.1"/><path d="M11 7.5 L11 10.5 L9.5 12" stroke="#2a2a2a" stroke-width="1" fill="none"/></svg>
<svg class="a" style="left:1376px;top:850.5px;" width="14" height="10" viewBox="0 0 14 10"><path d="M0.6 3.3 L2.5 3.3 L5.2 0.8 L5.2 9.2 L2.5 6.7 L0.6 6.7 Z" stroke="#2a2a2a" stroke-width="1" fill="none" stroke-linejoin="round"/><path d="M8 3 L12 7 M12 3 L8 7" stroke="#2a2a2a" stroke-width="1"/></svg>
<div class="t" style="left:1400px;top:843.9px;font-size:9px;line-height:12.6px;color:#222;width:49.3px;text-align:right">8:56</div>
<div class="t" style="left:1395px;top:856.0px;font-size:9.5px;line-height:13.3px;color:#222;width:54.3px;text-align:right;letter-spacing:0.05px">2025/12/29</div>
<svg class="a" style="left:1455px;top:848.5px;" width="12" height="14" viewBox="0 0 12 14"><path d="M6 0.8 A4.2 4.2 0 0 1 10.2 5 L10.2 8.5 L11.5 10.8 L0.5 10.8 L1.8 8.5 L1.8 5 A4.2 4.2 0 0 1 6 0.8 Z" fill="#115fc8"/><path d="M4.3 11.8 A1.8 1.8 0 0 0 7.7 11.8 Z" fill="#115fc8"/></svg>
<div class="a" style="left:-7px;top:908px;width:11px;height:11px;background:#3d6476;border-radius:50%"></div>
</div>
</body></html>
